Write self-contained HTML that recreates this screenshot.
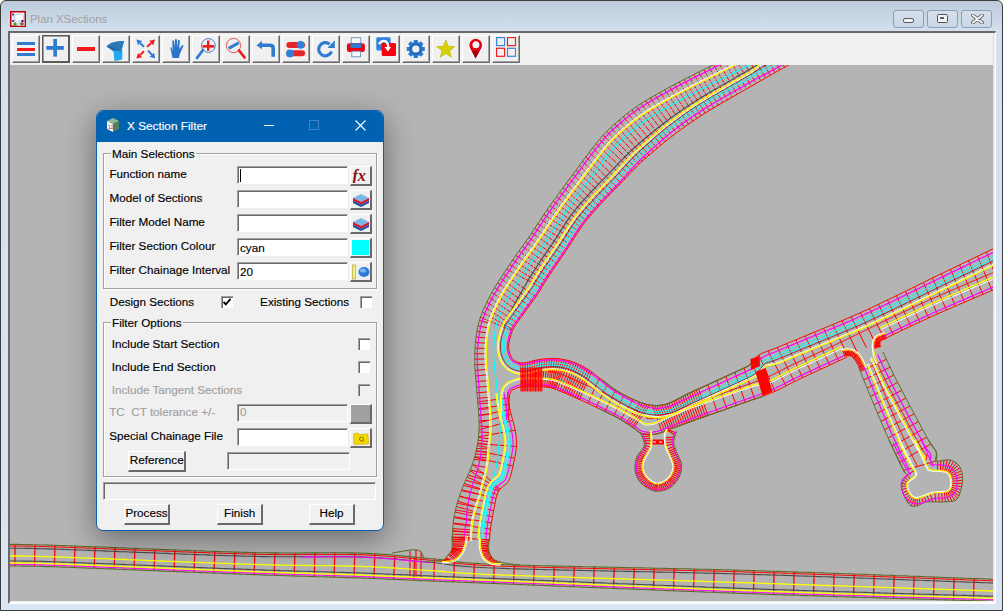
<!DOCTYPE html>
<html><head><meta charset="utf-8">
<style>
*{box-sizing:border-box;margin:0;padding:0}
html,body{width:1003px;height:611px;overflow:hidden;background:#fff;font-family:"Liberation Sans",sans-serif}
#win{position:absolute;left:0;top:0;width:1003px;height:611px;border:1px solid #3c3c3c;border-radius:6px 6px 0 0;
 background:linear-gradient(#bccbdb,#d3e0ee 30px,#d9e5f2);overflow:hidden}
#ttl{position:absolute;left:29px;top:12px;font-size:11.4px;color:#a09e9c}
.tb{position:absolute;top:9px;width:31px;height:17.5px;border:1px solid #8d9db3;border-radius:3px;background:linear-gradient(#d5e0ec,#c8d6e6)}
#tool{position:absolute;left:9px;top:32px;width:983px;height:32px;background:#f0f0f0}
.btn{position:absolute;top:2px;width:28px;height:28px;background:#f0f0f0;border-top:1px solid #fff;border-left:1px solid #fff;border-right:1px solid #696969;border-bottom:1px solid #696969;box-shadow:inset -1px -1px 0 #a0a0a0}
.btn svg{position:absolute;left:0;top:0}
#map{position:absolute;left:9px;top:64px;width:983px;height:536px;background:#b4b4b4;overflow:hidden}
#dlg{position:absolute;left:96px;top:110px;width:288px;height:421px;background:#f0f0f0;border:1px solid #0a5fb0;border-radius:7px;overflow:hidden;
 box-shadow:0 8px 30px rgba(0,0,0,0.42);font-size:11.7px;color:#000}
#dtitle{position:absolute;left:0;top:0;width:286px;height:31px;background:#0062b1;color:#fff}
.t{position:absolute;white-space:nowrap;line-height:14px;-webkit-text-stroke:0.15px currentColor}
.grp{position:absolute;border:1px solid #a0a0a0;box-shadow:inset 1px 1px 0 #fff, 1px 1px 0 #fff}
.inp{position:absolute;width:111px;height:18px;background:#fff;border-top:1px solid #a0a0a0;border-left:1px solid #a0a0a0;box-shadow:inset 1px 1px 0 #696969;border-right:1px solid #fff;border-bottom:1px solid #fff}
.ib{position:absolute;width:21px;height:19px;background:#f0f0f0;border-top:1px solid #fff;border-left:1px solid #fff;border-right:2px solid #696969;border-bottom:2px solid #696969}
.cb{position:absolute;width:12px;height:12px;background:#fff;border-top:1px solid #a0a0a0;border-left:1px solid #a0a0a0;box-shadow:inset 1px 1px 0 #696969}
.pb{position:absolute;-webkit-text-stroke:0.15px #000;height:20px;background:#f0f0f0;border-top:1px solid #fff;border-left:1px solid #fff;border-right:2px solid #696969;border-bottom:2px solid #696969;text-align:center;line-height:16px}
.dis{color:#a0a0a0}
</style></head><body>
<div id="win">
 <!-- title icon -->
 <svg style="position:absolute;left:9px;top:10px" width="16" height="16" viewBox="0 0 16 16">
  <rect x="0.75" y="0.75" width="14.5" height="14.5" fill="#f4f8f8" stroke="#c00000" stroke-width="1.5"/>
  <rect x="8" y="11" width="6.5" height="4" fill="#a8e0e0"/>
  <path d="M4 6 Q6 2.5 9 3.5 Q12 2 13.5 5.5 Q14 8 12 10 Q9 9 7 11 Q5 10 4 6Z" fill="#fff" stroke="#5090d0" stroke-width="0.8" stroke-dasharray="1 0.8"/>
  <rect x="2.2" y="2.5" width="2" height="2" fill="#7a1a8a"/><rect x="2.2" y="9" width="2" height="2" fill="#7a1a8a"/><rect x="11.5" y="9" width="2" height="2" fill="#10108a"/>
  <path d="M5 11v4M3 13h4" stroke="#108010" stroke-width="1"/><path d="M12 11v4M10 13h4" stroke="#f00000" stroke-width="1"/>
 </svg>
 <div id="ttl">Plan XSections</div>
 <div class="tb" style="left:892px"><div style="position:absolute;left:9px;top:7px;width:11px;height:5px;background:#f2f2f2;border:1px solid #5a5a5a;border-radius:2px"></div></div>
 <div class="tb" style="left:926px"><div style="position:absolute;left:9px;top:3px;width:11px;height:9px;background:#f2f2f2;border:1.5px solid #505050;border-radius:1.5px"><div style="position:absolute;left:2px;top:2px;width:4px;height:2px;border:1px solid #606060;background:#dde"></div></div></div>
 <div class="tb" style="left:960px"><svg style="position:absolute;left:9px;top:3px" width="13" height="10" viewBox="0 0 13 10"><path d="M1.8 1.3L11.2 8.7M11.2 1.3L1.8 8.7" stroke="#6a6a6a" stroke-width="3.6" stroke-linecap="round"/><path d="M1.8 1.3L11.2 8.7M11.2 1.3L1.8 8.7" stroke="#f4f4f4" stroke-width="1.8" stroke-linecap="round"/></svg></div>
 <div style="position:absolute;left:7px;top:30px;width:988px;height:573px;border-left:2px solid #696969;border-top:2px solid #696969;border-right:1px solid #fff;border-bottom:2px solid #fff;box-shadow:inset -1px -1px 0 #f0f0f0"></div>
 <div id="tool">
<div class="btn" style="left:2px"><svg width="26" height="26" viewBox="0 0 26 26"><g transform="translate(-1,-1)"><rect x="5" y="7" width="18" height="3" fill="#2f7bd0"/><rect x="5" y="13" width="18" height="3" fill="#f01c1c"/><rect x="5" y="18" width="18" height="3" fill="#2f7bd0"/></g></svg></div>
<div class="btn" style="left:32px;border:1px solid #5a5a5a;border-right:2px solid #5a5a5a;border-bottom:2px solid #5a5a5a;box-shadow:inset 1px 1px 0 #a0a0a0"><svg width="26" height="26" viewBox="0 0 26 26"><g transform="translate(-2,-2)"><rect x="12.3" y="5" width="3.7" height="17.6" fill="#2f7bd0"/><rect x="5.3" y="12" width="17.5" height="3.8" fill="#2f7bd0"/></g></svg></div>
<div class="btn" style="left:62px"><svg width="26" height="26" viewBox="0 0 26 26"><g transform="translate(-1,-1)"><rect x="5" y="12" width="18" height="4" fill="#f01c1c"/></g></svg></div>
<div class="btn" style="left:92px"><svg width="26" height="26" viewBox="0 0 26 26"><g transform="translate(-1,-1)"><path d="M4.7 11.5 C7 7.5 15 5.8 22.2 6 L19.5 16 L11.5 16.5 Z" fill="#2a78b8"/><path d="M11.5 16 L20.4 15.6 L20.2 24.5 Q16 26 12.3 25.5 Z" fill="#22a8f0"/><path d="M4.7 11.5 Q12 13.5 19.5 16" stroke="#1a5a90" stroke-width="0.8" fill="none"/></g></svg></div>
<div class="btn" style="left:122px"><svg width="26" height="26" viewBox="0 0 26 26"><g transform="translate(-1,-1)"><path d="M12.0 11.8L8.0 8.0" stroke="#2f7bd0" stroke-width="2"/><path d="M4.4 4.6L10.1 5.9L6.0 10.2Z" fill="#2f7bd0"/><path d="M15.1 11.8L19.3 8.0" stroke="#f01c1c" stroke-width="2"/><path d="M23.0 4.6L21.3 10.2L17.3 5.8Z" fill="#f01c1c"/><path d="M12.0 16.3L8.0 20.1" stroke="#f01c1c" stroke-width="2"/><path d="M4.4 23.5L6.0 17.9L10.1 22.2Z" fill="#f01c1c"/><path d="M16.0 15.4L19.9 19.8" stroke="#2f7bd0" stroke-width="2"/><path d="M23.2 23.5L17.6 21.8L22.1 17.8Z" fill="#2f7bd0"/></g></svg></div>
<div class="btn" style="left:152px"><svg width="26" height="26" viewBox="0 0 26 26"><g transform="translate(-1,-1)"><path d="M10.5 23 L8.6 14 Q8.2 12 9.3 12 L10.6 16 L10.3 6 Q11 4.6 12 6 L12.6 13 L13 4.5 Q14 3.3 14.9 4.6 L15 13 L16 5.2 Q17 4.3 17.8 5.6 L17.3 14 L20 10.3 Q21.5 9.6 21.4 11 L17.8 19 L17 23 Z" fill="#2a72cc"/></g></svg></div>
<div class="btn" style="left:182px"><svg width="26" height="26" viewBox="0 0 26 26"><g transform="translate(-1,-1)"><circle cx="16.4" cy="10.5" r="6.9" fill="none" stroke="#3a70c0" stroke-width="0.9"/><rect x="10.6" y="10" width="11.6" height="2.6" fill="#f01c1c"/><rect x="15" y="5.5" width="2.4" height="10.3" fill="#f01c1c"/><path d="M11 15 L5 23" stroke="#2f7bd0" stroke-width="2.8" stroke-linecap="round"/></g></svg></div>
<div class="btn" style="left:212px"><svg width="26" height="26" viewBox="0 0 26 26"><g transform="translate(-1,-1)"><circle cx="11.5" cy="10.5" r="7.1" fill="none" stroke="#e04040" stroke-width="0.9"/><path d="M6.8 13.4 L16.8 7.8" stroke="#2f7bd0" stroke-width="3"/><path d="M17 15.5 L22.6 22.5" stroke="#f01c1c" stroke-width="2.8" stroke-linecap="round"/></g></svg></div>
<div class="btn" style="left:242px"><svg width="26" height="26" viewBox="0 0 26 26"><g transform="translate(-1,-1)"><path d="M4.4 10.2 L10 6 L10 14.3 Z" fill="#2f7bd0"/><path d="M9.5 10.2 H18 Q21.2 10.2 21.2 13.5 V21.7" stroke="#2f7bd0" stroke-width="3.6" fill="none"/></g></svg></div>
<div class="btn" style="left:272px"><svg width="26" height="26" viewBox="0 0 26 26"><g transform="translate(-1,-1)"><rect x="4.3" y="7" width="18.8" height="6" rx="3" fill="#e8262a"/><circle cx="18.6" cy="9.8" r="3.9" fill="#2f80d8"/><rect x="4.3" y="15.2" width="18.8" height="6" rx="3" fill="#e8262a"/><circle cx="8" cy="18.4" r="3.9" fill="#2f80d8"/></g></svg></div>
<div class="btn" style="left:302px"><svg width="26" height="26" viewBox="0 0 26 26"><g transform="translate(-1,-1)"><path d="M17.6 9.2 A6.6 6.6 0 1 0 19.5 16.5" stroke="#2f7bd0" stroke-width="3.2" fill="none"/><path d="M22.8 5.3 L22.8 13 L15.5 13 Z" fill="#2f7bd0"/></g></svg></div>
<div class="btn" style="left:332px"><svg width="26" height="26" viewBox="0 0 26 26"><g transform="translate(-1,-1)"><rect x="9.2" y="2.8" width="9.6" height="6" fill="#fafafa" stroke="#6a90b8" stroke-width="0.9"/><rect x="4.9" y="8.3" width="18" height="8.6" rx="2.5" fill="#f20010"/><rect x="8.4" y="8.3" width="11" height="4.8" rx="1" fill="#2f7ad0"/><rect x="9.8" y="16.2" width="8.8" height="5.6" fill="#fafafa" stroke="#6a90b8" stroke-width="0.9"/></g></svg></div>
<div class="btn" style="left:362px"><svg width="26" height="26" viewBox="0 0 26 26"><g transform="translate(-1,-1)"><rect x="4.3" y="2.2" width="14.3" height="13.4" rx="1.5" fill="#2e80d8"/><rect x="9.7" y="8" width="14.3" height="13" rx="1.5" fill="#f40010"/><path d="M7 9 Q10 4.5 14 6.5 Q16.5 8.5 16 13" stroke="#fff" stroke-width="2.4" fill="none"/><path d="M12.5 12 L19 12 L16 16.5 Z" fill="#fff"/></g></svg></div>
<div class="btn" style="left:392px"><svg width="26" height="26" viewBox="0 0 26 26"><g transform="translate(-1,-1)"><polygon points="22.78,11.99 22.78,16.01 20.49,16.07 19.99,17.27 21.57,18.93 18.73,21.77 17.07,20.19 15.87,20.69 15.81,22.98 11.79,22.98 11.73,20.69 10.53,20.19 8.87,21.77 6.03,18.93 7.61,17.27 7.11,16.07 4.82,16.01 4.82,11.99 7.11,11.93 7.61,10.73 6.03,9.07 8.87,6.23 10.53,7.81 11.73,7.31 11.79,5.02 15.81,5.02 15.87,7.31 17.07,7.81 18.73,6.23 21.57,9.07 19.99,10.73 20.49,11.93" fill="#2878d0"/><circle cx="13.8" cy="14.0" r="3.6" fill="#f0f0f0"/><circle cx="13.8" cy="14.0" r="5" fill="none" stroke="#1a5aa8" stroke-width="1"/></g></svg></div>
<div class="btn" style="left:422px"><svg width="26" height="26" viewBox="0 0 26 26"><g transform="translate(-1,-1)"><polygon points="13.80,4.90 16.15,11.26 22.93,11.53 17.60,15.74 19.44,22.27 13.80,18.50 8.16,22.27 10.00,15.74 4.67,11.53 11.45,11.26" fill="#d8d000" stroke="#b8b000" stroke-width="0.6"/></g></svg></div>
<div class="btn" style="left:452px"><svg width="26" height="26" viewBox="0 0 26 26"><g transform="translate(-1,-1)"><path d="M13.6 23.5 L8.2 13.2 A6.3 6.3 0 1 1 19.2 13.2 Z" fill="#e00010"/><path d="M13.6 23.5 L10 16 L17.2 16 Z" fill="#a00008"/><circle cx="13.9" cy="9.7" r="3.5" fill="#f4f4f4"/></g></svg></div>
<div class="btn" style="left:482px"><svg width="26" height="26" viewBox="0 0 26 26"><g transform="translate(-1,-1)"><rect x="4.6" y="2.6" width="8" height="8" fill="none" stroke="#3a88d8" stroke-width="1.2"/><rect x="15.5" y="2.6" width="8" height="8" fill="none" stroke="#f02020" stroke-width="1.2"/><rect x="4.6" y="13.3" width="8" height="8" fill="none" stroke="#f02020" stroke-width="1.2"/><rect x="15.5" y="13.3" width="8" height="8" fill="none" stroke="#3a88d8" stroke-width="1.2"/></g></svg></div>
 </div>
 <div id="map">
<svg width="983" height="536" viewBox="10 65 983 536" style="position:absolute;left:0;top:0" fill="none" stroke-linecap="butt" stroke-linejoin="round"><path d="M767.5 37.2L784.6 67.2M762.6 39.7L779.8 69.9M757.7 42.2L775.0 72.6M752.8 44.7L770.3 75.3M747.9 47.2L765.5 78.0M743.0 49.7L760.8 80.8M738.1 52.1L756.0 83.5M733.2 54.6L751.2 86.2M728.3 57.1L746.5 88.9M723.4 59.6L741.8 91.6M718.5 62.1L737.0 94.3M713.6 64.6L732.3 97.1M708.7 67.0L727.5 99.8M703.7 69.5L722.8 102.5M698.8 72.0L718.2 105.2M693.9 74.4L713.7 107.8M689.0 76.9L709.4 110.5M684.1 79.4L705.2 113.0M679.2 82.0L701.1 115.7M674.4 84.5L696.9 118.4M669.5 87.1L692.8 121.2M664.7 89.8L688.5 124.2M659.9 92.5L684.4 127.0M655.1 95.2L680.3 130.0M650.3 97.9L676.2 133.0M645.6 100.7L672.4 135.8M641.0 103.7L668.7 138.8M636.4 106.7L665.0 141.7M631.9 109.9L661.1 144.9M627.6 113.3L657.1 148.2M623.3 116.7L653.0 151.7M619.0 120.2L649.1 155.1M614.9 123.8L645.3 158.4M610.8 127.5L642.1 161.3M606.8 131.3L639.0 164.3M603.1 135.3L635.7 167.5M599.5 139.5L632.3 171.0M596.0 143.7L629.0 174.6M592.6 148.1L625.0 178.8M589.2 152.4L621.0 183.0M585.9 156.8L616.9 187.2M582.6 161.2L613.1 191.1M579.3 165.6L609.4 194.8M576.0 170.0L606.0 198.5M572.8 174.5L602.4 202.2M569.5 178.9L599.0 205.9M566.2 183.3L595.6 209.6M563.0 187.7L592.4 213.3M559.7 192.2L589.2 216.9M556.5 196.6L586.2 220.6M553.3 201.1L583.6 224.0M550.1 205.6L581.2 227.3M547.0 210.1L578.7 231.0M543.8 214.6L576.1 235.1M540.8 219.2L573.2 239.6M537.7 223.8L570.1 244.6M534.7 228.3L566.9 249.4M531.7 232.9L563.5 254.5M528.6 237.5L560.2 259.3M525.5 242.0L557.1 263.8M522.3 246.5L554.0 268.3M519.1 251.0L551.2 272.5M515.9 255.4L548.4 276.7M512.7 260.0L545.7 280.9M509.6 264.5L543.2 285.0M506.5 269.1L541.6 287.7M503.5 273.7L535.8 296.8M500.5 278.3L532.5 301.4M497.6 282.9L529.2 305.9M494.7 287.6L526.0 310.3M492.0 292.4L522.9 314.7M489.3 297.2L519.9 318.9M486.8 302.1L517.0 323.0M484.5 307.1L514.6 326.6M482.3 312.1L512.9 329.5M480.4 317.3L512.3 330.7" stroke="#ff0000" stroke-width="1.00" stroke-dasharray="6 1.2"/><path d="M479.4 320.5L489.7 323.3M478.0 325.9L488.6 328.0M476.9 331.4L487.7 333.1M476.0 336.9L487.0 338.1M475.4 342.5L486.5 343.3M475.0 348.1L486.2 348.5M474.7 353.7L486.1 353.8M474.7 359.3L486.2 358.9M474.8 364.9L486.5 364.1M475.2 370.5L486.9 369.4M475.6 376.0L487.4 374.8M476.0 381.6L488.0 380.6M476.5 387.2L488.4 386.2M476.9 392.8L488.9 391.8M477.4 398.4L489.4 397.3M477.9 403.9L489.9 402.9M478.4 409.5L490.3 408.6M478.8 415.1L490.7 414.4M479.0 420.7L491.0 420.4M479.1 426.3L491.1 426.4M478.9 431.9L490.8 432.7M478.4 437.5L490.3 438.9M478.0 440.2L489.9 441.9M477.6 443.0L489.4 444.9M477.1 445.8L489.0 447.5M476.6 448.5L489.0 448.9M476.0 451.3L488.8 452.1M475.4 454.0L488.7 455.0M474.7 456.7L488.4 458.0M473.9 459.4L488.0 461.2M472.2 464.7L487.1 467.6M470.2 470.0L485.8 473.7M468.0 475.1L484.2 479.6M465.7 480.2L482.7 484.9M463.5 485.3L481.4 489.9M461.4 490.6L480.3 494.6M459.5 495.8L477.9 502.1M457.8 501.2L476.3 507.0M456.3 506.5L474.9 511.7M455.0 512.0L473.8 516.2M453.9 517.5L472.9 520.9M453.2 523.0L472.3 525.2M452.7 528.6L471.8 529.9M452.6 531.4L471.7 532.4M452.4 534.2L471.5 535.2M452.4 537.0L471.4 537.6M452.3 539.8L471.4 540.1" stroke="#ff0000" stroke-width="1.00"/><path d="M477.7 401.8L508.3 398.0M478.3 408.8L509.1 404.3M478.8 415.8L510.0 409.5M479.1 422.8L511.2 414.4M479.0 429.8L512.8 420.4M478.4 436.8L515.1 430.2M477.5 443.7L516.4 446.4M476.1 450.6L514.7 458.2M474.5 457.4L513.0 466.0M472.4 464.1L499.9 489.1M469.9 470.6L499.3 490.0M467.1 477.0L498.5 491.2M464.3 483.4L497.2 494.5M461.6 489.9L496.1 498.4M459.3 496.5L495.0 503.4M457.2 503.2L493.6 510.6M455.4 509.9L492.4 516.7M454.0 516.8L491.4 522.8M453.1 523.7L490.4 529.1M452.6 530.7L489.9 533.9M452.3 537.7L489.5 539.8" stroke="#ff0000" stroke-width="1.00"/><polyline points="770.0,36.0 768.9,36.5 767.7,37.2 766.3,37.9 764.8,38.6 763.4,39.4 761.8,40.1 760.2,40.9 758.5,41.8 756.8,42.7 755.0,43.6 753.1,44.5 751.2,45.5 749.2,46.5 747.2,47.5 745.2,48.6 743.1,49.6 741.0,50.7 739.0,51.7 736.9,52.8 734.8,53.8 732.7,54.9 730.7,55.9 728.7,56.9 726.8,57.9 724.8,58.9 722.9,59.8 721.0,60.8 719.1,61.7 717.3,62.7 715.4,63.6 713.5,64.6 711.5,65.6 709.6,66.6 707.6,67.6 705.6,68.6 703.6,69.5 701.7,70.5 699.8,71.5 697.9,72.4 696.1,73.3 694.3,74.2 692.6,75.1 690.9,75.9 689.2,76.8 687.5,77.6 685.9,78.5 684.2,79.4 682.5,80.3 680.7,81.2 679.0,82.1 677.3,83.0 675.5,83.9 673.8,84.8 672.0,85.8 670.3,86.7 668.6,87.7 666.8,88.6 665.1,89.6 663.4,90.5 661.6,91.5 659.9,92.5 658.1,93.5 656.4,94.5 654.6,95.5 652.8,96.5 651.0,97.5 649.3,98.5 647.5,99.6 645.7,100.7 643.9,101.8 642.2,102.9 640.4,104.0 638.7,105.1 637.0,106.3 635.3,107.5 633.6,108.7 631.9,109.9 630.2,111.2 628.6,112.5 627.0,113.7 625.4,115.0 623.8,116.3 622.2,117.6 620.6,118.9 619.1,120.2 617.6,121.4 616.1,122.7 614.7,124.0 613.2,125.2 611.8,126.5 610.4,127.8 609.0,129.2 607.6,130.5 606.3,131.9 604.9,133.4 603.5,134.8 602.2,136.3 600.9,137.8 599.6,139.3 598.3,140.9 597.1,142.4 595.8,143.9 594.6,145.5 593.4,147.0 592.1,148.6 590.9,150.2 589.7,151.9 588.4,153.5 587.1,155.2 585.8,156.9 584.5,158.6 583.2,160.4 581.9,162.1 580.6,163.9 579.3,165.6 578.0,167.4 576.8,169.1 575.5,170.8 574.2,172.5 573.0,174.2 571.7,175.9 570.5,177.6 569.2,179.3 568.0,181.0 566.7,182.6 565.5,184.3 564.3,186.0 563.0,187.7 561.8,189.4 560.6,191.0 559.4,192.7 558.2,194.4 557.0,196.0 555.8,197.6 554.6,199.3 553.5,200.9 552.3,202.5 551.1,204.1 550.0,205.8 548.8,207.4 547.7,209.0 546.5,210.7 545.3,212.4 544.1,214.2 542.9,216.0 541.7,217.8 540.5,219.6 539.3,221.4 538.1,223.2 536.9,225.0 535.7,226.8 534.6,228.5 533.4,230.3 532.3,232.0 531.2,233.7 530.1,235.3 529.0,237.0 527.9,238.6 526.7,240.2 525.6,241.8 524.5,243.3 523.4,244.9 522.3,246.5 521.2,248.0 520.0,249.6 518.9,251.2 517.8,252.7 516.6,254.3 515.5,256.0 514.4,257.6 513.2,259.2 512.1,260.9 510.9,262.5 509.8,264.2 508.6,266.0 507.5,267.7 506.3,269.4 505.1,271.2 503.9,273.0 502.8,274.8 501.6,276.6 500.4,278.4 499.3,280.2 498.1,282.0 497.0,283.9 495.9,285.7 494.8,287.5 493.7,289.3 492.6,291.2 491.6,293.1 490.6,294.9 489.6,296.8 488.6,298.7 487.6,300.6 486.7,302.4 485.8,304.3 484.9,306.2 484.0,308.0 483.2,309.9 482.5,311.8 481.7,313.6 481.0,315.5 480.3,317.5 479.7,319.4 479.1,321.4 478.6,323.4 478.1,325.5 477.6,327.6 477.2,329.6 476.8,331.7 476.5,333.7 476.2,335.8 475.9,337.8 475.7,339.8 475.5,341.8 475.3,343.8 475.1,345.7 475.0,347.7 474.9,349.6 474.8,351.6 474.7,353.6 474.7,355.5 474.7,357.5 474.7,359.4 474.7,361.4 474.8,363.3 474.8,365.2 475.0,367.2 475.1,369.1 475.2,371.1 475.3,373.0 475.5,375.0 475.7,377.1 475.8,379.1 476.0,381.2 476.2,383.3 476.3,385.3 476.5,387.4 476.7,389.5 476.8,391.5 477.0,393.6 477.2,395.6 477.4,397.7 477.5,399.7 477.7,401.7 477.9,403.8 478.1,405.9 478.2,407.9 478.4,410.0 478.6,412.1 478.7,414.1 478.8,416.2 478.9,418.3 479.0,420.3 479.1,422.3 479.1,424.4 479.1,426.4 479.0,428.5 479.0,430.6 478.8,432.7 478.6,434.8 478.4,436.9 478.2,439.1 477.9,441.2 477.5,443.3 477.2,445.3 476.8,447.4 476.4,449.4 476.0,451.3 475.5,453.3 475.1,455.2 474.6,457.1 474.1,458.9 473.5,460.8 472.9,462.7 472.3,464.5 471.6,466.4 470.9,468.2 470.2,470.1 469.4,471.9 468.6,473.8 467.7,475.7 466.8,477.6 466.0,479.6 465.1,481.5 464.2,483.5 463.4,485.5 462.6,487.5 461.8,489.6 461.0,491.6 460.3,493.6 459.6,495.6 458.9,497.6 458.3,499.6 457.7,501.6 457.1,503.6 456.5,505.7 456.0,507.7 455.5,509.7 455.0,511.7 454.6,513.7 454.2,515.8 453.9,517.9 453.5,520.0 453.3,522.1 453.1,524.2 452.9,526.3 452.7,528.5 452.6,530.6 452.5,532.8 452.4,534.9 452.4,537.0 452.3,539.2 452.3,541.0" stroke="#5b6b2a" stroke-width="1.00" /><polyline points="771.4,38.7 770.3,39.2 769.0,39.9 767.6,40.6 766.2,41.3 764.7,42.0 763.2,42.8 761.6,43.6 759.9,44.5 758.2,45.4 756.3,46.3 754.5,47.2 752.6,48.2 750.6,49.2 748.6,50.2 746.5,51.2 744.5,52.3 742.4,53.3 740.3,54.4 738.2,55.4 736.2,56.5 734.1,57.5 732.1,58.6 730.1,59.6 728.1,60.6 726.2,61.5 724.3,62.5 722.4,63.5 720.5,64.4 718.6,65.4 716.7,66.3 714.8,67.3 712.9,68.3 710.9,69.2 708.9,70.2 707.0,71.2 705.0,72.2 703.0,73.2 701.1,74.2 699.3,75.1 697.4,76.0 695.7,76.9 693.9,77.8 692.3,78.6 690.6,79.5 688.9,80.3 687.2,81.2 685.6,82.0 683.9,82.9 682.1,83.8 680.4,84.7 678.7,85.6 676.9,86.6 675.2,87.5 673.5,88.4 671.7,89.4 670.0,90.3 668.3,91.3 666.5,92.2 664.8,93.2 663.1,94.1 661.4,95.1 659.6,96.1 657.9,97.1 656.1,98.1 654.3,99.1 652.5,100.1 650.8,101.1 649.0,102.2 647.3,103.2 645.5,104.3 643.8,105.4 642.1,106.5 640.4,107.6 638.7,108.8 637.0,110.0 635.3,111.1 633.7,112.4 632.1,113.6 630.4,114.8 628.8,116.1 627.2,117.4 625.7,118.6 624.1,119.9 622.6,121.2 621.0,122.5 619.6,123.7 618.1,125.0 616.7,126.2 615.2,127.5 613.8,128.7 612.5,130.0 611.1,131.3 609.7,132.7 608.4,134.0 607.1,135.4 605.7,136.8 604.4,138.3 603.1,139.8 601.9,141.3 600.6,142.8 599.4,144.3 598.2,145.8 596.9,147.3 595.7,148.9 594.5,150.5 593.3,152.1 592.1,153.7 590.8,155.3 589.5,157.0 588.2,158.7 586.9,160.4 585.6,162.2 584.3,163.9 583.0,165.7 581.7,167.4 580.4,169.1 579.2,170.9 577.9,172.6 576.6,174.3 575.4,176.0 574.1,177.7 572.9,179.4 571.6,181.1 570.4,182.7 569.1,184.4 567.9,186.1 566.7,187.8 565.5,189.4 564.2,191.1 563.0,192.8 561.8,194.5 560.6,196.1 559.4,197.8 558.2,199.4 557.1,201.0 555.9,202.6 554.7,204.3 553.6,205.9 552.4,207.5 551.3,209.1 550.1,210.8 549.0,212.4 547.8,214.1 546.6,215.9 545.4,217.7 544.2,219.4 543.0,221.2 541.8,223.1 540.6,224.9 539.4,226.7 538.2,228.4 537.1,230.2 535.9,231.9 534.8,233.6 533.7,235.3 532.5,237.0 531.4,238.7 530.3,240.3 529.2,241.9 528.1,243.5 527.0,245.1 525.8,246.7 524.7,248.2 523.6,249.8 522.5,251.3 521.4,252.9 520.2,254.5 519.1,256.1 518.0,257.7 516.8,259.3 515.7,260.9 514.6,262.6 513.4,264.2 512.3,265.9 511.1,267.6 510.0,269.4 508.8,271.1 507.6,272.9 506.5,274.6 505.3,276.4 504.1,278.2 502.9,280.0 501.8,281.8 500.7,283.6 499.5,285.4 498.4,287.2 497.4,289.0 496.3,290.9 495.2,292.7 494.2,294.5 493.2,296.3 492.2,298.2 491.2,300.0 490.2,301.9 489.3,303.7 488.4,305.6 487.5,307.4 486.7,309.2 485.9,311.0 485.1,312.8 484.4,314.7 483.7,316.5 483.0,318.4 482.4,320.3 481.8,322.2 481.3,324.1 480.8,326.1 480.4,328.1 479.9,330.1 479.6,332.2 479.2,334.2 478.9,336.2 478.6,338.2 478.4,340.1 478.2,342.1 478.0,344.0 477.8,345.9 477.7,347.9 477.5,349.8 477.4,351.7 477.3,353.6 477.3,355.5 477.3,357.5 477.3,359.4 477.3,361.3 477.4,363.2 477.4,365.1 477.5,367.0 477.6,368.9 477.7,370.9 477.9,372.9 478.0,374.8 478.2,376.9 478.3,378.9 478.5,381.0 478.6,383.1 478.8,385.1 478.9,387.2 479.0,389.3 479.2,391.3 479.3,393.4 479.5,395.4 479.6,397.5 479.8,399.5 479.9,401.6 480.1,403.6 480.2,405.7 480.4,407.8 480.5,409.8 480.7,411.9 480.8,414.0 480.9,416.1 481.0,418.2 481.1,420.2 481.3,422.3 481.5,424.4 481.7,426.5 481.9,428.6 482.0,430.8 482.1,432.9 482.1,435.1 482.1,437.4 482.0,439.6 481.9,441.8 481.8,444.0 481.6,446.1 481.4,448.3 481.2,450.4 481.0,452.4 480.7,454.5 480.4,456.5 480.1,458.5 479.7,460.5 479.3,462.6 478.9,464.6 478.4,466.7 477.8,468.7 477.3,470.7 476.6,472.7 476.0,474.8 475.3,476.8 474.6,478.8 473.9,480.8 473.2,482.8 472.6,484.8 472.0,486.8 471.4,488.8 470.9,490.9 470.3,492.9 469.9,494.8 469.4,496.8 469.0,498.8 468.6,500.8 468.3,502.7 467.9,504.7 467.6,506.6 467.3,508.6 467.1,510.5 466.9,512.4 466.7,514.3 466.6,516.2 466.5,518.0 466.4,519.9 466.4,521.7 466.0,523.6 465.7,525.4 465.3,527.3 465.0,529.3 464.7,531.3 464.5,533.3 464.2,535.3 464.0,537.3 463.8,539.3 463.6,541.0" stroke="#ff00ff" stroke-width="1.20" /><polyline points="774.5,44.9 773.5,45.5 772.2,46.1 770.8,46.8 769.3,47.5 767.9,48.3 766.4,49.1 764.7,49.9 763.1,50.7 761.3,51.6 759.5,52.5 757.6,53.5 755.7,54.4 753.7,55.4 751.7,56.5 749.7,57.5 747.6,58.5 745.6,59.6 743.5,60.6 741.4,61.7 739.3,62.7 737.3,63.8 735.2,64.8 733.2,65.8 731.3,66.8 729.3,67.8 727.4,68.8 725.5,69.7 723.7,70.7 721.8,71.6 719.9,72.6 718.0,73.5 716.0,74.5 714.1,75.5 712.1,76.5 710.1,77.5 708.1,78.5 706.2,79.5 704.3,80.4 702.4,81.3 700.6,82.3 698.8,83.1 697.1,84.0 695.4,84.9 693.7,85.7 692.1,86.6 690.4,87.4 688.8,88.3 687.1,89.1 685.4,90.0 683.7,90.9 681.9,91.8 680.2,92.7 678.5,93.7 676.8,94.6 675.1,95.5 673.3,96.4 671.6,97.4 669.9,98.3 668.2,99.3 666.5,100.2 664.8,101.2 663.0,102.2 661.3,103.2 659.6,104.1 657.8,105.1 656.1,106.1 654.3,107.2 652.6,108.2 650.9,109.2 649.2,110.3 647.6,111.3 645.9,112.4 644.3,113.4 642.6,114.6 641.0,115.7 639.5,116.8 637.9,118.0 636.3,119.2 634.7,120.4 633.2,121.6 631.6,122.8 630.1,124.1 628.6,125.3 627.0,126.6 625.6,127.8 624.1,129.0 622.7,130.3 621.3,131.5 619.9,132.7 618.6,133.9 617.3,135.1 616.0,136.4 614.7,137.6 613.4,138.9 612.2,140.2 610.9,141.6 609.7,143.0 608.4,144.4 607.2,145.8 606.0,147.2 604.8,148.7 603.6,150.2 602.4,151.7 601.3,153.2 600.1,154.7 598.8,156.3 597.6,157.9 596.4,159.6 595.1,161.2 593.8,162.9 592.5,164.6 591.2,166.4 589.9,168.1 588.6,169.9 587.4,171.6 586.1,173.3 584.8,175.0 583.5,176.8 582.2,178.5 581.0,180.2 579.7,181.9 578.5,183.5 577.3,185.2 576.0,186.9 574.8,188.6 573.6,190.2 572.3,191.9 571.1,193.6 569.9,195.3 568.7,196.9 567.5,198.6 566.3,200.2 565.1,201.9 563.9,203.5 562.7,205.1 561.6,206.7 560.4,208.3 559.3,209.9 558.2,211.5 557.0,213.1 555.9,214.8 554.7,216.4 553.6,218.1 552.4,219.8 551.2,221.6 550.0,223.4 548.8,225.1 547.6,226.9 546.4,228.7 545.2,230.5 544.1,232.3 542.9,234.0 541.8,235.8 540.6,237.5 539.5,239.2 538.4,240.9 537.2,242.6 536.1,244.2 535.0,245.9 533.8,247.5 532.7,249.1 531.5,250.7 530.4,252.3 529.3,253.9 528.2,255.4 527.0,257.0 525.9,258.6 524.8,260.1 523.7,261.7 522.6,263.3 521.4,264.9 520.3,266.5 519.2,268.2 518.1,269.9 516.9,271.5 515.8,273.3 514.6,275.0 513.5,276.7 512.3,278.5 511.1,280.3 510.0,282.0 508.8,283.8 507.7,285.6 506.6,287.3 505.5,289.1 504.4,290.9 503.4,292.6 502.3,294.4 501.4,296.1 500.4,297.9 499.4,299.8 498.5,301.6 497.6,303.4 496.7,305.2 495.9,307.0 495.1,308.8 494.3,310.5 493.5,312.3 492.8,314.0 492.2,315.7 491.5,317.4 491.0,319.1 490.4,320.8 489.9,322.6 489.4,324.3 489.0,326.1 488.6,327.9 488.2,329.8 487.9,331.7 487.6,333.5 487.3,335.4 487.1,337.3 486.9,339.2 486.7,341.1 486.6,342.9 486.4,344.8 486.3,346.6 486.2,348.4 486.2,350.3 486.1,352.1 486.1,353.9 486.1,355.7 486.2,357.5 486.2,359.3 486.3,361.1 486.4,362.9 486.5,364.7 486.6,366.5 486.8,368.3 487.0,370.2 487.2,372.2 487.4,374.1 487.6,376.1 487.8,378.2 488.0,380.2 488.1,382.3 488.3,384.4 488.5,386.4 488.6,388.5 488.8,390.5 489.0,392.6 489.1,394.6 489.3,396.6 489.5,398.7 489.7,400.7 489.9,402.8 490.0,404.9 490.2,407.0 490.4,409.1 490.5,411.2 490.7,413.4 490.8,415.5 490.9,417.7 491.0,419.9 491.1,422.1 491.1,424.4 491.1,426.6 491.0,428.9 490.9,431.2 490.8,433.6 490.6,435.9 490.3,438.3 490.1,440.6 489.7,442.9 489.4,445.2 489.0,447.5 489.0,449.7 488.9,451.9 488.7,454.2 488.5,456.3 488.3,458.5 488.1,460.7 487.8,462.8 487.5,465.0 487.1,467.3 486.7,469.6 486.2,471.8 485.7,474.0 485.1,476.3 484.5,478.4 483.9,480.6 483.3,482.7 482.7,484.8 482.2,486.8 481.6,488.8 481.2,490.8 480.7,492.7 480.3,494.6 479.9,496.5 479.3,498.3 478.6,500.1 478.0,501.8 477.4,503.6 476.8,505.4 476.2,507.2 475.7,508.9 475.2,510.7 474.7,512.4 474.3,514.2 473.9,515.9 473.5,517.5 473.2,519.2 472.9,520.9 472.6,522.6 472.4,524.3 472.2,526.0 472.0,527.8 471.8,529.7 471.7,531.6 471.6,533.6 471.5,535.6 471.4,537.5 471.4,539.4 471.3,541.1" stroke="#ffff00" stroke-width="1.40" /><polyline points="774.0,43.9 772.9,44.4 771.6,45.0 770.3,45.7 768.8,46.5 767.4,47.2 765.8,48.0 764.2,48.8 762.5,49.6 760.8,50.5 759.0,51.4 757.1,52.4 755.2,53.4 753.2,54.4 751.2,55.4 749.2,56.4 747.1,57.5 745.0,58.5 742.9,59.6 740.8,60.6 738.8,61.7 736.7,62.7 734.7,63.7 732.7,64.8 730.7,65.7 728.8,66.7 726.9,67.7 725.0,68.6 723.1,69.6 721.2,70.5 719.3,71.5 717.4,72.5 715.5,73.4 713.5,74.4 711.5,75.4 709.6,76.4 707.6,77.4 705.6,78.4 703.7,79.3 701.9,80.3 700.0,81.2 698.3,82.1 696.6,82.9 694.9,83.8 693.2,84.6 691.5,85.5 689.9,86.3 688.2,87.2 686.5,88.1 684.8,89.0 683.1,89.9 681.4,90.8 679.7,91.7 677.9,92.6 676.2,93.5 674.5,94.5 672.8,95.4 671.1,96.3 669.4,97.3 667.6,98.2 665.9,99.2 664.2,100.1 662.5,101.1 660.7,102.1 659.0,103.1 657.2,104.1 655.5,105.1 653.7,106.1 652.0,107.2 650.3,108.2 648.6,109.2 646.9,110.3 645.2,111.4 643.6,112.5 642.0,113.6 640.4,114.7 638.7,115.8 637.1,117.0 635.6,118.2 634.0,119.4 632.4,120.6 630.9,121.9 629.3,123.1 627.8,124.4 626.3,125.6 624.8,126.9 623.3,128.1 621.9,129.4 620.5,130.6 619.1,131.8 617.8,133.0 616.4,134.3 615.1,135.5 613.8,136.8 612.6,138.1 611.3,139.4 610.0,140.8 608.8,142.2 607.5,143.6 606.3,145.0 605.1,146.5 603.9,147.9 602.7,149.4 601.5,150.9 600.3,152.5 599.1,154.0 597.9,155.6 596.7,157.2 595.4,158.8 594.2,160.5 592.9,162.2 591.6,163.9 590.3,165.7 589.0,167.4 587.7,169.1 586.4,170.9 585.1,172.6 583.8,174.3 582.5,176.0 581.3,177.8 580.0,179.5 578.8,181.1 577.5,182.8 576.3,184.5 575.1,186.2 573.8,187.9 572.6,189.5 571.4,191.2 570.1,192.9 568.9,194.5 567.7,196.2 566.5,197.9 565.3,199.5 564.1,201.2 562.9,202.8 561.8,204.4 560.6,206.0 559.5,207.6 558.3,209.2 557.2,210.8 556.0,212.5 554.9,214.1 553.7,215.7 552.6,217.4 551.4,219.2 550.2,220.9 549.0,222.7 547.8,224.5 546.6,226.3 545.4,228.1 544.2,229.9 543.1,231.6 541.9,233.4 540.8,235.1 539.6,236.8 538.5,238.5 537.4,240.2 536.2,241.9 535.1,243.6 534.0,245.2 532.8,246.8 531.7,248.4 530.6,250.0 529.4,251.6 528.3,253.2 527.2,254.7 526.1,256.3 524.9,257.9 523.8,259.4 522.7,261.0 521.6,262.6 520.5,264.2 519.3,265.9 518.2,267.5 517.1,269.2 515.9,270.9 514.8,272.6 513.6,274.3 512.5,276.1 511.3,277.8 510.1,279.6 509.0,281.4 507.8,283.2 506.7,284.9 505.6,286.7 504.5,288.5 503.4,290.2 502.3,292.0 501.3,293.8 500.3,295.6 499.3,297.4 498.4,299.2 497.5,301.0 496.6,302.8 495.7,304.6 494.8,306.5 494.0,308.2 493.2,310.0 492.5,311.8 491.7,313.5 491.1,315.2 490.4,317.0 489.8,318.7 489.3,320.4 488.8,322.2 488.3,324.0 487.8,325.8 487.4,327.7 487.0,329.5 486.7,331.4 486.4,333.3 486.2,335.2 485.9,337.1 485.7,339.0 485.5,340.9 485.4,342.8 485.2,344.7 485.1,346.5 485.0,348.4 485.0,350.2 484.9,352.0 484.9,353.8 484.9,355.6 485.0,357.5 485.0,359.3 485.1,361.1 485.2,362.9 485.3,364.7 485.4,366.6 485.6,368.4 485.8,370.3 486.0,372.2 486.2,374.2 486.4,376.2 486.6,378.2 486.8,380.3 486.9,382.4 487.1,384.5 487.3,386.5 487.4,388.6 487.6,390.6 487.8,392.7 487.9,394.7 488.1,396.7 488.3,398.8 488.5,400.8 488.7,402.9 488.8,405.0 489.0,407.1 489.2,409.2 489.3,411.3 489.5,413.4 489.6,415.6 489.7,417.7 489.8,419.9 489.9,422.1 489.9,424.4 489.9,426.6 489.8,428.9 489.7,431.2 489.6,433.5 489.4,435.8 489.1,438.2 488.9,440.5 488.5,442.8 488.2,445.0 487.9,447.2 487.8,449.5 487.7,451.7 487.5,453.9 487.4,456.1 487.2,458.2 486.9,460.4 486.7,462.5 486.4,464.7 486.0,466.9 485.6,469.2 485.1,471.4 484.6,473.6 484.0,475.8 483.4,478.0 482.8,480.1 482.2,482.2 481.6,484.3 481.1,486.4 480.6,488.3 480.1,490.3 479.6,492.3 479.2,494.2 478.8,496.1 478.2,497.9 477.5,499.7 476.9,501.5 476.2,503.3 475.7,505.0 475.1,506.8 474.6,508.6 474.1,510.4 473.6,512.1 473.1,513.9 472.7,515.6 472.3,517.3 472.0,519.0 471.7,520.7 471.4,522.4 471.2,524.1 471.0,525.9 470.8,527.7 470.6,529.6 470.5,531.5 470.4,533.5 470.3,535.6 470.2,537.5 470.2,539.4 470.1,541.1" stroke="#ffffff" stroke-width="1.00" /><polyline points="777.5,50.7 776.4,51.3 775.1,51.9 773.7,52.6 772.3,53.3 770.8,54.1 769.3,54.8 767.7,55.7 766.0,56.5 764.3,57.4 762.4,58.3 760.6,59.3 758.6,60.2 756.7,61.2 754.7,62.3 752.6,63.3 750.6,64.3 748.5,65.4 746.4,66.4 744.3,67.5 742.3,68.5 740.2,69.6 738.2,70.6 736.2,71.6 734.2,72.6 732.3,73.6 730.4,74.6 728.5,75.5 726.6,76.5 724.7,77.4 722.8,78.4 720.9,79.3 719.0,80.3 717.0,81.3 715.0,82.3 713.0,83.3 711.0,84.3 709.1,85.3 707.2,86.2 705.3,87.2 703.5,88.1 701.7,89.0 700.0,89.8 698.3,90.7 696.7,91.5 695.0,92.3 693.4,93.2 691.7,94.0 690.1,94.9 688.4,95.8 686.7,96.7 685.0,97.6 683.3,98.5 681.6,99.4 679.9,100.3 678.2,101.2 676.5,102.2 674.8,103.1 673.1,104.0 671.4,105.0 669.7,105.9 668.0,106.9 666.2,107.8 664.5,108.8 662.8,109.8 661.0,110.8 659.3,111.8 657.6,112.8 656.0,113.8 654.3,114.8 652.7,115.8 651.0,116.8 649.5,117.8 647.9,118.8 646.3,119.9 644.8,121.0 643.3,122.1 641.7,123.2 640.2,124.3 638.7,125.5 637.2,126.7 635.7,127.9 634.2,129.1 632.7,130.3 631.2,131.5 629.8,132.8 628.3,134.0 626.9,135.2 625.6,136.4 624.3,137.5 623.0,138.7 621.7,139.9 620.5,141.0 619.3,142.2 618.1,143.4 616.9,144.7 615.7,145.9 614.5,147.3 613.3,148.6 612.2,150.0 611.0,151.4 609.9,152.8 608.7,154.2 607.6,155.7 606.4,157.2 605.2,158.7 604.0,160.3 602.8,161.9 601.6,163.5 600.3,165.1 599.0,166.8 597.7,168.5 596.4,170.3 595.2,172.0 593.9,173.7 592.6,175.5 591.3,177.2 590.0,178.9 588.7,180.6 587.5,182.3 586.2,184.0 585.0,185.7 583.7,187.4 582.5,189.1 581.3,190.7 580.0,192.4 578.8,194.1 577.6,195.8 576.3,197.4 575.1,199.1 573.9,200.7 572.7,202.4 571.5,204.0 570.3,205.7 569.2,207.3 568.0,208.9 566.9,210.5 565.7,212.1 564.6,213.7 563.5,215.3 562.3,216.9 561.2,218.5 560.1,220.1 558.9,221.8 557.7,223.5 556.6,225.2 555.4,227.0 554.2,228.8 553.0,230.5 551.8,232.3 550.7,234.1 549.5,235.9 548.3,237.6 547.2,239.4 546.0,241.1 544.9,242.8 543.8,244.5 542.6,246.2 541.5,247.9 540.3,249.6 539.1,251.3 538.0,252.9 536.8,254.5 535.7,256.1 534.6,257.7 533.4,259.2 532.3,260.8 531.2,262.3 530.1,263.9 529.0,265.4 527.9,267.0 526.8,268.6 525.7,270.2 524.6,271.8 523.4,273.5 522.3,275.2 521.2,276.9 520.0,278.6 518.9,280.3 517.7,282.1 516.6,283.8 515.4,285.6 514.3,287.3 513.2,289.0 512.1,290.8 511.0,292.5 510.0,294.2 509.0,295.9 508.0,297.6 507.0,299.4 506.1,301.1 505.2,302.9 504.4,304.7 503.5,306.4 502.7,308.2 501.9,309.9 501.2,311.7 500.4,313.4 499.8,315.0 499.1,316.7 498.5,318.3 498.0,319.9 497.5,321.4 497.0,323.0 496.6,324.6 496.2,326.2 495.8,327.9 495.5,329.6 495.2,331.3 494.9,333.0 494.7,334.8 494.5,336.5 494.3,338.3 494.1,340.1 494.0,341.9 493.9,343.7 493.8,345.4 493.7,347.2 493.7,348.9 493.7,350.7 493.6,352.4 493.7,354.1 493.7,355.8 493.8,357.5 493.9,359.2 494.0,360.9 494.1,362.6 494.3,364.3 494.4,366.0 494.6,367.8 494.8,369.7 495.0,371.6 495.2,373.5 495.5,375.5 495.7,377.5 496.0,379.6 496.2,381.6 496.4,383.7 496.6,385.8 496.8,387.8 497.0,389.9 497.3,391.9 497.5,393.9 497.7,395.9 497.9,397.9 498.1,400.0 498.4,402.0 498.6,404.1 498.8,406.3 499.0,408.4 499.2,410.6 499.4,412.8 499.6,415.0 499.8,417.3 499.9,419.6 500.1,421.9 500.1,424.3 500.2,426.8 500.1,429.2 500.1,431.7 500.0,434.3 499.8,436.8 499.6,439.3 499.3,441.9 499.0,444.3 498.7,446.8 498.4,449.1 498.2,451.5 498.0,453.8 497.8,456.2 497.5,458.4 497.2,460.7 496.8,463.0 496.4,465.3 496.0,467.6 495.5,470.0 494.9,472.4 494.3,474.8 493.7,477.2 493.0,479.5 492.3,481.8 491.6,484.0 490.9,486.1 490.2,488.2 489.6,490.2 489.0,492.1 488.5,493.9 488.0,495.8 487.6,497.6 487.0,499.3 486.3,500.9 485.7,502.6 485.2,504.3 484.6,506.0 484.1,507.7 483.5,509.3 483.1,511.0 482.6,512.7 482.2,514.3 481.8,515.9 481.4,517.5 481.1,519.1 480.8,520.6 480.5,522.1 480.3,523.6 480.1,525.2 479.9,526.8 479.8,528.5 479.7,530.2 479.6,532.0 479.5,533.9 479.4,535.9 479.3,537.7 479.3,539.6 479.3,541.1" stroke="#00ffff" stroke-width="1.20" /><polyline points="812.0,34.0 811.0,34.6 809.7,35.3 808.4,36.1 806.9,36.9 805.4,37.8 803.9,38.6 802.3,39.5 800.7,40.4 799.0,41.4 797.3,42.4 795.5,43.4 793.6,44.4 791.8,45.5 789.8,46.6 787.9,47.7 785.9,48.8 783.9,50.0 781.9,51.1 779.9,52.2 777.9,53.4 775.9,54.5 774.0,55.6 772.0,56.7 770.1,57.8 768.2,58.9 766.3,60.0 764.4,61.1 762.5,62.2 760.6,63.2 758.7,64.3 756.8,65.4 754.9,66.5 753.0,67.6 751.1,68.6 749.2,69.7 747.3,70.8 745.5,71.9 743.6,72.9 741.7,74.0 739.9,75.1 738.1,76.1 736.3,77.1 734.6,78.1 732.9,79.1 731.2,80.1 729.5,81.1 727.8,82.0 726.1,83.0 724.4,84.0 722.7,84.9 721.0,85.9 719.3,86.9 717.6,87.9 715.8,88.9 714.1,89.9 712.4,90.9 710.6,91.9 708.9,92.9 707.2,93.9 705.5,94.9 703.8,96.0 702.1,97.0 700.4,98.0 698.7,99.1 697.0,100.2 695.2,101.3 693.5,102.4 691.8,103.5 690.0,104.6 688.3,105.8 686.5,107.0 684.8,108.2 683.0,109.4 681.3,110.6 679.6,111.8 677.8,113.0 676.1,114.2 674.4,115.4 672.7,116.6 671.0,117.8 669.3,119.1 667.7,120.3 666.0,121.5 664.3,122.8 662.7,124.0 661.1,125.3 659.5,126.5 657.8,127.8 656.2,129.1 654.7,130.4 653.1,131.7 651.5,133.0 649.9,134.3 648.3,135.6 646.8,137.0 645.2,138.3 643.6,139.6 642.1,141.0 640.5,142.3 638.9,143.6 637.4,145.0 635.9,146.3 634.3,147.7 632.8,149.1 631.3,150.5 629.8,151.9 628.3,153.3 626.8,154.8 625.3,156.3 623.8,157.8 622.4,159.3 620.9,160.8 619.5,162.3 618.0,163.9 616.6,165.4 615.2,166.9 613.8,168.4 612.3,169.9 610.9,171.4 609.5,172.9 608.1,174.4 606.6,175.8 605.2,177.3 603.8,178.8 602.3,180.2 600.9,181.7 599.5,183.1 598.0,184.6 596.6,186.1 595.1,187.6 593.7,189.1 592.3,190.7 590.8,192.2 589.4,193.7 588.0,195.3 586.6,196.8 585.2,198.4 583.8,199.9 582.4,201.4 581.1,203.0 579.7,204.5 578.4,206.1 577.1,207.6 575.8,209.2 574.5,210.7 573.3,212.3 572.1,213.9 570.9,215.5 569.7,217.1 568.6,218.7 567.4,220.4 566.3,222.0 565.2,223.7 564.1,225.4 563.0,227.1 561.9,228.9 560.8,230.6 559.7,232.4 558.6,234.1 557.5,235.9 556.3,237.7 555.2,239.4 554.0,241.2 552.9,242.9 551.7,244.7 550.5,246.4 549.3,248.1 548.1,249.9 546.9,251.6 545.7,253.4 544.5,255.1 543.3,256.9 542.1,258.6 540.9,260.4 539.7,262.2 538.5,264.0 537.3,265.8 536.1,267.6 534.9,269.4 533.8,271.2 532.6,273.0 531.5,274.9 530.3,276.7 529.2,278.5 528.1,280.4 527.0,282.3 525.9,284.1 524.8,286.0 523.7,287.8 522.7,289.6 521.6,291.5 520.6,293.4 519.5,295.2 518.5,297.1 517.4,299.0 516.4,300.8 515.4,302.7 514.4,304.6 513.3,306.6 512.3,308.5 511.3,310.4 510.3,312.4 509.3,314.3 508.4,316.3 507.4,318.3 506.5,320.2 505.6,322.2 504.6,324.2 503.8,326.3" stroke="#4a4a4a" stroke-width="1.10" /><polyline points="507.5,392.0 507.7,393.3 507.9,395.1 508.1,397.2 508.4,399.5 508.8,402.0 509.1,404.6 509.6,407.1 510.0,409.5 510.4,411.4 510.9,413.3 511.4,415.3 511.9,417.3 512.5,419.3 513.1,421.3 513.6,423.3 514.1,425.3 514.5,427.2 514.9,429.0 515.3,431.2 515.6,433.2 516.0,435.2 516.2,437.2 516.4,439.2 516.5,441.1 516.6,443.2 516.5,445.4 516.4,447.5 516.1,449.6 515.8,451.8 515.5,454.1 515.0,456.3 514.6,458.6 514.1,460.8 513.7,462.9 513.2,465.0 512.7,467.2 512.2,469.5 511.7,471.7 511.2,473.8 510.6,475.9 509.9,477.8 509.2,479.7 508.3,481.4 506.9,483.3 505.2,484.8 503.4,486.1 501.6,487.5 499.9,489.1 498.5,491.2 497.8,492.8 497.2,494.5 496.6,496.4 496.1,498.4 495.6,500.4 495.2,502.5 494.8,504.6 494.4,506.7 494.0,508.8 493.6,510.8 493.1,513.0 492.7,515.3 492.3,517.6 491.9,519.9 491.5,522.1 491.2,524.3 490.8,526.4 490.5,528.3 490.3,530.0 490.0,532.7 489.8,535.1 489.6,537.2 489.6,538.8 489.5,540.0" stroke="#ff0000" stroke-width="1.00" /><polyline points="504.0,392.5 504.2,393.8 504.4,395.5 504.7,397.6 505.0,400.0 505.3,402.5 505.7,405.1 506.1,407.7 506.6,410.2 507.0,412.2 507.5,414.2 508.0,416.2 508.6,418.2 509.1,420.3 509.7,422.2 510.2,424.2 510.7,426.1 511.1,427.9 511.5,429.7 511.8,431.8 512.2,433.8 512.5,435.7 512.7,437.6 512.9,439.4 513.0,441.3 513.1,443.2 513.0,445.2 512.9,447.1 512.7,449.2 512.4,451.3 512.0,453.5 511.6,455.7 511.2,457.9 510.7,460.1 510.2,462.2 509.8,464.2 509.3,466.5 508.8,468.7 508.3,470.9 507.8,472.9 507.2,474.8 506.6,476.6 506.0,478.2 505.3,479.5 504.3,480.9 503.0,482.1 501.3,483.3 499.3,484.8 497.2,486.9 495.5,489.5 494.6,491.5 493.9,493.4 493.2,495.4 492.7,497.5 492.2,499.7 491.8,501.8 491.4,504.0 491.0,506.1 490.6,508.1 490.2,510.1 489.7,512.3 489.3,514.6 488.8,517.0 488.4,519.3 488.1,521.5 487.7,523.7 487.4,525.8 487.1,527.8 486.8,529.5 486.5,532.4 486.3,534.9 486.1,537.0 486.1,538.6 486.0,539.8" stroke="#ff00ff" stroke-width="1.10" /><polyline points="500.1,393.0 500.2,394.3 500.4,396.0 500.7,398.1 501.0,400.5 501.3,403.1 501.7,405.7 502.2,408.4 502.6,411.0 503.1,413.1 503.6,415.2 504.2,417.2 504.7,419.3 505.3,421.3 505.8,423.3 506.3,425.2 506.8,427.0 507.2,428.8 507.5,430.4 507.9,432.5 508.2,434.5 508.5,436.3 508.8,438.0 508.9,439.7 509.0,441.4 509.1,443.2 509.0,445.0 508.9,446.8 508.7,448.7 508.4,450.7 508.1,452.8 507.7,454.9 507.3,457.1 506.8,459.2 506.3,461.3 505.9,463.4 505.4,465.6 504.9,467.8 504.4,469.9 503.9,471.9 503.4,473.7 502.9,475.2 502.3,476.6 501.9,477.4 501.3,478.3 500.5,478.9 499.0,480.1 496.7,481.7 494.1,484.3 492.0,487.5 490.8,490.0 490.1,492.2 489.4,494.4 488.8,496.6 488.3,498.8 487.9,501.0 487.4,503.2 487.0,505.3 486.6,507.4 486.3,509.3 485.8,511.5 485.3,513.9 484.9,516.2 484.5,518.6 484.1,520.9 483.7,523.1 483.4,525.2 483.1,527.2 482.9,529.0 482.5,532.0 482.3,534.6 482.2,536.8 482.1,538.4 482.0,539.6" stroke="#8cd8d8" stroke-width="2.20" /><polyline points="501.2,392.8 501.3,394.1 501.5,395.9 501.8,398.0 502.1,400.4 502.4,402.9 502.8,405.5 503.2,408.2 503.7,410.7 504.2,412.8 504.7,414.9 505.2,417.0 505.8,419.0 506.3,421.0 506.9,423.0 507.4,424.9 507.9,426.8 508.3,428.5 508.6,430.2 509.0,432.3 509.3,434.3 509.6,436.1 509.9,437.9 510.0,439.7 510.1,441.4 510.2,443.2 510.1,445.1 510.0,446.9 509.8,448.8 509.5,450.9 509.1,453.0 508.8,455.1 508.3,457.3 507.9,459.5 507.4,461.6 507.0,463.6 506.5,465.9 506.0,468.1 505.5,470.2 505.0,472.2 504.5,474.0 503.9,475.6 503.3,477.1 502.9,478.0 502.2,479.0 501.2,479.8 499.6,480.9 497.4,482.6 495.0,485.0 492.9,488.0 491.9,490.4 491.1,492.5 490.5,494.7 489.9,496.9 489.4,499.1 488.9,501.3 488.5,503.4 488.1,505.6 487.7,507.6 487.3,509.5 486.9,511.8 486.4,514.1 486.0,516.4 485.6,518.8 485.2,521.1 484.8,523.3 484.5,525.4 484.2,527.3 484.0,529.2 483.6,532.1 483.4,534.7 483.3,536.8 483.2,538.5 483.1,539.6" stroke="#00ffff" stroke-width="1.10" /><polyline points="499.0,393.1 499.1,394.4 499.4,396.1 499.6,398.3 499.9,400.6 500.3,403.2 500.6,405.9 501.1,408.6 501.6,411.2 502.0,413.3 502.5,415.4 503.1,417.5 503.7,419.6 504.2,421.6 504.8,423.6 505.3,425.5 505.7,427.3 506.1,429.0 506.4,430.6 506.8,432.7 507.2,434.6 507.4,436.5 507.7,438.2 507.8,439.8 507.9,441.5 508.0,443.2 507.9,445.0 507.8,446.7 507.6,448.6 507.3,450.5 507.0,452.6 506.6,454.7 506.2,456.9 505.7,459.0 505.3,461.1 504.8,463.1 504.3,465.4 503.8,467.6 503.3,469.7 502.9,471.6 502.4,473.3 501.8,474.9 501.3,476.2 501.0,476.8 500.5,477.5 499.8,478.1 498.3,479.2 496.0,480.9 493.3,483.6 491.0,486.9 489.8,489.6 489.0,491.8 488.3,494.1 487.8,496.3 487.2,498.6 486.8,500.8 486.4,503.0 486.0,505.1 485.6,507.1 485.2,509.1 484.7,511.3 484.3,513.7 483.8,516.1 483.4,518.4 483.0,520.7 482.7,522.9 482.3,525.1 482.0,527.0 481.8,528.9 481.4,531.9 481.2,534.5 481.1,536.7 481.0,538.4 480.9,539.5" stroke="#00ffff" stroke-width="1.10" /><polyline points="497.0,393.4 497.2,394.7 497.4,396.4 497.6,398.5 497.9,400.9 498.3,403.5 498.7,406.2 499.1,408.9 499.6,411.6 500.1,413.8 500.6,415.9 501.2,418.0 501.7,420.1 502.3,422.2 502.8,424.1 503.3,426.0 503.8,427.8 504.2,429.4 504.5,431.0 504.9,433.0 505.2,435.0 505.5,436.7 505.7,438.4 505.8,440.0 505.9,441.5 506.0,443.2 505.9,444.9 505.8,446.5 505.6,448.3 505.3,450.2 505.0,452.3 504.6,454.4 504.2,456.5 503.8,458.6 503.3,460.6 502.9,462.7 502.4,464.9 501.9,467.1 501.4,469.2 500.9,471.1 500.4,472.7 500.0,474.2 499.5,475.3 499.3,475.8 499.1,476.2 498.6,476.5 497.1,477.5 494.7,479.4 491.7,482.3 489.3,486.0 488.0,488.8 487.1,491.2 486.4,493.5 485.8,495.9 485.3,498.2 484.8,500.4 484.4,502.6 484.0,504.8 483.6,506.8 483.2,508.7 482.8,510.9 482.3,513.3 481.9,515.7 481.4,518.1 481.0,520.4 480.7,522.6 480.4,524.8 480.1,526.7 479.8,528.6 479.4,531.6 479.2,534.4 479.1,536.6 479.0,538.3 478.9,539.4" stroke="#ffffff" stroke-width="1.00" /><polyline points="496.0,393.5 496.2,394.8 496.4,396.5 496.6,398.6 496.9,401.0 497.3,403.6 497.7,406.3 498.1,409.1 498.6,411.8 499.1,414.0 499.6,416.2 500.2,418.3 500.8,420.4 501.3,422.4 501.9,424.4 502.4,426.3 502.8,428.0 503.2,429.6 503.5,431.2 503.9,433.2 504.2,435.1 504.5,436.9 504.7,438.5 504.8,440.1 504.9,441.6 505.0,443.2 504.9,444.9 504.8,446.4 504.6,448.2 504.4,450.1 504.0,452.1 503.6,454.2 503.2,456.3 502.8,458.4 502.3,460.4 501.9,462.5 501.4,464.7 500.9,466.9 500.4,469.0 500.0,470.8 499.5,472.4 499.0,473.8 498.6,474.9 498.5,475.2 498.3,475.5 498.0,475.7 496.5,476.7 494.1,478.6 491.0,481.7 488.4,485.5 487.0,488.5 486.2,490.9 485.4,493.3 484.8,495.6 484.3,498.0 483.8,500.2 483.4,502.5 483.0,504.6 482.6,506.6 482.2,508.5 481.8,510.7 481.3,513.1 480.9,515.5 480.5,517.9 480.1,520.2 479.7,522.5 479.4,524.6 479.1,526.6 478.8,528.5 478.4,531.5 478.2,534.3 478.1,536.5 478.0,538.2 477.9,539.3" stroke="#ffff00" stroke-width="1.30" /><path d="M520.0 362.8L522.1 386.8M522.5 363.0L524.6 386.5M525.0 362.8L525.9 386.5M527.5 362.3L527.9 386.4M529.9 361.7L529.9 386.4M532.3 361.0L532.0 386.4M534.7 360.4L534.1 386.5M537.2 359.9L536.2 386.5M539.6 359.5L538.3 386.6M542.1 359.2L540.4 386.7M544.6 358.9L542.5 386.8M547.1 358.7L544.6 387.0M549.6 358.5L546.6 387.2M552.1 358.5L548.4 387.4M554.6 358.5L549.5 387.6M557.1 358.6L551.1 387.9M559.6 358.8L551.9 388.1M562.0 359.2L553.3 388.5M564.5 359.6L554.4 388.8M566.9 360.2L555.3 389.1M569.3 360.8L557.1 389.9M571.7 361.6L559.8 391.0M574.1 362.4L562.5 392.1M576.4 363.3L564.3 392.8M578.7 364.3L566.2 393.6M581.0 365.4L568.2 394.5M583.2 366.6L570.4 395.5M585.3 367.8L572.6 396.4M587.5 369.1L575.0 397.5M589.6 370.4L577.2 398.5M591.6 371.9L579.4 399.4M599.5 378.0L587.9 403.2M607.4 384.1L596.3 407.2M615.5 390.0L605.1 411.5M624.2 395.1L613.7 415.7M633.1 399.5L620.9 419.6M640.1 402.3L626.3 423.1M642.4 403.2L628.2 424.4M644.8 403.9L630.1 425.7M647.2 404.5L632.3 427.1M649.7 405.0L633.6 428.0M652.2 405.3L662.1 432.3M654.6 405.5L664.7 431.3M657.1 405.5L667.1 430.3M659.6 405.3L669.3 429.4M662.1 405.0L671.3 428.6M664.6 404.5L673.2 427.9M667.0 403.9L675.3 427.1M669.3 403.1L677.7 426.3M671.6 402.1L680.1 425.4M673.9 401.0L682.5 424.6M676.1 399.9L684.8 423.7M678.3 398.7L687.1 422.9M680.5 397.5L689.4 422.1M682.7 396.3L691.7 421.2M684.9 395.2L694.0 420.4M687.2 394.0L696.3 419.6M689.5 393.0L698.6 418.8M691.7 391.9L700.9 418.0M694.0 390.9L703.2 417.2M696.3 389.9L705.5 416.3M698.6 388.9L707.9 415.5M707.7 384.7L717.4 412.2M716.8 380.6L726.9 408.8M725.9 376.4L736.3 405.4M734.9 372.2L745.2 402.3M744.0 368.0L754.6 399.1M752.0 362.3L764.4 395.6M758.9 355.1L775.0 391.3M768.0 351.0L786.0 385.9M777.3 347.4L794.3 381.6M786.6 343.6L802.6 377.7M795.8 339.8L811.5 373.5M805.1 336.0L820.5 369.3M814.3 332.1L829.6 365.1M823.5 328.3L838.7 360.9M832.8 324.6L848.0 356.5M842.0 320.7L857.2 352.1M851.2 316.8L866.4 347.6M860.4 312.7L875.3 343.2M869.4 308.5L884.2 338.9M878.5 304.3L893.2 334.6M887.5 300.0L902.0 330.3M896.5 295.7L910.8 326.1M905.5 291.3L919.8 321.9M914.5 286.9L928.6 317.9M923.5 282.5L937.4 313.9M932.5 278.1L946.4 310.0M941.4 273.7L955.4 306.1M950.4 269.3L964.5 302.2M959.5 265.0L973.7 298.2M968.5 260.6L982.9 294.3M977.5 256.3L992.0 290.4M986.5 252.0L1000.0 287.0M995.5 247.7L1000.0 287.0" stroke="#ff0000" stroke-width="1.00"/><polyline points="548.3,371.3 550.8,371.6 554.5,372.2 558.0,373.1 560.9,374.2 563.3,375.1 565.1,375.9 566.9,376.6 568.9,377.4 571.1,378.3 573.2,379.2 575.3,380.2 577.4,381.1 579.4,382.0 581.4,382.9 583.5,383.8 585.6,384.7 587.7,385.6 589.8,386.6 591.9,387.5 594.1,388.5 596.2,389.5 598.1,390.4 600.0,391.3 601.9,392.1 603.7,393.0 605.5,393.9 607.4,394.8 609.2,395.7 611.0,396.6 612.8,397.5 614.6,398.3 616.5,399.3 618.5,400.2 620.5,401.2 622.6,402.3 624.8,403.4 627.0,404.6 629.2,406.0 631.4,407.3 633.5,408.7 635.6,410.1 637.5,411.4 639.3,412.6 641.0,413.7 642.7,414.9 645.4,416.8 647.3,418.4 647.7,418.8 646.9,418.3 646.7,418.2 646.9,418.2 647.7,418.4 648.7,418.5 649.7,418.5 650.8,418.5 652.0,418.4 653.2,418.2 653.9,418.1 654.9,417.8 656.2,417.4 657.7,416.8 659.5,416.1 661.5,415.3 663.6,414.5 665.9,413.6 668.3,412.7 670.2,412.0 672.1,411.3 674.0,410.6 675.9,409.9 677.9,409.2 679.9,408.5 682.0,407.7 684.0,407.0 686.1,406.2 688.2,405.5 690.3,404.7 692.3,404.0 694.3,403.3 696.3,402.6 698.4,401.9 700.4,401.2 702.5,400.5 704.5,399.7 706.6,399.0 708.6,398.3 710.5,397.6 712.4,397.0 714.2,396.3 716.3,395.6 718.3,394.9 720.1,394.2 721.9,393.6 723.7,392.9 725.5,392.3 727.4,391.6 729.5,390.8 731.7,390.0 734.2,389.1 736.0,388.5 737.8,387.9 739.7,387.2 741.7,386.6 743.7,385.9 745.7,385.2 747.8,384.5 749.8,383.8 751.9,383.1 753.9,382.4 756.0,381.6 758.0,380.9 759.9,380.2 761.8,379.5 763.6,378.7 765.3,378.0 767.1,377.3 768.7,376.6 770.3,375.8 771.9,375.1 773.5,374.3 775.1,373.5 776.7,372.7 778.4,371.8 780.1,370.9 782.0,370.0 783.9,369.0 786.0,367.9 788.2,366.8 790.6,365.7 793.1,364.5 794.7,363.7 796.4,362.9 798.1,362.1 799.8,361.3 801.6,360.5 803.5,359.6 805.4,358.7 807.3,357.8 809.3,356.9 811.3,356.0 813.3,355.1 815.3,354.1 817.3,353.2 819.4,352.2 821.4,351.3 823.4,350.4 825.4,349.4 827.4,348.5 829.3,347.6 831.2,346.7 833.1,345.8 835.0,345.0 836.7,344.2 838.5,343.3 840.1,342.5 842.2,341.6 844.2,340.6 846.2,339.7 848.1,338.7 850.0,337.8 851.9,336.9 853.8,336.0 855.7,335.1 857.5,334.2 859.3,333.3 861.0,332.4 862.8,331.6 864.5,330.7 866.2,329.9 867.9,329.1 869.6,328.2 871.2,327.4 872.8,326.6 874.4,325.9 876.0,325.1 878.2,324.1 880.2,323.1 882.1,322.1 884.0,321.2 885.8,320.4 887.5,319.5 889.2,318.7 891.0,317.9 892.7,317.0 894.5,316.2 896.3,315.3 898.2,314.4 900.1,313.5 902.2,312.5 903.8,311.8 905.4,311.0 907.0,310.3 908.6,309.5 910.1,308.8 911.7,308.1 913.3,307.3 915.0,306.5 916.7,305.8 918.4,304.9 920.2,304.1 922.1,303.3 924.1,302.4 926.1,301.5 928.3,300.5 930.5,299.5 932.9,298.4 935.4,297.4 936.9,296.7 938.6,296.0 940.3,295.2 942.1,294.4 944.0,293.6 946.0,292.7 948.0,291.8 950.1,290.9 952.3,290.0 954.4,289.1 956.6,288.1 958.8,287.2 961.1,286.2 963.3,285.3 965.5,284.3 967.8,283.4 970.0,282.4 972.1,281.5 974.2,280.6 976.3,279.7 978.4,278.9 980.3,278.0 982.2,277.2 984.0,276.4 985.7,275.7 987.4,275.0 988.9,274.4 990.3,273.8 991.5,273.2 992.7,272.7 993.7,272.3" stroke="#ff0000" stroke-width="0.90" /><polyline points="819.6,47.3 817.4,48.5 814.5,50.2 812.5,51.3 810.4,52.5 808.3,53.7 806.6,54.7 804.8,55.7 803.0,56.7 801.2,57.7 799.3,58.8 797.4,59.9 795.4,61.0 793.5,62.1 791.5,63.3 789.5,64.4 787.5,65.5 785.5,66.7 783.5,67.8 781.6,68.9 779.6,70.0 777.7,71.1 775.7,72.2 773.8,73.3 771.9,74.4 770.0,75.5 768.2,76.5 766.3,77.6 764.4,78.7 762.5,79.8 760.6,80.8 758.7,81.9 756.8,83.0 754.9,84.1 753.1,85.2 751.2,86.2 749.3,87.3 747.5,88.3 745.7,89.4 744.0,90.4 742.2,91.4 740.5,92.4 738.2,93.7 736.0,95.0 733.7,96.3 731.5,97.6 729.2,98.9 726.9,100.2 724.6,101.5 722.3,102.8 720.1,104.1 717.8,105.5 715.5,106.8 713.3,108.1 711.1,109.4 708.9,110.7 706.8,112.1 704.6,113.5 702.4,114.9 700.1,116.3 698.5,117.4 696.8,118.5 695.1,119.7 693.4,120.8 691.7,122.0 690.0,123.1 688.3,124.3 686.6,125.5 684.9,126.7 683.3,127.9 681.6,129.0 680.0,130.2 677.8,131.8 675.7,133.4 673.6,135.0 671.5,136.6 669.4,138.2 667.4,139.8 665.3,141.4 663.3,143.1 661.3,144.8 659.7,146.1 658.2,147.4 656.6,148.7 655.1,150.0 653.5,151.3 652.0,152.6 650.5,153.9 648.9,155.2 647.0,156.9 645.0,158.7 643.1,160.4 641.2,162.1 639.4,163.9 637.5,165.7 635.7,167.5 633.9,169.4 632.0,171.3 630.6,172.8 629.2,174.3 627.8,175.9 626.3,177.4 624.9,178.9 623.4,180.5 621.9,182.0 620.5,183.5 619.0,185.0 617.6,186.5 616.1,188.0 614.7,189.5 613.3,190.9 611.8,192.4 610.4,193.8 609.0,195.3 607.6,196.7 606.2,198.2 604.8,199.7 603.4,201.1 602.0,202.6 600.6,204.1 599.3,205.6 597.9,207.1 596.1,209.1 594.3,211.1 592.6,213.1 590.9,215.0 589.2,216.9 587.6,218.9 586.1,220.8 584.6,222.7 583.2,224.6 581.8,226.5 580.4,228.5 579.0,230.5 577.7,232.6 576.3,234.8 574.8,237.0 573.7,238.8 572.6,240.5 571.5,242.3 570.4,244.1 569.2,245.9 568.0,247.8 566.8,249.6 565.6,251.4 564.4,253.2 563.2,255.0 562.0,256.8 560.7,258.6 559.5,260.3 558.3,262.1 557.1,263.8 555.9,265.5 554.7,267.3 553.5,269.0 552.4,270.7 551.2,272.5 550.1,274.2 548.9,275.9 547.8,277.7 546.7,279.4 545.6,281.2 544.4,282.9 543.4,284.7 542.3,286.5 541.6,287.7 541.2,288.6 540.3,290.2 538.0,293.6 537.2,294.8 536.3,296.1 535.2,297.7 534.0,299.3 532.7,301.1 531.3,303.0 529.9,304.9 528.5,306.9 527.0,308.9 525.6,310.9 524.1,312.9 522.7,314.9 521.3,316.8 520.1,318.6 518.9,320.3 517.8,321.8 516.8,323.2 516.0,324.4 513.9,327.6 512.9,329.5 512.3,330.7 512.0,331.8 511.5,333.4 510.8,335.5 510.1,337.7 509.5,339.9 509.1,342.1 508.8,344.2 508.7,346.6 508.8,348.9 509.1,351.1 509.7,353.2 510.5,355.2 511.4,357.2 512.7,359.0 514.2,360.4 516.0,361.5 518.0,362.4 520.3,362.9 523.2,363.0 524.9,362.8 526.7,362.5 528.7,362.0 530.7,361.5 532.9,360.9 535.1,360.3 537.2,359.9 539.4,359.5 541.3,359.3 543.3,359.0 545.3,358.8 547.4,358.7 549.4,358.5 551.5,358.5 553.5,358.4 555.5,358.5 557.4,358.6 559.5,358.8 561.6,359.1 563.7,359.5 565.7,359.9 567.7,360.4 569.7,360.9 571.7,361.5 573.6,362.2 575.5,362.9 577.4,363.7 579.2,364.6 581.1,365.5 582.9,366.4 584.6,367.4 586.3,368.4 588.0,369.4 589.8,370.5 591.4,371.7 592.9,372.8 594.4,374.1 596.1,375.4 597.9,376.8 600.0,378.4 601.4,379.4 602.8,380.5 604.3,381.7 605.9,382.9 607.5,384.2 609.1,385.4 610.8,386.7 612.6,388.0 614.4,389.3 616.2,390.5 618.1,391.7 620.0,392.8 621.7,393.7 623.4,394.7 625.3,395.6 627.1,396.6 629.1,397.6 631.0,398.5 633.0,399.4 634.9,400.3 636.9,401.1 638.8,401.9 640.6,402.6 642.5,403.2 644.2,403.7 645.9,404.2 648.4,404.8 650.7,405.2 652.9,405.4 655.0,405.6 657.1,405.5 659.2,405.4 661.4,405.1 663.5,404.7 665.8,404.2 667.5,403.7 669.3,403.1 671.1,402.3 672.9,401.5 674.7,400.6 676.5,399.7 678.3,398.7 680.2,397.7 682.0,396.7 683.9,395.7 685.8,394.7 687.7,393.8 689.5,393.0 691.2,392.2 692.9,391.4 694.7,390.6 696.4,389.8 698.2,389.0 700.0,388.2 701.8,387.4 703.7,386.6 705.6,385.7 707.6,384.8 709.6,383.9 711.7,382.9 713.4,382.1 715.2,381.3 717.2,380.4 719.2,379.5 721.3,378.5 723.4,377.5 725.5,376.6 727.7,375.6 729.8,374.6 731.9,373.7 733.9,372.7 735.8,371.8 737.7,371.0 739.4,370.2 741.0,369.4 742.4,368.8 743.6,368.2 747.5,366.4 748.6,365.8 750.0,364.5 751.3,363.2 752.5,361.7 753.9,359.9 755.3,358.2 757.0,356.5 759.0,355.0 760.7,354.0 762.5,353.1 764.5,352.3 766.6,351.5 768.7,350.7 771.0,349.9 773.2,349.1 775.5,348.2 777.4,347.4 779.3,346.6 781.4,345.8 783.4,344.9 785.5,344.1 787.6,343.2 789.6,342.4 791.6,341.6 793.6,340.8 795.4,340.0 797.4,339.2 799.0,338.5 800.4,337.9 801.8,337.3 803.4,336.7 805.3,335.9 807.8,334.8 811.0,333.5 812.4,332.9 813.8,332.3 815.4,331.7 817.1,331.0 818.8,330.3 820.6,329.5 822.5,328.8 824.4,328.0 826.4,327.2 828.4,326.3 830.5,325.5 832.6,324.6 834.7,323.8 836.8,322.9 838.9,322.0 841.0,321.1 843.1,320.3 845.1,319.4 847.2,318.5 849.2,317.7 851.1,316.8 853.0,316.0 854.9,315.1 856.8,314.3 858.7,313.5 860.6,312.6 862.4,311.8 864.2,310.9 866.1,310.1 867.9,309.3 869.7,308.4 871.5,307.6 873.3,306.7 875.1,305.9 877.0,305.0 878.9,304.1 880.7,303.2 882.6,302.3 884.6,301.4 886.6,300.4 888.6,299.5 890.6,298.5 892.7,297.5 894.4,296.7 896.0,295.9 897.7,295.1 899.4,294.3 901.1,293.4 902.8,292.6 904.5,291.8 906.3,290.9 908.0,290.1 909.8,289.2 911.6,288.3 913.4,287.4 915.2,286.5 917.0,285.6 918.8,284.7 920.7,283.8 922.5,282.9 924.4,282.0 926.3,281.1 928.2,280.1 930.1,279.2 932.0,278.3 933.9,277.3 935.9,276.4 937.9,275.4 939.8,274.5 941.8,273.5 943.5,272.7 945.3,271.8 947.1,270.9 949.0,270.0 951.0,269.1 953.0,268.1 955.0,267.1 957.1,266.1 959.2,265.1 961.3,264.1 963.4,263.1 965.5,262.1 967.6,261.0 969.8,260.0 971.9,259.0 974.0,258.0 976.0,257.0 978.1,256.0 980.1,255.1 982.0,254.1 983.9,253.2 985.8,252.3 987.6,251.5 989.3,250.6 991.0,249.8 992.6,249.1 994.0,248.4 995.4,247.7 996.7,247.1 997.9,246.5 999.0,246.0 1000.0,245.5" stroke="#ff0000" stroke-width="1.00" /><polyline points="601.4,379.4 602.8,380.5 604.3,381.7 605.9,382.9 607.5,384.2 609.1,385.4 610.8,386.7 612.6,388.0 614.4,389.3 616.2,390.5 618.1,391.7 620.0,392.8 621.7,393.7 623.4,394.7 625.3,395.6 627.1,396.6 629.1,397.6 631.0,398.5 633.0,399.4 634.9,400.3 636.9,401.1 638.8,401.9 640.6,402.6 642.5,403.2 644.2,403.7 645.9,404.2 648.4,404.8 650.7,405.2 652.9,405.4 655.0,405.6 657.1,405.5 659.2,405.4 661.4,405.1 663.5,404.7 665.8,404.2 667.5,403.7 669.3,403.1 671.1,402.3 672.9,401.5 674.7,400.6 676.5,399.7 678.3,398.7 680.2,397.7 682.0,396.7 683.9,395.7 685.8,394.7 687.7,393.8 689.5,393.0 691.2,392.2 692.9,391.4 694.7,390.6 696.4,389.8 698.2,389.0 700.0,388.2 701.8,387.4 703.7,386.6 705.6,385.7 707.6,384.8 709.6,383.9 711.7,382.9 713.4,382.1 715.2,381.3 717.2,380.4 719.2,379.5 721.3,378.5 723.4,377.5 725.5,376.6 727.7,375.6 729.8,374.6 731.9,373.7 733.9,372.7 735.8,371.8 737.7,371.0 739.4,370.2 741.0,369.4 742.4,368.8 743.6,368.2 747.5,366.4 748.6,365.8 750.0,364.5 751.3,363.2" stroke="#5b6b2a" stroke-width="1.10" /><polyline points="817.9,44.4 815.8,45.7 812.8,47.3 810.9,48.4 808.8,49.6 806.6,50.9 804.9,51.8 803.2,52.8 801.4,53.8 799.6,54.9 797.7,55.9 795.8,57.0 793.8,58.1 791.8,59.3 789.9,60.4 787.9,61.5 785.9,62.7 783.9,63.8 781.9,64.9 779.9,66.0 778.0,67.2 776.0,68.3 774.1,69.4 772.2,70.4 770.3,71.5 768.4,72.6 766.5,73.6 764.5,74.6 762.6,75.5 760.7,76.5 758.7,77.5 756.8,78.5 754.8,79.5 752.9,80.6 751.1,81.7 749.2,82.8 747.4,83.8 745.5,84.9 743.7,85.9 742.0,86.9 740.2,87.9 738.5,88.9 736.2,90.2 734.0,91.5 731.7,92.8 729.5,94.1 727.2,95.4 724.9,96.7 722.6,98.0 720.3,99.3 718.0,100.7 715.8,102.0 713.5,103.3 711.3,104.7 709.1,106.0 706.8,107.3 704.6,108.7 702.4,110.1 700.2,111.5 698.0,113.0 696.3,114.1 694.6,115.2 692.9,116.4 691.1,117.5 689.4,118.7 687.7,119.9 686.0,121.1 684.4,122.3 682.7,123.6 681.1,124.8 679.5,126.0 677.9,127.3 675.7,128.9 673.6,130.6 671.5,132.3 669.5,133.9 667.4,135.6 665.4,137.3 663.4,139.0 661.4,140.8 659.4,142.5 657.9,143.9 656.4,145.2 654.8,146.6 653.3,147.9 651.8,149.3 650.3,150.6 648.8,152.0 647.3,153.3 645.4,155.1 643.5,156.9 641.6,158.7 639.7,160.5 637.9,162.3 636.1,164.2 634.3,166.1 632.5,168.1 630.7,170.1 629.3,171.6 627.9,173.1 626.5,174.7 625.1,176.3 623.7,177.8 622.3,179.4 620.9,181.0 619.5,182.5 618.0,184.1 616.6,185.5 615.1,187.0 613.7,188.5 612.3,189.9 610.8,191.4 609.4,192.8 608.0,194.3 606.6,195.8 605.2,197.2 603.8,198.7 602.4,200.2 601.0,201.7 599.6,203.2 598.2,204.7 596.9,206.2 595.1,208.2 593.3,210.2 591.5,212.1 589.8,214.1 588.2,216.0 586.6,218.0 585.0,219.9 583.5,221.8 582.1,223.7 580.6,225.7 579.3,227.7 577.9,229.7 576.5,231.8 575.1,234.0 573.7,236.3 572.6,238.0 571.4,239.8 570.3,241.6 569.2,243.4 568.0,245.2 566.8,247.0 565.6,248.8 564.4,250.6 563.2,252.4 562.0,254.2 560.8,256.0 559.6,257.8 558.4,259.5 557.2,261.3 556.0,263.0 554.8,264.8 553.6,266.5 552.4,268.2 551.2,270.0 550.0,271.7 548.9,273.4 547.7,275.2 546.6,276.9 545.5,278.7 544.4,280.4 543.3,282.2 542.2,284.0 541.1,285.8 540.4,287.1 540.0,287.9 539.1,289.4 536.9,292.9 536.1,294.0 535.1,295.3 534.0,296.8 532.8,298.5 531.6,300.3 530.2,302.1 528.8,304.1 527.4,306.1 525.9,308.1 524.4,310.1 523.0,312.1 521.6,314.1 520.2,316.0 518.9,317.8 517.7,319.5 516.6,321.0 515.7,322.4 514.8,323.6 512.8,326.8 511.6,328.8 511.0,330.2 510.7,331.4 510.2,333.0 509.5,335.0 508.8,337.3 508.2,339.6 507.7,341.9 507.4,344.1 507.3,346.6 507.4,349.1 507.8,351.4 508.4,353.6 509.2,355.8 510.2,357.9 511.6,359.9 513.3,361.5 515.3,362.8 517.6,363.7 520.2,364.3 523.2,364.4 525.1,364.2 527.0,363.9 529.0,363.4 531.1,362.8 533.2,362.2 535.4,361.7 537.5,361.2 539.6,360.9 541.5,360.7 543.5,360.4 545.5,360.2 547.5,360.1 549.5,359.9 551.5,359.9 553.5,359.8 555.4,359.9 557.3,360.0 559.4,360.2 561.4,360.5 563.4,360.8 565.4,361.3 567.4,361.7 569.3,362.3 571.2,362.9 573.1,363.5 575.0,364.2 576.8,365.0 578.6,365.8 580.4,366.7 582.2,367.6 583.9,368.6 585.6,369.6 587.3,370.6 589.0,371.7 590.5,372.8 592.0,374.0 593.5,375.2 595.2,376.5 597.0,377.9 599.2,379.5 600.5,380.5 601.9,381.6 603.4,382.8 605.0,384.0 606.6,385.3 608.3,386.6 610.0,387.9 611.8,389.2 613.6,390.4 615.5,391.7 617.4,392.9 619.3,394.0 621.0,395.0 622.7,396.0 624.5,397.1 626.4,398.1 628.3,399.1 630.2,400.1 632.2,401.1 634.1,402.1 636.1,403.0 638.0,403.8 639.9,404.6 641.8,405.3 643.6,406.0 645.3,406.5 647.9,407.2 650.3,407.7 652.7,408.0 655.0,408.3 657.3,408.3 659.5,408.2 661.8,408.0 664.1,407.7 666.6,407.2 668.5,406.7 670.5,406.1 672.4,405.4 674.3,404.6 676.2,403.7 678.1,402.8 680.0,401.8 681.9,400.9 683.8,399.9 685.6,399.0 687.5,398.2 689.4,397.3 691.1,396.6 692.9,395.8 694.6,395.0 696.3,394.3 698.1,393.5 699.8,392.7 701.6,391.9 703.4,391.0 705.3,390.2 707.2,389.3 709.2,388.4 711.2,387.5 713.4,386.5 715.1,385.8 716.9,384.9 718.8,384.0 720.9,383.1 722.9,382.2 725.1,381.2 727.2,380.2 729.4,379.2 731.5,378.3 733.6,377.3 735.6,376.4 737.5,375.5 739.4,374.6 741.1,373.8 742.7,373.1 744.1,372.4 745.3,371.8 749.3,370.0 751.0,368.9 752.8,367.4 754.2,365.9 755.7,364.2 757.0,362.5 758.3,360.9 759.7,359.5 761.2,358.3 762.5,357.4 764.1,356.5 765.8,355.7 767.8,354.8 769.9,353.9 772.1,353.0 774.4,352.2 776.7,351.3 778.6,350.5 780.6,349.7 782.6,348.8 784.7,348.0 786.8,347.1 788.8,346.3 790.9,345.4 792.9,344.6 794.8,343.8 796.7,343.0 798.6,342.2 800.3,341.6 801.7,341.0 803.1,340.4 804.7,339.7 806.6,338.9 809.1,337.9 812.3,336.5 813.6,336.0 815.1,335.4 816.7,334.7 818.3,334.1 820.0,333.3 821.9,332.6 823.7,331.8 825.7,331.0 827.7,330.2 829.7,329.4 831.7,328.6 833.8,327.7 835.9,326.8 838.1,325.9 840.2,325.1 842.3,324.2 844.4,323.3 846.4,322.4 848.5,321.6 850.5,320.7 852.4,319.9 854.3,319.0 856.3,318.2 858.2,317.3 860.1,316.5 861.9,315.6 863.8,314.8 865.6,313.9 867.4,313.1 869.3,312.3 871.1,311.4 872.9,310.6 874.7,309.7 876.6,308.9 878.4,308.0 880.3,307.1 882.2,306.2 884.1,305.3 886.0,304.4 888.0,303.4 890.0,302.5 892.0,301.5 894.1,300.5 895.8,299.7 897.4,298.9 899.1,298.1 900.8,297.2 902.5,296.4 904.3,295.6 906.0,294.7 907.7,293.9 909.5,293.0 911.3,292.1 913.0,291.3 914.8,290.4 916.6,289.5 918.5,288.6 920.3,287.7 922.1,286.8 924.0,285.9 925.9,285.0 927.7,284.0 929.6,283.1 931.5,282.2 933.5,281.2 935.4,280.3 937.3,279.3 939.3,278.4 941.3,277.4 943.2,276.5 945.0,275.6 946.7,274.8 948.6,273.9 950.5,273.0 952.4,272.0 954.4,271.1 956.4,270.1 958.5,269.1 960.6,268.1 962.7,267.1 964.8,266.1 966.9,265.0 969.1,264.0 971.2,263.0 973.3,262.0 975.4,261.0 977.5,260.0 979.5,259.0 981.5,258.0 983.5,257.1 985.4,256.2 987.2,255.3 989.0,254.4 990.8,253.6 992.4,252.8 994.0,252.0 995.5,251.3 996.9,250.7 998.2,250.0 999.4,249.5 1000.5,248.9 1001.4,248.5" stroke="#ff00ff" stroke-width="1.20" /><polyline points="816.4,41.6 814.2,42.9 811.3,44.5 809.3,45.7 807.2,46.8 805.0,48.1 803.4,49.0 801.6,50.0 799.8,51.0 798.0,52.1 796.1,53.2 794.2,54.3 792.2,55.4 790.3,56.5 788.3,57.6 786.3,58.7 784.3,59.9 782.3,61.0 780.3,62.1 778.3,63.3 776.4,64.4 774.4,65.5 772.5,66.6 770.6,67.7 768.7,68.7 766.8,69.8 764.9,70.8 762.9,71.7 761.0,72.7 759.0,73.6 757.0,74.6 755.1,75.5 753.1,76.6 751.3,77.7 749.4,78.7 747.5,79.8 745.7,80.9 743.8,81.9 742.0,82.9 740.3,83.9 738.5,84.9 736.8,85.9 734.5,87.3 732.3,88.5 730.0,89.8 727.8,91.1 725.5,92.4 723.2,93.7 720.9,95.1 718.6,96.4 716.3,97.7 714.1,99.1 711.8,100.4 709.5,101.7 707.3,103.1 705.1,104.4 702.8,105.8 700.6,107.2 698.4,108.6 696.1,110.1 694.4,111.2 692.7,112.4 691.0,113.5 689.2,114.7 687.5,115.9 685.8,117.1 684.1,118.3 682.5,119.6 680.8,120.8 679.2,122.1 677.5,123.3 675.9,124.6 673.8,126.3 671.6,128.0 669.5,129.7 667.5,131.4 665.4,133.0 663.4,134.8 661.4,136.5 659.4,138.3 657.3,140.1 655.8,141.4 654.3,142.8 652.8,144.1 651.3,145.5 649.8,146.9 648.3,148.2 646.8,149.6 645.3,151.0 643.3,152.8 641.4,154.6 639.5,156.4 637.6,158.3 635.8,160.1 634.0,162.0 632.1,164.0 630.3,166.0 628.5,168.0 627.1,169.5 625.8,171.1 624.4,172.7 623.0,174.2 621.6,175.8 620.2,177.4 618.8,179.0 617.4,180.5 615.9,182.0 614.5,183.5 613.1,185.0 611.6,186.5 610.2,187.9 608.8,189.4 607.3,190.8 605.9,192.3 604.5,193.7 603.1,195.2 601.7,196.7 600.3,198.2 598.9,199.7 597.5,201.2 596.1,202.7 594.7,204.2 592.9,206.2 591.1,208.2 589.3,210.2 587.6,212.2 585.9,214.2 584.3,216.1 582.7,218.1 581.2,220.0 579.7,222.0 578.3,224.0 576.9,226.0 575.5,228.1 574.0,230.3 572.6,232.5 571.2,234.7 570.1,236.5 569.0,238.2 567.9,240.0 566.7,241.8 565.6,243.6 564.4,245.4 563.2,247.2 562.0,249.0 560.8,250.8 559.6,252.6 558.4,254.4 557.2,256.1 556.0,257.9 554.8,259.6 553.6,261.4 552.4,263.1 551.2,264.8 550.0,266.6 548.8,268.3 547.6,270.1 546.5,271.8 545.3,273.6 544.2,275.3 543.0,277.1 541.9,278.9 540.8,280.7 539.7,282.5 538.5,284.3 537.7,285.8 537.4,286.6 536.7,287.9 534.5,291.2 533.7,292.3 532.8,293.7 531.7,295.1 530.5,296.8 529.2,298.6 527.9,300.4 526.5,302.4 525.0,304.4 523.5,306.4 522.1,308.4 520.6,310.4 519.2,312.4 517.8,314.3 516.6,316.1 515.3,317.8 514.2,319.3 513.3,320.8 512.4,322.0 510.3,325.3 509.0,327.5 508.3,329.3 507.9,330.6 507.4,332.0 506.7,334.2 506.0,336.5 505.3,338.9 504.8,341.4 504.5,343.8 504.4,346.6 504.5,349.4 504.9,352.0 505.6,354.5 506.5,357.0 507.7,359.4 509.4,361.8 511.6,363.8 514.0,365.3 516.7,366.5 519.8,367.2 523.2,367.3 525.5,367.1 527.6,366.7 529.7,366.2 531.9,365.6 534.0,365.0 536.0,364.5 538.1,364.1 540.0,363.8 541.8,363.5 543.8,363.3 545.7,363.1 547.7,363.0 549.6,362.8 551.6,362.8 553.5,362.7 555.3,362.8 557.1,362.9 559.0,363.1 561.0,363.3 562.9,363.7 564.8,364.1 566.6,364.5 568.5,365.1 570.3,365.6 572.2,366.2 573.9,366.9 575.7,367.6 577.4,368.4 579.1,369.3 580.8,370.2 582.5,371.1 584.1,372.1 585.7,373.0 587.4,374.1 588.8,375.1 590.2,376.2 591.7,377.4 593.4,378.8 595.3,380.2 597.4,381.8 598.8,382.8 600.2,383.9 601.6,385.1 603.2,386.3 604.8,387.6 606.5,388.9 608.3,390.2 610.1,391.5 612.0,392.8 613.9,394.1 615.9,395.4 617.9,396.5 619.6,397.6 621.3,398.6 623.2,399.7 625.1,400.7 627.0,401.8 629.0,402.8 630.9,403.8 632.9,404.8 634.9,405.8 636.9,406.6 638.9,407.5 640.8,408.2 642.7,408.9 644.6,409.5 647.3,410.2 649.9,410.8 652.4,411.2 654.9,411.4 657.4,411.5 659.8,411.4 662.3,411.2 664.8,410.8 667.4,410.3 669.5,409.8 671.6,409.1 673.7,408.4 675.7,407.5 677.7,406.6 679.7,405.7 681.6,404.7 683.5,403.8 685.4,402.9 687.2,402.0 689.0,401.2 690.8,400.4 692.5,399.7 694.3,398.9 696.0,398.1 697.7,397.3 699.5,396.6 701.2,395.8 703.0,395.0 704.8,394.1 706.7,393.3 708.6,392.4 710.6,391.5 712.7,390.6 714.8,389.6 716.5,388.8 718.3,388.0 720.3,387.1 722.3,386.2 724.4,385.2 726.5,384.3 728.6,383.3 730.8,382.3 732.9,381.3 735.0,380.4 737.0,379.4 739.0,378.5 740.8,377.7 742.5,376.9 744.1,376.1 745.5,375.5 746.7,374.9 750.8,373.0 753.1,371.7 755.1,369.8 756.8,368.1 758.3,366.3 759.6,364.6 760.8,363.2 761.9,362.1 763.1,361.1 764.0,360.4 765.4,359.6 767.1,358.7 768.9,357.9 771.0,356.9 773.2,356.0 775.5,355.2 777.9,354.2 779.8,353.4 781.8,352.6 783.8,351.8 785.9,351.0 788.0,350.1 790.1,349.2 792.1,348.4 794.1,347.6 796.1,346.8 797.9,346.0 799.9,345.2 801.5,344.5 802.9,343.9 804.3,343.3 805.9,342.7 807.8,341.9 810.3,340.8 813.5,339.5 814.9,338.9 816.3,338.3 817.9,337.7 819.5,337.0 821.3,336.3 823.1,335.6 825.0,334.8 826.9,334.0 828.9,333.2 830.9,332.4 833.0,331.5 835.1,330.7 837.2,329.8 839.3,328.9 841.4,328.0 843.5,327.1 845.6,326.3 847.7,325.4 849.7,324.5 851.7,323.6 853.7,322.8 855.6,321.9 857.6,321.1 859.5,320.2 861.4,319.4 863.2,318.5 865.1,317.7 866.9,316.9 868.8,316.0 870.6,315.2 872.4,314.3 874.3,313.5 876.1,312.6 877.9,311.7 879.8,310.9 881.6,310.0 883.5,309.1 885.4,308.2 887.4,307.2 889.4,306.3 891.4,305.3 893.4,304.4 895.5,303.4 897.2,302.6 898.8,301.8 900.5,300.9 902.2,300.1 903.9,299.3 905.7,298.5 907.4,297.6 909.1,296.8 910.9,295.9 912.7,295.0 914.5,294.1 916.2,293.3 918.1,292.4 919.9,291.5 921.7,290.6 923.6,289.7 925.4,288.8 927.3,287.8 929.2,286.9 931.1,286.0 933.0,285.0 934.9,284.1 936.8,283.2 938.7,282.2 940.7,281.3 942.7,280.3 944.6,279.3 946.3,278.5 948.1,277.7 950.0,276.8 951.9,275.9 953.8,274.9 955.8,274.0 957.8,273.0 959.9,272.0 962.0,271.0 964.1,270.0 966.2,268.9 968.3,267.9 970.5,266.9 972.6,265.9 974.7,264.9 976.8,263.9 978.9,262.9 980.9,261.9 982.9,260.9 984.9,260.0 986.8,259.1 988.6,258.2 990.4,257.3 992.1,256.5 993.8,255.7 995.4,254.9 996.9,254.2 998.3,253.5 999.6,252.9 1000.8,252.3 1001.8,251.8 1002.8,251.4" stroke="#00ffff" stroke-width="1.00" /><polyline points="815.0,39.3 812.9,40.5 809.9,42.2 808.0,43.3 805.9,44.5 803.7,45.7 802.0,46.7 800.3,47.7 798.5,48.7 796.7,49.7 794.8,50.8 792.8,51.9 790.9,53.0 788.9,54.1 786.9,55.3 784.9,56.4 782.9,57.5 780.9,58.7 779.0,59.8 777.0,60.9 775.0,62.0 773.1,63.1 771.2,64.2 769.3,65.3 767.4,66.4 765.5,67.5 763.6,68.5 761.7,69.5 759.7,70.5 757.8,71.6 755.9,72.6 754.0,73.6 752.1,74.7 750.2,75.8 748.3,76.8 746.4,77.9 744.6,79.0 742.7,80.0 741.0,81.0 739.2,82.0 737.4,83.0 735.7,84.0 733.4,85.3 731.2,86.6 728.9,87.9 726.7,89.2 724.4,90.5 722.1,91.8 719.8,93.2 717.5,94.5 715.2,95.8 712.9,97.2 710.7,98.5 708.4,99.8 706.2,101.2 703.9,102.5 701.7,103.9 699.4,105.4 697.2,106.8 694.9,108.3 693.2,109.4 691.5,110.5 689.7,111.7 688.0,112.9 686.3,114.1 684.5,115.2 682.9,116.5 681.2,117.8 679.5,119.0 677.9,120.3 676.2,121.5 674.6,122.8 672.4,124.5 670.3,126.2 668.2,127.9 666.1,129.6 664.0,131.3 662.0,133.0 659.9,134.8 657.9,136.5 655.9,138.3 654.4,139.7 652.8,141.0 651.3,142.4 649.8,143.7 648.3,145.1 646.8,146.5 645.3,147.9 643.8,149.2 641.8,151.1 639.9,152.9 637.9,154.7 636.0,156.6 634.2,158.5 632.3,160.4 630.5,162.4 628.6,164.3 626.8,166.4 625.4,167.9 624.0,169.5 622.6,171.1 621.3,172.6 619.9,174.2 618.5,175.8 617.0,177.3 615.6,178.9 614.2,180.4 612.8,181.8 611.3,183.3 609.9,184.8 608.5,186.2 607.1,187.7 605.6,189.1 604.2,190.6 602.8,192.1 601.4,193.6 600.0,195.1 598.5,196.5 597.1,198.1 595.7,199.6 594.3,201.1 592.9,202.6 591.1,204.6 589.3,206.6 587.5,208.7 585.8,210.6 584.1,212.6 582.5,214.6 580.9,216.6 579.3,218.6 577.8,220.6 576.3,222.6 574.9,224.7 573.5,226.8 572.0,229.0 570.6,231.2 569.2,233.4 568.1,235.2 567.0,237.0 565.8,238.7 564.7,240.5 563.6,242.3 562.4,244.1 561.2,245.9 560.0,247.7 558.8,249.5 557.6,251.2 556.4,253.0 555.2,254.8 554.0,256.5 552.8,258.2 551.6,260.0 550.4,261.7 549.2,263.5 548.0,265.2 546.8,267.0 545.6,268.7 544.5,270.5 543.3,272.3 542.2,274.0 541.0,275.8 539.9,277.6 538.8,279.4 537.6,281.2 536.5,283.1 535.6,284.8 535.3,285.5 534.7,286.6 532.5,289.9 531.7,290.9 530.8,292.3 529.7,293.7 528.6,295.4 527.3,297.2 525.9,299.0 524.5,301.0 523.1,303.0 521.6,305.0 520.1,307.0 518.7,309.0 517.3,311.0 515.9,312.9 514.6,314.7 513.4,316.4 512.3,318.0 511.3,319.4 510.4,320.7 508.3,324.0 506.9,326.4 506.0,328.4 505.6,329.9 505.1,331.3 504.4,333.4 503.7,335.9 503.0,338.4 502.5,341.0 502.1,343.6 502.0,346.6 502.1,349.6 502.6,352.5 503.3,355.3 504.3,357.9 505.7,360.6 507.6,363.3 510.1,365.7 512.9,367.5 516.0,368.8 519.5,369.5 523.3,369.7 525.8,369.5 528.1,369.0 530.3,368.5 532.5,367.9 534.6,367.4 536.6,366.9 538.5,366.4 540.4,366.1 542.1,365.9 544.0,365.7 545.9,365.5 547.9,365.4 549.8,365.2 551.6,365.2 553.5,365.1 555.2,365.2 556.9,365.3 558.7,365.5 560.6,365.7 562.4,366.0 564.2,366.4 566.0,366.9 567.8,367.4 569.6,367.9 571.3,368.5 573.0,369.1 574.7,369.8 576.3,370.6 578.0,371.4 579.7,372.3 581.3,373.2 582.9,374.2 584.4,375.1 586.0,376.1 587.4,377.1 588.8,378.1 590.2,379.3 591.9,380.6 593.8,382.1 596.0,383.8 597.3,384.8 598.7,385.8 600.2,387.0 601.7,388.2 603.4,389.5 605.1,390.8 606.9,392.1 608.7,393.5 610.6,394.8 612.6,396.1 614.6,397.4 616.7,398.6 618.4,399.7 620.2,400.7 622.1,401.8 624.0,402.9 626.0,403.9 627.9,405.0 630.0,406.0 632.0,407.0 634.0,407.9 636.1,408.8 638.1,409.7 640.1,410.4 642.1,411.1 644.1,411.8 646.8,412.5 649.5,413.1 652.2,413.5 654.8,413.7 657.5,413.8 660.1,413.7 662.7,413.4 665.3,413.0 667.9,412.5 670.2,412.0 672.4,411.2 674.6,410.4 676.7,409.5 678.7,408.6 680.7,407.7 682.7,406.7 684.6,405.8 686.4,404.8 688.2,404.0 690.0,403.2 691.8,402.4 693.5,401.7 695.2,400.9 696.9,400.1 698.6,399.4 700.4,398.6 702.1,397.8 703.9,397.0 705.7,396.1 707.6,395.3 709.5,394.4 711.5,393.5 713.6,392.6 715.7,391.6 717.4,390.8 719.2,390.0 721.2,389.1 723.2,388.2 725.3,387.2 727.4,386.3 729.5,385.3 731.7,384.3 733.8,383.3 735.9,382.4 737.9,381.4 739.9,380.5 741.7,379.7 743.5,378.9 745.0,378.1 746.5,377.5 747.7,376.9 751.7,375.0 754.4,373.4 756.6,371.4 758.4,369.6 760.0,367.6 761.3,366.0 762.4,364.7 763.3,363.7 764.4,362.9 765.1,362.4 766.4,361.8 768.0,361.0 769.8,360.2 771.9,359.4 774.1,358.6 776.5,357.7 778.9,356.7 780.9,355.9 782.8,355.1 784.9,354.3 786.9,353.4 789.0,352.6 791.1,351.7 793.1,350.9 795.2,350.1 797.1,349.3 798.9,348.5 800.9,347.7 802.5,347.0 803.9,346.4 805.4,345.8 807.0,345.2 808.9,344.3 811.4,343.3 814.5,342.0 815.9,341.4 817.3,340.8 818.9,340.2 820.5,339.5 822.3,338.8 824.1,338.1 826.0,337.3 827.9,336.5 829.9,335.7 831.9,334.9 834.0,334.0 836.1,333.1 838.2,332.3 840.3,331.4 842.4,330.5 844.6,329.6 846.7,328.7 848.7,327.9 850.8,327.0 852.8,326.1 854.8,325.3 856.7,324.4 858.7,323.6 860.6,322.7 862.5,321.8 864.4,321.0 866.2,320.2 868.1,319.3 869.9,318.5 871.7,317.6 873.6,316.8 875.4,315.9 877.2,315.1 879.1,314.2 880.9,313.3 882.8,312.4 884.7,311.5 886.6,310.6 888.5,309.7 890.5,308.7 892.5,307.8 894.6,306.8 896.7,305.8 898.3,305.0 900.0,304.2 901.7,303.4 903.4,302.6 905.1,301.7 906.8,300.9 908.6,300.0 910.3,299.2 912.1,298.3 913.9,297.4 915.6,296.6 917.4,295.7 919.2,294.8 921.1,293.9 922.9,293.0 924.7,292.1 926.6,291.2 928.5,290.3 930.4,289.3 932.2,288.4 934.1,287.5 936.1,286.5 938.0,285.6 939.9,284.6 941.9,283.7 943.8,282.7 945.8,281.8 947.5,281.0 949.3,280.1 951.1,279.2 953.0,278.3 955.0,277.3 957.0,276.4 959.0,275.4 961.1,274.4 963.2,273.4 965.3,272.4 967.4,271.4 969.5,270.4 971.6,269.3 973.8,268.3 975.9,267.3 978.0,266.3 980.0,265.3 982.1,264.3 984.1,263.4 986.0,262.4 987.9,261.5 989.8,260.6 991.6,259.7 993.3,258.9 995.0,258.1 996.5,257.4 998.0,256.7 999.4,256.0 1000.7,255.4 1001.9,254.8 1003.0,254.3 1004.0,253.8" stroke="#00ffff" stroke-width="1.00" /><polyline points="814.1,37.7 812.0,39.0 809.0,40.6 807.1,41.7 805.0,42.9 802.8,44.2 801.1,45.1 799.4,46.1 797.6,47.1 795.8,48.2 793.9,49.2 792.0,50.3 790.0,51.5 788.0,52.6 786.1,53.7 784.1,54.8 782.0,56.0 780.1,57.1 778.1,58.2 776.1,59.4 774.2,60.5 772.2,61.6 770.3,62.7 768.4,63.7 766.5,64.8 764.6,65.9 762.7,67.0 760.9,68.2 759.0,69.3 757.2,70.4 755.3,71.6 753.4,72.7 751.6,73.8 749.7,74.9 747.8,76.0 745.9,77.0 744.1,78.1 742.3,79.1 740.5,80.2 738.7,81.2 736.9,82.2 735.2,83.2 732.9,84.5 730.7,85.8 728.4,87.1 726.2,88.4 723.9,89.7 721.6,91.0 719.3,92.3 717.0,93.6 714.7,95.0 712.4,96.3 710.2,97.6 707.9,99.0 705.6,100.3 703.4,101.7 701.1,103.1 698.9,104.5 696.6,106.0 694.4,107.4 692.6,108.6 690.9,109.7 689.2,110.9 687.4,112.0 685.7,113.2 684.0,114.4 682.3,115.7 680.6,116.9 678.9,118.2 677.3,119.4 675.6,120.7 674.0,121.9 671.8,123.6 669.6,125.3 667.5,127.0 665.4,128.6 663.3,130.3 661.2,132.1 659.2,133.8 657.1,135.6 655.1,137.3 653.6,138.7 652.0,140.0 650.5,141.4 649.0,142.8 647.5,144.1 645.9,145.5 644.4,146.8 642.9,148.2 640.9,150.0 638.9,151.8 637.0,153.7 635.1,155.6 633.2,157.4 631.3,159.3 629.4,161.3 627.6,163.3 625.7,165.3 624.3,166.9 622.9,168.5 621.5,170.0 620.1,171.6 618.7,173.1 617.3,174.7 615.9,176.2 614.5,177.8 613.1,179.2 611.6,180.7 610.2,182.2 608.8,183.7 607.3,185.1 605.9,186.6 604.5,188.0 603.1,189.5 601.6,191.0 600.2,192.5 598.8,194.0 597.4,195.5 596.0,197.0 594.6,198.5 593.1,200.0 591.8,201.5 589.9,203.6 588.1,205.6 586.3,207.6 584.6,209.6 582.9,211.6 581.2,213.6 579.6,215.6 578.0,217.6 576.5,219.6 575.0,221.7 573.6,223.8 572.1,225.9 570.7,228.1 569.3,230.3 567.8,232.6 566.7,234.3 565.6,236.1 564.5,237.9 563.4,239.6 562.2,241.4 561.0,243.2 559.9,245.0 558.7,246.8 557.5,248.6 556.3,250.3 555.1,252.1 553.9,253.9 552.7,255.6 551.5,257.3 550.3,259.1 549.1,260.8 547.9,262.6 546.7,264.3 545.5,266.1 544.3,267.9 543.1,269.6 542.0,271.4 540.8,273.2 539.7,275.0 538.5,276.8 537.4,278.6 536.3,280.4 535.1,282.3 534.2,284.1 533.9,284.8 533.3,285.7 531.1,289.0 530.4,290.0 529.5,291.3 528.4,292.8 527.3,294.5 526.0,296.2 524.6,298.1 523.2,300.0 521.8,302.0 520.3,304.0 518.8,306.1 517.4,308.1 516.0,310.0 514.6,311.9 513.3,313.8 512.1,315.5 511.0,317.1 510.0,318.5 509.1,319.8 506.9,323.2 505.5,325.7 504.5,327.9 504.1,329.4 503.6,330.8 502.9,332.9 502.1,335.4 501.5,338.0 500.9,340.7 500.5,343.5 500.4,346.6 500.5,349.8 501.0,352.8 501.8,355.8 502.9,358.6 504.3,361.4 506.4,364.4 509.1,367.0 512.1,368.9 515.5,370.3 519.3,371.1 523.3,371.3 526.1,371.1 528.4,370.6 530.7,370.1 532.9,369.5 535.0,368.9 537.0,368.4 538.8,368.0 540.6,367.7 542.3,367.5 544.2,367.3 546.1,367.1 548.0,367.0 549.8,366.8 551.7,366.8 553.4,366.7 555.1,366.8 556.7,366.9 558.5,367.1 560.3,367.3 562.1,367.6 563.9,368.0 565.6,368.4 567.4,368.9 569.1,369.4 570.8,370.0 572.4,370.6 574.0,371.3 575.7,372.0 577.3,372.9 578.9,373.7 580.5,374.6 582.1,375.5 583.6,376.4 585.1,377.4 586.4,378.4 587.8,379.4 589.2,380.6 590.9,381.9 592.8,383.4 595.0,385.0 596.4,386.0 597.7,387.1 599.2,388.2 600.7,389.4 602.4,390.7 604.1,392.1 605.9,393.4 607.8,394.8 609.7,396.1 611.7,397.5 613.8,398.8 615.9,400.0 617.7,401.1 619.5,402.1 621.4,403.2 623.3,404.2 625.3,405.3 627.3,406.3 629.3,407.3 631.4,408.3 633.5,409.3 635.5,410.2 637.6,411.0 639.6,411.8 641.7,412.5 643.7,413.1 646.5,413.8 649.3,414.4 652.1,414.8 654.8,415.0 657.5,415.1 660.2,414.9 662.9,414.7 665.5,414.2 668.2,413.7 670.6,413.1 672.9,412.3 675.1,411.5 677.2,410.6 679.3,409.6 681.3,408.7 683.2,407.7 685.1,406.7 686.9,405.8 688.7,404.9 690.4,404.1 692.2,403.3 693.9,402.6 695.6,401.8 697.3,401.0 699.0,400.3 700.8,399.5 702.5,398.7 704.3,397.9 706.2,397.1 708.0,396.2 709.9,395.3 711.9,394.4 714.0,393.5 716.1,392.5 717.8,391.8 719.7,390.9 721.6,390.0 723.6,389.1 725.7,388.2 727.8,387.2 730.0,386.2 732.1,385.2 734.2,384.2 736.3,383.3 738.3,382.4 740.3,381.5 742.1,380.6 743.9,379.8 745.5,379.0 746.9,378.4 748.1,377.8 752.2,375.9 755.0,374.2 757.3,372.2 759.2,370.3 760.8,368.3 762.1,366.6 763.2,365.4 764.0,364.5 765.0,363.8 765.7,363.5 766.9,362.9 768.5,362.4 770.4,361.7 772.5,361.0 774.7,360.3 777.2,359.4 779.6,358.4 781.6,357.6 783.5,356.8 785.5,356.0 787.6,355.1 789.7,354.3 791.8,353.4 793.8,352.5 795.8,351.7 797.8,350.9 799.6,350.2 801.6,349.3 803.2,348.7 804.6,348.1 806.1,347.5 807.6,346.8 809.6,346.0 812.1,345.0 815.2,343.7 816.6,343.1 818.0,342.5 819.6,341.9 821.2,341.2 823.0,340.5 824.8,339.7 826.7,339.0 828.6,338.2 830.6,337.4 832.6,336.5 834.7,335.7 836.8,334.8 838.9,333.9 841.0,333.1 843.1,332.2 845.3,331.3 847.4,330.4 849.4,329.5 851.5,328.6 853.5,327.8 855.5,326.9 857.4,326.1 859.4,325.2 861.3,324.3 863.2,323.5 865.1,322.6 867.0,321.8 868.8,320.9 870.7,320.1 872.5,319.3 874.3,318.4 876.2,317.5 878.0,316.7 879.8,315.8 881.7,314.9 883.6,314.0 885.5,313.1 887.4,312.2 889.3,311.3 891.3,310.4 893.3,309.4 895.4,308.4 897.5,307.4 899.1,306.6 900.8,305.8 902.5,305.0 904.2,304.2 905.9,303.3 907.6,302.5 909.4,301.7 911.1,300.8 912.9,299.9 914.7,299.1 916.4,298.2 918.2,297.3 920.0,296.4 921.9,295.5 923.7,294.6 925.5,293.7 927.4,292.8 929.3,291.9 931.1,290.9 933.0,290.0 934.9,289.1 936.9,288.1 938.8,287.2 940.7,286.3 942.7,285.3 944.6,284.4 946.6,283.4 948.3,282.6 950.1,281.7 951.9,280.8 953.8,279.9 955.8,279.0 957.8,278.0 959.8,277.0 961.8,276.0 963.9,275.0 966.0,274.0 968.2,273.0 970.3,272.0 972.4,271.0 974.5,269.9 976.6,268.9 978.7,267.9 980.8,266.9 982.8,265.9 984.8,265.0 986.8,264.0 988.7,263.1 990.6,262.2 992.4,261.4 994.1,260.5 995.7,259.7 997.3,259.0 998.8,258.3 1000.2,257.6 1001.5,257.0 1002.7,256.4 1003.8,255.9 1004.8,255.4" stroke="#8a1010" stroke-width="0.80" /><polyline points="812.6,35.1 810.5,36.4 807.5,38.0 805.6,39.1 803.5,40.3 801.3,41.6 799.7,42.5 797.9,43.5 796.1,44.5 794.3,45.6 792.4,46.6 790.5,47.7 788.5,48.8 786.6,50.0 784.6,51.1 782.6,52.2 780.6,53.4 778.6,54.5 776.6,55.6 774.6,56.7 772.7,57.9 770.7,59.0 768.8,60.1 766.9,61.1 765.0,62.2 763.1,63.3 761.4,64.7 759.7,66.1 758.0,67.5 756.3,68.9 754.6,70.3 752.9,71.7 751.1,72.9 749.2,74.0 747.3,75.1 745.4,76.2 743.6,77.2 741.8,78.3 740.0,79.3 738.2,80.3 736.4,81.3 734.7,82.3 732.4,83.6 730.2,84.9 727.9,86.2 725.7,87.5 723.4,88.8 721.1,90.1 718.8,91.4 716.5,92.8 714.2,94.1 711.9,95.4 709.7,96.8 707.4,98.1 705.1,99.5 702.9,100.8 700.6,102.2 698.3,103.7 696.1,105.1 693.8,106.6 692.1,107.7 690.3,108.9 688.6,110.0 686.9,111.2 685.1,112.4 683.4,113.6 681.7,114.8 680.0,116.1 678.3,117.3 676.6,118.5 675.0,119.8 673.3,121.0 671.1,122.6 668.9,124.3 666.8,126.0 664.6,127.7 662.5,129.4 660.4,131.1 658.3,132.8 656.3,134.5 654.2,136.3 652.7,137.6 651.1,139.0 649.6,140.3 648.0,141.6 646.5,143.0 645.0,144.3 643.4,145.7 641.9,147.1 639.9,148.9 637.9,150.7 635.9,152.5 634.0,154.4 632.0,156.2 630.1,158.2 628.2,160.1 626.3,162.1 624.5,164.1 623.0,165.7 621.6,167.2 620.2,168.8 618.8,170.3 617.4,171.8 616.0,173.4 614.5,174.9 613.1,176.4 611.7,177.9 610.3,179.4 608.8,180.9 607.4,182.3 606.0,183.8 604.6,185.2 603.1,186.7 601.7,188.2 600.3,189.7 598.8,191.2 597.4,192.6 596.0,194.2 594.6,195.7 593.2,197.2 591.7,198.7 590.4,200.3 588.5,202.3 586.7,204.3 584.9,206.4 583.2,208.4 581.4,210.4 579.7,212.4 578.1,214.4 576.5,216.4 575.0,218.5 573.5,220.6 572.0,222.7 570.6,224.8 569.1,227.1 567.7,229.3 566.2,231.6 565.1,233.3 564.0,235.1 562.9,236.9 561.8,238.6 560.6,240.4 559.5,242.2 558.3,244.0 557.1,245.8 555.9,247.5 554.7,249.3 553.5,251.0 552.3,252.8 551.1,254.5 549.9,256.3 548.7,258.0 547.5,259.8 546.3,261.5 545.1,263.3 543.9,265.0 542.7,266.8 541.5,268.6 540.4,270.3 539.2,272.1 538.1,273.9 536.9,275.7 535.8,277.6 534.7,279.4 533.4,281.4 532.4,283.2 532.2,283.9 531.7,284.7 529.6,287.9 528.9,288.9 528.0,290.2 526.9,291.7 525.7,293.3 524.4,295.1 523.1,297.0 521.7,298.9 520.2,300.9 518.8,302.9 517.3,304.9 515.8,307.0 514.4,308.9 513.1,310.8 511.7,312.7 510.5,314.4 509.4,316.0 508.4,317.4 507.5,318.8 505.3,322.2 503.8,324.8 502.7,327.3 502.3,328.8 501.8,330.2 501.1,332.3 500.3,334.9 499.6,337.6 499.0,340.4 498.6,343.3 498.5,346.6 498.7,349.9 499.2,353.2 500.0,356.3 501.1,359.3 502.7,362.4 504.9,365.6 508.0,368.5 511.2,370.6 514.9,372.1 519.1,373.0 523.3,373.2 526.3,372.9 528.8,372.5 531.2,371.9 533.4,371.3 535.5,370.8 537.4,370.3 539.2,369.9 540.9,369.6 542.5,369.4 544.4,369.2 546.2,369.0 548.1,368.8 549.9,368.7 551.7,368.7 553.4,368.6 555.1,368.7 556.6,368.8 558.3,368.9 560.0,369.2 561.7,369.5 563.5,369.8 565.1,370.3 566.8,370.7 568.5,371.2 570.2,371.8 571.7,372.4 573.3,373.0 574.8,373.8 576.4,374.5 578.0,375.4 579.6,376.3 581.1,377.2 582.6,378.0 584.1,379.0 585.3,379.9 586.6,380.9 588.1,382.0 589.7,383.4 591.7,384.9 593.9,386.6 595.2,387.6 596.6,388.6 598.0,389.7 599.6,390.9 601.2,392.2 603.0,393.6 604.8,394.9 606.7,396.3 608.6,397.7 610.7,399.1 612.8,400.4 614.9,401.7 616.8,402.7 618.6,403.7 620.5,404.8 622.5,405.8 624.5,406.9 626.6,407.9 628.6,408.9 630.7,409.9 632.8,410.8 634.9,411.7 637.0,412.5 639.1,413.3 641.2,414.0 643.4,414.6 646.2,415.3 649.1,415.9 651.9,416.2 654.8,416.4 657.6,416.5 660.3,416.3 663.1,416.0 665.8,415.6 668.5,415.0 671.0,414.3 673.3,413.5 675.6,412.6 677.7,411.7 679.8,410.7 681.8,409.7 683.7,408.7 685.6,407.7 687.4,406.8 689.2,405.9 690.9,405.0 692.6,404.2 694.3,403.5 696.0,402.7 697.7,402.0 699.5,401.2 701.2,400.4 703.0,399.6 704.7,398.8 706.6,398.0 708.4,397.1 710.4,396.3 712.3,395.4 714.4,394.4 716.5,393.4 718.2,392.7 720.1,391.8 722.0,390.9 724.0,390.0 726.1,389.1 728.2,388.1 730.4,387.1 732.5,386.1 734.6,385.2 736.7,384.2 738.8,383.3 740.7,382.4 742.6,381.5 744.3,380.7 745.9,379.9 747.3,379.3 748.5,378.7 752.6,376.8 755.6,375.0 758.0,372.9 759.9,370.9 761.6,368.9 762.9,367.2 763.9,366.0 764.7,365.2 765.6,364.8 766.3,364.8 767.7,364.5 769.3,364.3 771.2,364.0 773.4,363.7 775.8,363.1 778.2,362.2 780.7,361.2 782.7,360.4 784.7,359.6 786.7,358.7 788.7,357.9 790.8,357.0 792.9,356.2 795.0,355.3 797.0,354.5 798.9,353.7 800.8,352.9 802.7,352.1 804.4,351.4 805.8,350.8 807.2,350.3 808.8,349.6 810.7,348.8 813.2,347.7 816.4,346.4 817.7,345.9 819.2,345.3 820.7,344.6 822.4,344.0 824.1,343.2 825.9,342.5 827.8,341.7 829.7,340.9 831.7,340.1 833.8,339.3 835.8,338.4 837.9,337.6 840.0,336.7 842.2,335.8 844.3,334.9 846.4,334.1 848.5,333.2 850.6,332.3 852.7,331.4 854.7,330.5 856.7,329.7 858.6,328.8 860.6,327.9 862.5,327.1 864.5,326.2 866.3,325.4 868.2,324.5 870.1,323.7 871.9,322.8 873.8,322.0 875.6,321.1 877.4,320.3 879.3,319.4 881.1,318.5 883.0,317.6 884.9,316.8 886.8,315.9 888.7,314.9 890.6,314.0 892.6,313.1 894.6,312.1 896.7,311.1 898.7,310.1 900.4,309.3 902.1,308.5 903.8,307.7 905.5,306.9 907.2,306.0 908.9,305.2 910.7,304.3 912.4,303.5 914.2,302.6 916.0,301.8 917.8,300.9 919.6,300.0 921.4,299.1 923.2,298.2 925.0,297.3 926.9,296.4 928.7,295.5 930.6,294.6 932.5,293.6 934.4,292.7 936.3,291.8 938.2,290.8 940.1,289.9 942.0,289.0 944.0,288.0 945.9,287.1 947.9,286.1 949.6,285.3 951.4,284.4 953.2,283.5 955.1,282.6 957.1,281.7 959.1,280.7 961.1,279.7 963.1,278.7 965.2,277.7 967.3,276.7 969.5,275.7 971.6,274.7 973.7,273.7 975.8,272.6 977.9,271.6 980.0,270.6 982.1,269.6 984.1,268.6 986.1,267.7 988.1,266.7 990.0,265.8 991.9,264.9 993.7,264.1 995.4,263.2 997.0,262.5 998.6,261.7 1000.1,261.0 1001.5,260.3 1002.8,259.7 1004.0,259.1 1005.1,258.6 1006.1,258.1" stroke="#ffffff" stroke-width="1.00" /><polyline points="812.1,34.3 810.0,35.5 807.1,37.2 805.1,38.3 803.0,39.5 800.8,40.7 799.2,41.6 797.4,42.6 795.6,43.7 793.8,44.7 791.9,45.8 790.0,46.9 788.0,48.0 786.1,49.1 784.1,50.2 782.1,51.4 780.1,52.5 778.1,53.6 776.1,54.8 774.1,55.9 772.2,57.0 770.2,58.1 768.3,59.2 766.4,60.3 764.5,61.4 762.6,62.4 760.9,63.8 759.2,65.1 757.4,66.5 755.7,67.8 754.0,69.2 752.2,70.5 750.4,71.7 748.5,72.8 746.6,73.9 744.7,74.9 742.9,76.0 741.1,77.0 739.3,78.1 737.5,79.1 735.7,80.1 734.0,81.1 731.7,82.4 729.5,83.7 727.2,85.0 725.0,86.3 722.7,87.6 720.4,88.9 718.1,90.2 715.8,91.6 713.5,92.9 711.2,94.2 708.9,95.6 706.7,96.9 704.4,98.3 702.1,99.6 699.9,101.1 697.6,102.5 695.3,103.9 693.0,105.4 691.3,106.6 689.6,107.7 687.8,108.9 686.1,110.1 684.3,111.2 682.6,112.4 680.9,113.7 679.2,114.9 677.5,116.2 675.8,117.4 674.2,118.7 672.5,119.9 670.3,121.6 668.1,123.3 666.0,124.9 663.8,126.6 661.7,128.3 659.6,130.1 657.6,131.8 655.5,133.6 653.4,135.3 651.9,136.7 650.3,138.0 648.8,139.4 647.3,140.7 645.7,142.1 644.2,143.4 642.7,144.8 641.1,146.2 639.1,148.0 637.1,149.8 635.1,151.7 633.2,153.5 631.3,155.4 629.3,157.4 627.4,159.4 625.6,161.4 623.7,163.4 622.3,164.9 620.8,166.5 619.4,168.1 618.1,169.6 616.7,171.1 615.2,172.7 613.8,174.2 612.4,175.7 611.0,177.2 609.6,178.7 608.1,180.2 606.7,181.6 605.3,183.1 603.8,184.5 602.4,186.0 601.0,187.5 599.5,189.0 598.1,190.5 596.7,192.0 595.3,193.5 593.8,195.0 592.4,196.5 591.0,198.1 589.6,199.6 587.8,201.6 585.9,203.7 584.1,205.7 582.4,207.7 580.7,209.7 579.0,211.8 577.3,213.8 575.7,215.8 574.2,217.9 572.7,220.0 571.2,222.1 569.7,224.3 568.3,226.5 566.8,228.8 565.4,231.0 564.3,232.8 563.1,234.6 562.0,236.3 560.9,238.1 559.8,239.9 558.6,241.6 557.4,243.4 556.3,245.2 555.1,247.0 553.9,248.7 552.7,250.5 551.5,252.2 550.3,254.0 549.1,255.7 547.9,257.4 546.7,259.2 545.5,260.9 544.3,262.7 543.1,264.5 541.9,266.2 540.7,268.0 539.5,269.8 538.4,271.6 537.2,273.4 536.1,275.2 534.9,277.0 533.8,278.8 532.6,280.9 531.5,282.8 531.3,283.4 530.9,284.2 528.7,287.4 528.1,288.3 527.1,289.6 526.1,291.1 524.9,292.8 523.6,294.5 522.3,296.4 520.9,298.3 519.4,300.3 518.0,302.3 516.5,304.4 515.0,306.4 513.6,308.3 512.2,310.3 510.9,312.1 509.7,313.8 508.6,315.4 507.6,316.9 506.6,318.3 504.4,321.7 502.9,324.4 501.8,326.9 501.3,328.5 500.9,329.8 500.1,332.0 499.3,334.6 498.6,337.4 498.0,340.2 497.6,343.2 497.5,346.6 497.7,350.0 498.2,353.4 499.0,356.6 500.2,359.7 501.8,362.9 504.2,366.3 507.3,369.3 510.8,371.4 514.6,373.1 519.0,374.0 523.3,374.2 526.5,373.9 529.1,373.4 531.4,372.9 533.6,372.3 535.7,371.7 537.6,371.2 539.4,370.9 541.0,370.6 542.6,370.4 544.5,370.2 546.3,370.0 548.2,369.8 550.0,369.7 551.7,369.7 553.4,369.6 555.0,369.7 556.5,369.8 558.2,369.9 559.9,370.2 561.6,370.5 563.2,370.8 564.9,371.2 566.6,371.7 568.2,372.2 569.8,372.7 571.4,373.3 572.9,374.0 574.4,374.7 576.0,375.4 577.5,376.3 579.1,377.1 580.6,378.0 582.1,378.9 583.5,379.8 584.7,380.7 586.0,381.7 587.4,382.8 589.1,384.2 591.1,385.7 593.3,387.4 594.6,388.3 595.9,389.4 597.4,390.5 599.0,391.7 600.6,393.0 602.3,394.4 604.2,395.7 606.1,397.1 608.1,398.5 610.1,399.9 612.3,401.3 614.4,402.5 616.3,403.6 618.1,404.6 620.0,405.7 622.0,406.8 624.0,407.8 626.1,408.9 628.2,409.9 630.3,410.9 632.4,411.8 634.5,412.8 636.7,413.6 638.8,414.4 640.9,415.1 643.1,415.7 646.0,416.5 648.9,417.0 651.8,417.4 654.7,417.6 657.6,417.7 660.5,417.5 663.3,417.2 666.0,416.8 668.8,416.2 671.3,415.5 673.8,414.7 676.1,413.8 678.3,412.9 680.4,411.9 682.4,410.9 684.4,409.9 686.3,408.9 688.1,408.0 689.8,407.1 691.5,406.3 693.2,405.5 694.9,404.8 696.6,404.0 698.3,403.2 700.0,402.4 701.8,401.7 703.5,400.9 705.3,400.1 707.1,399.2 709.0,398.4 710.9,397.5 712.9,396.6 715.0,395.7 717.1,394.7 718.8,393.9 720.7,393.1 722.6,392.2 724.6,391.3 726.7,390.3 728.8,389.4 731.0,388.4 733.1,387.4 735.2,386.4 737.3,385.5 739.4,384.5 741.3,383.6 743.2,382.8 744.9,382.0 746.5,381.2 747.9,380.5 749.1,380.0 753.2,378.1 756.4,376.1 759.0,373.9 761.0,371.9 762.7,369.8 764.0,368.1 764.9,367.0 765.6,366.3 766.4,365.9 767.0,365.9 768.2,365.7 769.7,365.4 771.6,365.0 773.8,364.6 776.1,364.0 778.6,363.1 781.1,362.1 783.1,361.3 785.0,360.5 787.1,359.7 789.1,358.8 791.2,358.0 793.3,357.1 795.4,356.2 797.4,355.4 799.3,354.6 801.1,353.9 803.1,353.0 804.7,352.4 806.2,351.8 807.6,351.2 809.2,350.5 811.1,349.7 813.6,348.7 816.8,347.3 818.1,346.8 819.6,346.2 821.1,345.6 822.7,344.9 824.5,344.2 826.3,343.4 828.2,342.7 830.1,341.9 832.1,341.1 834.1,340.2 836.2,339.4 838.3,338.5 840.4,337.6 842.5,336.8 844.7,335.9 846.8,335.0 848.9,334.1 851.0,333.2 853.1,332.3 855.1,331.4 857.1,330.6 859.0,329.7 861.0,328.9 863.0,328.0 864.9,327.1 866.8,326.3 868.6,325.4 870.5,324.6 872.3,323.7 874.2,322.9 876.0,322.0 877.9,321.2 879.7,320.3 881.5,319.4 883.4,318.6 885.3,317.7 887.2,316.8 889.1,315.8 891.0,314.9 893.0,314.0 895.0,313.0 897.1,312.0 899.2,311.0 900.8,310.2 902.5,309.4 904.2,308.6 905.9,307.8 907.7,306.9 909.4,306.1 911.1,305.2 912.9,304.4 914.6,303.5 916.4,302.7 918.2,301.8 920.0,300.9 921.8,300.0 923.6,299.1 925.5,298.2 927.3,297.3 929.2,296.4 931.0,295.5 932.9,294.5 934.8,293.6 936.7,292.7 938.6,291.7 940.5,290.8 942.5,289.9 944.4,288.9 946.4,288.0 948.3,287.0 950.0,286.2 951.8,285.3 953.7,284.4 955.6,283.5 957.5,282.6 959.5,281.6 961.5,280.6 963.6,279.6 965.7,278.6 967.8,277.6 969.9,276.6 972.0,275.6 974.1,274.6 976.3,273.5 978.4,272.5 980.5,271.5 982.5,270.5 984.6,269.5 986.6,268.6 988.5,267.6 990.4,266.7 992.3,265.8 994.1,265.0 995.8,264.1 997.5,263.4 999.1,262.6 1000.5,261.9 1001.9,261.2 1003.2,260.6 1004.4,260.0 1005.5,259.5 1006.5,259.0" stroke="#ffff00" stroke-width="1.30" /><polyline points="508.5,420.0 508.5,418.7 508.6,417.0 508.6,415.0 508.7,412.7 508.7,410.2 508.8,407.6 508.9,405.1 509.0,402.5 509.1,400.1 509.3,398.0 509.5,396.1 509.7,394.6 510.7,391.2 512.1,390.1 514.2,389.2 515.8,388.4 517.5,387.8 519.5,387.2 521.9,386.8 525.0,386.5 526.7,386.4 528.6,386.4 530.8,386.4 533.0,386.4 535.4,386.5 537.8,386.6 540.2,386.7 542.5,386.8 544.6,387.0 546.6,387.2 548.4,387.4 551.1,387.9 553.3,388.5 555.3,389.1 557.1,389.9 558.9,390.7 561.0,391.5 562.9,392.3 564.9,393.1 566.9,393.9 568.9,394.8 570.9,395.7 573.0,396.6 575.0,397.5 577.0,398.4 579.1,399.3 581.2,400.2 583.3,401.2 585.3,402.1 587.4,403.0 589.5,404.0 591.3,404.8 593.1,405.7 594.9,406.6 596.7,407.4 598.5,408.3 600.3,409.2 602.2,410.1 604.0,411.0 605.9,411.9 607.7,412.8 609.6,413.7 611.5,414.6 613.4,415.5 615.3,416.5 617.1,417.5 619.0,418.5 620.9,419.6 622.8,420.8 624.8,422.1 626.7,423.4 628.6,424.6 630.4,425.9 632.1,427.0 633.6,428.0 635.6,429.4 637.1,430.7 638.5,431.9 640.1,432.8 642.0,433.5 643.7,433.9 645.5,434.2 647.4,434.4 649.4,434.5 651.6,434.5 653.8,434.3 656.0,434.0 657.8,433.6 659.6,433.1 661.5,432.5 663.4,431.8 665.4,431.0 667.4,430.2 669.5,429.3 671.6,428.5 673.8,427.7 675.6,427.0 677.5,426.4 679.4,425.7 681.4,425.0 683.4,424.2 685.4,423.5 687.4,422.8 689.5,422.0 691.5,421.3 693.6,420.5 695.7,419.8 697.6,419.1 699.6,418.4 701.6,417.7 703.7,417.0 705.7,416.3 707.8,415.6 709.8,414.8 711.8,414.1 713.9,413.4 715.8,412.7 717.7,412.1 719.6,411.4 721.7,410.7 723.7,410.0 725.5,409.3 727.3,408.6 729.1,408.0 730.9,407.3 732.8,406.6 734.9,405.9 737.1,405.1 739.6,404.2 741.3,403.6 743.0,403.0 744.9,402.4 746.8,401.7 748.8,401.0 750.8,400.3 752.9,399.6 755.0,398.9 757.1,398.2 759.3,397.4 761.4,396.7 763.5,395.9 765.6,395.2 767.6,394.4 769.6,393.6 771.5,392.8 773.5,392.0 775.3,391.1 777.1,390.3 778.9,389.5 780.6,388.6 782.3,387.8 784.0,386.9 785.7,386.1 787.4,385.2 789.3,384.2 791.2,383.2 793.2,382.2 795.3,381.2 797.6,380.1 800.0,378.9 801.5,378.2 803.2,377.4 804.9,376.6 806.6,375.8 808.4,375.0 810.2,374.1 812.1,373.2 814.1,372.3 816.0,371.4 818.0,370.5 820.0,369.6 822.0,368.6 824.0,367.7 826.1,366.8 828.1,365.8 830.1,364.9 832.1,364.0 834.1,363.0 836.1,362.1 838.0,361.2 839.9,360.3 841.8,359.5 843.6,358.6 845.3,357.8 847.0,357.0" stroke="#ff0000" stroke-width="1.00" /><polyline points="600.3,409.2 602.2,410.1 604.0,411.0 605.9,411.9 607.7,412.8 609.6,413.7 611.5,414.6 613.4,415.5 615.3,416.5 617.1,417.5 619.0,418.5 620.9,419.6 622.8,420.8 624.8,422.1 626.7,423.4 628.6,424.6 630.4,425.9 632.1,427.0 633.6,428.0 635.6,429.4 637.1,430.7 638.5,431.9 640.1,432.8 642.0,433.5 643.7,433.9 645.5,434.2 647.4,434.4 649.4,434.5 651.6,434.5 653.8,434.3 656.0,434.0 657.8,433.6 659.6,433.1 661.5,432.5 663.4,431.8 665.4,431.0 667.4,430.2 669.5,429.3 671.6,428.5 673.8,427.7 675.6,427.0 677.5,426.4 679.4,425.7 681.4,425.0 683.4,424.2 685.4,423.5 687.4,422.8 689.5,422.0 691.5,421.3 693.6,420.5 695.7,419.8 697.6,419.1 699.6,418.4 701.6,417.7 703.7,417.0 705.7,416.3 707.8,415.6 709.8,414.8 711.8,414.1 713.9,413.4 715.8,412.7 717.7,412.1 719.6,411.4 721.7,410.7 723.7,410.0 725.5,409.3 727.3,408.6 729.1,408.0 730.9,407.3 732.8,406.6 734.9,405.9 737.1,405.1 739.6,404.2 741.3,403.6 743.0,403.0 744.9,402.4 746.8,401.7 748.8,401.0 750.8,400.3 752.9,399.6 755.0,398.9 757.1,398.2 759.3,397.4 761.4,396.7 763.5,395.9" stroke="#5b6b2a" stroke-width="1.10" /><polyline points="506.5,419.9 506.5,418.6 506.6,417.0 506.6,414.9 506.7,412.6 506.7,410.2 506.8,407.6 506.9,405.0 507.0,402.4 507.1,400.0 507.3,397.8 507.5,395.9 507.8,394.1 509.0,390.3 511.1,388.3 513.4,387.4 514.9,386.6 516.8,385.9 519.0,385.2 521.7,384.8 524.9,384.5 526.6,384.4 528.6,384.4 530.8,384.4 533.1,384.4 535.5,384.5 537.9,384.6 540.3,384.7 542.6,384.8 544.8,385.0 546.8,385.2 548.7,385.4 551.5,385.9 553.9,386.5 556.0,387.3 557.9,388.0 559.7,388.8 561.7,389.6 563.7,390.4 565.7,391.2 567.7,392.1 569.7,393.0 571.7,393.9 573.8,394.8 575.8,395.7 577.9,396.6 579.9,397.5 582.0,398.4 584.1,399.3 586.2,400.3 588.3,401.2 590.3,402.2 592.2,403.0 594.0,403.9 595.8,404.8 597.6,405.6 599.4,406.5 601.2,407.4 603.0,408.3 604.9,409.2 606.7,410.1 608.6,411.0 610.5,411.9 612.4,412.8 614.3,413.7 616.2,414.7 618.1,415.7 620.0,416.8 621.9,417.9 623.9,419.1 625.9,420.4 627.9,421.7 629.8,422.9 631.6,424.1 633.2,425.2 634.8,426.3 636.9,427.7 638.5,429.1 639.8,430.1 641.0,430.8 642.6,431.4 644.1,431.7 645.8,432.0 647.6,432.2 649.5,432.3 651.5,432.2 653.5,432.1 655.6,431.7 657.2,431.4 658.9,430.9 660.7,430.2 662.6,429.5 664.5,428.8 666.5,427.9 668.6,427.1 670.8,426.2 673.0,425.4 674.8,424.7 676.7,424.0 678.6,423.3 680.5,422.6 682.5,421.9 684.5,421.1 686.5,420.4 688.6,419.6 690.7,418.8 692.7,418.1 694.8,417.4 696.8,416.7 698.7,416.0 700.8,415.3 702.8,414.5 704.9,413.8 706.9,413.1 709.0,412.4 711.0,411.7 713.0,411.0 715.0,410.3 716.9,409.6 718.7,409.0 720.8,408.2 722.8,407.5 724.6,406.8 726.4,406.2 728.2,405.5 730.0,404.9 732.0,404.2 734.0,403.4 736.3,402.6 738.7,401.8 740.4,401.2 742.2,400.5 744.1,399.9 746.0,399.2 748.0,398.6 750.0,397.9 752.1,397.2 754.2,396.5 756.3,395.7 758.4,395.0 760.5,394.2 762.6,393.5 764.6,392.7 766.7,392.0 768.6,391.2 770.5,390.4 772.4,389.6 774.3,388.8 776.0,388.0 777.7,387.1 779.4,386.3 781.1,385.5 782.8,384.6 784.5,383.8 786.2,382.8 788.1,381.9 790.0,380.9 792.0,379.9 794.2,378.8 796.4,377.7 798.9,376.6 800.4,375.8 802.1,375.1 803.7,374.3 805.5,373.4 807.3,372.6 809.1,371.7 811.0,370.9 813.0,370.0 814.9,369.1 816.9,368.1 818.9,367.2 820.9,366.3 823.0,365.3 825.0,364.4 827.0,363.5 829.0,362.5 831.0,361.6 833.0,360.7 835.0,359.8 836.9,358.9 838.8,358.0 840.6,357.1 842.5,356.3 844.2,355.5 845.9,354.7" stroke="#ff00ff" stroke-width="1.20" /><polyline points="501.0,419.7 501.1,418.5 501.1,416.8 501.1,414.8 501.2,412.5 501.3,410.0 501.3,407.4 501.4,404.8 501.5,402.2 501.7,399.7 501.8,397.3 502.0,395.2 502.4,392.8 504.1,387.7 508.3,383.6 511.1,382.4 512.7,381.6 515.1,380.6 517.9,379.9 521.0,379.3 524.5,379.0 526.5,378.9 528.6,378.9 530.8,378.9 533.2,378.9 535.6,379.0 538.1,379.1 540.6,379.2 543.0,379.3 545.3,379.5 547.4,379.7 549.5,380.0 552.7,380.5 555.5,381.3 557.9,382.1 560.0,383.0 561.8,383.7 563.8,384.5 565.7,385.3 567.8,386.1 569.9,387.0 571.9,387.9 574.0,388.8 576.0,389.7 578.0,390.6 580.1,391.5 582.1,392.4 584.2,393.4 586.3,394.3 588.4,395.3 590.6,396.2 592.7,397.2 594.5,398.1 596.3,398.9 598.2,399.8 600.0,400.7 601.8,401.6 603.6,402.5 605.5,403.4 607.3,404.3 609.1,405.1 611.0,406.0 612.8,406.9 614.8,407.8 616.7,408.8 618.7,409.8 620.7,410.9 622.7,412.0 624.8,413.2 627.0,414.3 629.1,415.5 631.1,416.7 633.1,417.9 635.0,419.0 636.7,420.0 638.4,421.0 640.8,422.6 642.7,424.0 643.6,424.6 643.9,424.7 644.7,424.8 645.5,424.9 646.8,425.0 648.2,425.0 649.6,424.9 651.1,424.8 652.6,424.5 654.2,424.1 655.3,423.7 656.6,423.2 658.0,422.6 659.7,421.8 661.4,421.0 663.4,420.1 665.4,419.1 667.6,418.1 669.9,417.0 671.7,416.2 673.6,415.4 675.4,414.6 677.3,413.8 679.3,412.9 681.2,412.1 683.2,411.2 685.2,410.3 687.3,409.5 689.4,408.8 691.5,408.0 693.5,407.3 695.5,406.6 697.5,405.9 699.5,405.2 701.6,404.5 703.6,403.8 705.7,403.0 707.7,402.3 709.7,401.6 711.7,400.9 713.6,400.3 715.4,399.6 717.5,398.9 719.4,398.2 721.3,397.5 723.1,396.9 724.8,396.2 726.7,395.6 728.6,394.9 730.7,394.1 732.9,393.3 735.4,392.4 737.1,391.8 739.0,391.2 740.9,390.5 742.8,389.9 744.8,389.2 746.8,388.5 748.9,387.8 751.0,387.1 753.0,386.4 755.2,385.9 757.4,385.6 759.6,385.4 761.7,385.0 763.8,384.7 765.9,384.4 767.7,383.8 769.5,383.0 771.3,382.2 773.0,381.4 774.6,380.7 776.2,379.9 777.8,379.1 779.5,378.2 781.2,377.3 782.9,376.4 784.8,375.5 786.7,374.5 788.8,373.5 791.0,372.4 793.3,371.2 795.8,370.1 797.4,369.3 799.0,368.5 800.7,367.7 802.4,366.9 804.3,366.1 806.1,365.2 808.0,364.3 809.9,363.4 811.9,362.5 813.9,361.6 815.9,360.7 817.9,359.7 819.9,358.8 822.0,357.9 824.0,356.9 826.0,356.0 828.0,355.1 830.0,354.2 831.9,353.2 833.9,352.3 835.7,351.5 837.6,350.6 839.4,349.8 841.1,348.9 842.8,348.1" stroke="#ffffff" stroke-width="1.00" /><polyline points="499.8,419.7 499.9,418.4 499.9,416.8 499.9,414.8 500.0,412.5 500.1,410.0 500.1,407.4 500.2,404.7 500.3,402.1 500.5,399.6 500.6,397.2 500.8,395.1 501.3,392.5 503.0,387.1 507.7,382.5 510.6,381.3 512.2,380.5 514.7,379.5 517.6,378.7 520.9,378.1 524.4,377.8 526.5,377.7 528.6,377.7 530.8,377.7 533.2,377.7 535.7,377.8 538.1,377.9 540.6,378.0 543.1,378.1 545.4,378.3 547.6,378.5 549.7,378.8 552.9,379.4 555.9,380.1 558.4,381.0 560.5,381.9 562.3,382.6 564.2,383.4 566.2,384.2 568.2,385.0 570.3,385.9 572.4,386.8 574.5,387.7 576.5,388.6 578.5,389.5 580.5,390.4 582.6,391.3 584.7,392.3 586.8,393.2 588.9,394.2 591.1,395.1 593.2,396.1 595.0,397.0 596.9,397.8 598.7,398.7 600.5,399.6 602.3,400.5 604.2,401.4 606.0,402.3 607.8,403.2 609.6,404.1 611.5,404.9 613.4,405.8 615.3,406.8 617.3,407.7 619.3,408.7 621.3,409.8 623.3,411.0 625.4,412.1 627.6,413.3 629.7,414.5 631.8,415.7 633.8,416.9 635.7,418.0 637.4,419.0 639.1,420.0 641.6,421.6 643.4,423.0 644.3,423.6 644.4,423.6 645.0,423.7 645.7,423.7 647.0,423.8 648.3,423.8 649.6,423.7 651.1,423.5 652.5,423.2 654.0,422.9 655.0,422.5 656.2,422.0 657.6,421.4 659.2,420.7 661.0,419.8 662.9,418.9 665.0,417.9 667.2,416.9 669.5,415.8 671.3,415.0 673.1,414.2 675.0,413.4 676.9,412.6 678.8,411.7 680.8,410.9 682.8,410.0 684.8,409.1 686.9,408.3 689.0,407.5 691.1,406.8 693.0,406.1 695.0,405.4 697.1,404.7 699.1,404.0 701.2,403.2 703.2,402.5 705.3,401.8 707.3,401.1 709.3,400.4 711.2,399.7 713.1,399.0 715.0,398.4 717.1,397.7 719.0,397.0 720.8,396.3 722.6,395.7 724.4,395.0 726.2,394.3 728.2,393.7 730.2,392.9 732.5,392.1 735.0,391.2 736.7,390.6 738.5,389.9 740.4,389.3 742.4,388.6 744.4,388.0 746.4,387.3 748.5,386.6 750.5,385.9 752.6,385.2 754.7,384.6 756.9,384.2 759.0,383.8 761.1,383.4 763.2,383.0 765.1,382.6 766.9,381.9 768.7,381.1 770.5,380.4 772.1,379.6 773.7,378.9 775.3,378.1 776.9,377.3 778.6,376.4 780.3,375.6 782.0,374.7 783.9,373.7 785.8,372.7 787.9,371.7 790.1,370.6 792.4,369.4 794.9,368.2 796.5,367.5 798.1,366.7 799.8,365.9 801.6,365.1 803.4,364.3 805.3,363.4 807.2,362.5 809.1,361.6 811.1,360.7 813.0,359.8 815.0,358.9 817.1,357.9 819.1,357.0 821.1,356.1 823.1,355.1 825.2,354.2 827.2,353.3 829.1,352.3 831.1,351.4 833.0,350.5 834.9,349.7 836.7,348.8 838.5,348.0 840.3,347.1 841.9,346.3" stroke="#ffff00" stroke-width="1.30" /><polyline points="885.1,338.5 887.2,337.5 889.1,336.5 891.0,335.6 892.7,334.8 894.5,333.9 896.2,333.1 897.9,332.3 899.6,331.4 901.4,330.6 903.2,329.8 905.0,328.9 907.0,328.0 909.0,327.0 910.6,326.2 912.2,325.5 913.8,324.8 915.3,324.0 916.9,323.3 918.5,322.6 920.1,321.8 921.7,321.1 923.4,320.3 925.1,319.5 926.9,318.7 928.7,317.8 930.7,317.0 932.7,316.1 934.8,315.1 937.0,314.1 939.3,313.1 941.8,312.0 943.3,311.3 945.0,310.6 946.7,309.9 948.5,309.1 950.4,308.3 952.3,307.4 954.4,306.5 956.5,305.6 958.6,304.7 960.7,303.8 962.9,302.9 965.2,301.9 967.4,300.9 969.6,300.0 971.8,299.0 974.1,298.1 976.2,297.2 978.4,296.2 980.5,295.3 982.6,294.4 984.6,293.6 986.6,292.7 988.5,291.9 990.3,291.2 992.0,290.4 993.6,289.7 995.2,289.1 996.6,288.5 997.8,287.9 999.0,287.4 1000.0,287.0" stroke="#ff0000" stroke-width="1.00" /><polyline points="" stroke="#5b6b2a" stroke-width="1.10" /><polyline points="884.0,336.1 886.0,335.1 888.0,334.2 889.8,333.3 891.6,332.4 893.4,331.6 895.1,330.8 896.8,329.9 898.5,329.1 900.2,328.3 902.0,327.4 903.9,326.5 905.9,325.6 907.9,324.6 909.5,323.9 911.1,323.1 912.7,322.4 914.2,321.7 915.8,320.9 917.4,320.2 919.0,319.5 920.6,318.7 922.3,317.9 924.0,317.1 925.8,316.3 927.7,315.5 929.6,314.6 931.6,313.7 933.7,312.7 935.9,311.7 938.3,310.7 940.8,309.6 942.3,309.0 943.9,308.2 945.6,307.5 947.5,306.7 949.3,305.9 951.3,305.0 953.3,304.2 955.4,303.3 957.6,302.3 959.7,301.4 961.9,300.5 964.1,299.5 966.4,298.6 968.6,297.6 970.8,296.6 973.0,295.7 975.2,294.8 977.4,293.8 979.5,292.9 981.6,292.0 983.6,291.2 985.6,290.3 987.5,289.5 989.3,288.8 991.0,288.0 992.6,287.3 994.1,286.7 995.5,286.1 996.8,285.5 998.0,285.0 999.0,284.6" stroke="#ff00ff" stroke-width="1.20" /><polyline points="880.9,329.6 882.9,328.7 884.8,327.7 886.7,326.8 888.5,326.0 890.2,325.1 891.9,324.3 893.7,323.4 895.4,322.6 897.1,321.8 899.0,320.9 900.8,320.0 902.8,319.1 904.8,318.1 906.5,317.4 908.0,316.6 909.6,315.9 911.2,315.2 912.8,314.4 914.3,313.7 916.0,312.9 917.6,312.2 919.3,311.4 921.0,310.6 922.8,309.8 924.7,308.9 926.6,308.0 928.7,307.1 930.8,306.2 933.0,305.2 935.4,304.1 937.9,303.0 939.4,302.4 941.0,301.6 942.8,300.9 944.6,300.1 946.5,299.3 948.5,298.4 950.5,297.5 952.6,296.6 954.7,295.7 956.9,294.8 959.1,293.8 961.3,292.9 963.5,291.9 965.8,291.0 968.0,290.0 970.2,289.1 972.4,288.1 974.6,287.2 976.7,286.3 978.8,285.4 980.8,284.6 982.7,283.7 984.6,282.9 986.4,282.1 988.2,281.4 989.8,280.7 991.3,280.1 992.7,279.5 994.0,278.9 995.1,278.4 996.1,278.0" stroke="#ffffff" stroke-width="1.00" /><polyline points="880.0,327.8 882.0,326.9 884.0,325.9 885.8,325.0 887.6,324.2 889.3,323.3 891.1,322.5 892.8,321.6 894.5,320.8 896.3,320.0 898.1,319.1 900.0,318.2 901.9,317.3 904.0,316.3 905.6,315.6 907.2,314.8 908.8,314.1 910.3,313.3 911.9,312.6 913.5,311.9 915.1,311.1 916.8,310.3 918.4,309.6 920.2,308.8 922.0,307.9 923.9,307.1 925.8,306.2 927.8,305.3 930.0,304.3 932.2,303.3 934.6,302.3 937.0,301.2 938.6,300.5 940.2,299.8 942.0,299.0 943.8,298.3 945.7,297.4 947.7,296.6 949.7,295.7 951.8,294.8 953.9,293.9 956.1,293.0 958.3,292.0 960.5,291.1 962.7,290.1 965.0,289.1 967.2,288.2 969.4,287.2 971.6,286.3 973.8,285.4 975.9,284.5 978.0,283.6 980.0,282.7 982.0,281.9 983.9,281.1 985.7,280.3 987.4,279.6 989.0,278.9 990.5,278.2 991.9,277.6 993.2,277.1 994.3,276.6 995.3,276.2" stroke="#ffff00" stroke-width="1.30" /><path d="M15.0 544.4L15.0 566.0M35.0 544.8L34.5 566.2M55.0 545.3L54.3 566.8M75.0 546.0L74.2 567.5M95.0 546.8L94.1 568.3M114.9 547.6L114.1 569.1M134.9 548.4L134.1 569.9M154.9 549.2L154.0 570.7M174.9 549.9L174.0 571.5M194.9 550.7L194.0 572.3M214.9 551.4L214.0 573.1M234.9 552.1L234.0 573.9M254.9 552.6L254.1 574.6M274.9 552.9L274.1 575.3M294.9 553.0L294.2 576.0M314.9 552.9L314.2 576.6M334.8 552.8L334.1 577.2M354.8 553.0L354.0 577.8M374.8 553.8L373.9 578.5M394.8 555.2L393.7 579.4M414.7 557.1L413.6 580.2M434.6 558.9L433.7 581.1M454.4 561.5L453.7 581.9M474.4 563.3L473.6 582.7M494.3 564.3L493.6 583.4M514.3 565.0L513.5 584.2M534.3 565.5L533.5 585.1M554.3 566.0L553.5 585.9M574.3 566.5L573.5 586.7M594.3 566.9L593.4 587.5M614.3 567.3L613.4 588.4M634.3 567.7L633.4 589.2M654.3 568.2L653.4 590.0M674.3 568.6L673.4 590.8M694.3 569.0L693.4 591.6M714.3 569.5L713.4 592.3M734.3 570.0L733.4 593.1M754.2 570.6L753.4 593.8M774.2 571.3L773.4 594.5M794.2 571.9L793.5 595.2M814.2 572.6L813.5 595.8M834.2 573.3L833.5 596.5M854.2 574.0L853.5 597.1M874.2 574.8L873.5 597.7M894.2 575.5L893.5 598.3M914.1 576.3L913.5 598.9M934.1 577.0L933.5 599.5M954.1 577.8L953.5 600.1M974.1 578.5L973.4 600.7M994.1 579.3L993.4 601.3" stroke="#ff0000" stroke-width="1.30"/><path d="M392 553 Q403 551 412 549.8 Q419 549.3 421 552 L424.5 559.5" stroke="#5b6b2a" stroke-width="1.1"/><path d="M410 551V578M416 550V578M421 553V578" stroke="#ff0000" stroke-width="1.1"/><polyline points="5.0,544.3 6.5,544.3 8.0,544.3 9.4,544.4 10.9,544.4 12.5,544.4 14.3,544.4 16.2,544.4 18.3,544.4 20.6,544.5 23.3,544.5 26.3,544.6 29.6,544.6 33.4,544.7 37.6,544.8 42.4,545.0 47.7,545.1 53.5,545.3 60.0,545.5 62.0,545.6 64.1,545.6 66.2,545.7 68.5,545.8 70.8,545.9 73.2,546.0 75.6,546.1 78.2,546.2 80.8,546.3 83.4,546.4 86.2,546.5 88.9,546.6 91.8,546.7 94.7,546.8 97.6,546.9 100.6,547.0 103.7,547.1 106.8,547.3 109.9,547.4 113.1,547.5 116.3,547.6 119.5,547.8 122.8,547.9 126.1,548.0 129.5,548.2 132.8,548.3 136.2,548.4 139.6,548.6 143.0,548.7 146.4,548.8 149.8,549.0 153.3,549.1 156.7,549.2 160.2,549.4 163.6,549.5 167.1,549.6 170.5,549.8 174.0,549.9 177.4,550.0 180.8,550.2 184.2,550.3 187.6,550.4 191.0,550.6 194.3,550.7 197.6,550.8 200.9,550.9 204.2,551.0 207.4,551.2 210.6,551.3 213.7,551.4 216.8,551.5 219.9,551.6 222.9,551.7 225.9,551.8 228.8,551.9 231.7,552.0 234.5,552.1 237.2,552.1 239.9,552.2 242.5,552.3 245.1,552.4 247.6,552.4 250.0,552.5 254.1,552.6 258.2,552.7 262.1,552.8 266.0,552.8 269.7,552.9 273.4,552.9 277.0,552.9 280.6,553.0 284.1,553.0 287.5,553.0 290.8,553.0 294.1,553.0 297.3,553.0 300.4,553.0 303.5,553.0 306.6,552.9 309.6,552.9 312.5,552.9 315.4,552.9 318.2,552.9 321.1,552.8 323.8,552.8 326.6,552.8 329.3,552.8 331.9,552.8 334.6,552.8 337.2,552.8 339.8,552.8 342.4,552.8 344.9,552.8 347.4,552.8 350.0,552.9 352.5,552.9 355.0,553.0 357.5,553.0 360.0,553.1 363.8,553.2 367.5,553.4 371.1,553.6 374.5,553.7 377.9,553.9 381.1,554.2 384.3,554.4 387.3,554.6 390.3,554.8 393.2,555.1 396.1,555.3 398.9,555.6 401.7,555.9 404.5,556.1 407.2,556.4 410.0,556.7 412.7,556.9 415.5,557.2 418.3,557.5 421.2,557.7 424.1,558.0 427.0,558.2 430.0,558.5 432.9,558.7 435.5,559.0 437.8,559.3 439.9,559.5 441.9,559.8 443.7,560.0 445.5,560.3 447.2,560.5 449.0,560.8 450.8,561.1 452.7,561.3 454.8,561.6 457.1,561.9 459.6,562.1 462.3,562.4 465.4,562.7 468.9,562.9 472.8,563.2 477.1,563.4 482.0,563.7 487.4,564.0 493.4,564.2 500.0,564.5 502.0,564.6 504.0,564.6 506.0,564.7 508.1,564.8 510.3,564.9 512.5,564.9 514.7,565.0 517.0,565.1 519.4,565.1 521.7,565.2 524.2,565.3 526.6,565.3 529.1,565.4 531.7,565.5 534.3,565.5 536.9,565.6 539.5,565.7 542.2,565.7 545.0,565.8 547.7,565.9 550.5,565.9 553.4,566.0 556.2,566.1 559.1,566.1 562.1,566.2 565.0,566.3 568.0,566.3 571.0,566.4 574.0,566.5 577.1,566.5 580.2,566.6 583.3,566.7 586.4,566.7 589.6,566.8 592.7,566.9 595.9,566.9 599.1,567.0 602.3,567.1 605.6,567.1 608.8,567.2 612.1,567.3 615.4,567.3 618.7,567.4 622.0,567.5 625.3,567.6 628.6,567.6 632.0,567.7 635.3,567.8 638.7,567.8 642.0,567.9 645.4,568.0 648.8,568.0 652.1,568.1 655.5,568.2 658.9,568.3 662.2,568.3 665.6,568.4 669.0,568.5 672.4,568.5 675.7,568.6 679.1,568.7 682.4,568.8 685.8,568.8 689.1,568.9 692.5,569.0 695.8,569.1 699.1,569.2 702.4,569.2 705.7,569.3 709.0,569.4 712.2,569.5 715.5,569.6 718.7,569.6 721.9,569.7 725.1,569.8 728.3,569.9 731.5,570.0 734.6,570.1 737.8,570.1 740.9,570.2 743.9,570.3 747.0,570.4 750.0,570.5 753.0,570.6 756.1,570.7 759.2,570.8 762.3,570.9 765.5,571.0 768.7,571.1 771.9,571.2 775.1,571.3 778.4,571.4 781.7,571.5 785.0,571.6 788.4,571.7 791.7,571.8 795.1,571.9 798.5,572.1 801.9,572.2 805.4,572.3 808.8,572.4 812.3,572.5 815.8,572.7 819.2,572.8 822.7,572.9 826.2,573.0 829.7,573.2 833.2,573.3 836.7,573.4 840.2,573.5 843.8,573.7 847.3,573.8 850.8,573.9 854.3,574.0 857.8,574.2 861.3,574.3 864.8,574.4 868.3,574.5 871.7,574.7 875.2,574.8 878.7,574.9 882.1,575.1 885.5,575.2 888.9,575.3 892.3,575.4 895.7,575.6 899.0,575.7 902.4,575.8 905.7,575.9 909.0,576.1 912.2,576.2 915.4,576.3 918.6,576.4 921.8,576.5 925.0,576.7 928.1,576.8 931.1,576.9 934.2,577.0 937.2,577.1 940.2,577.2 943.1,577.4 946.0,577.5 948.8,577.6 951.6,577.7 954.4,577.8 957.1,577.9 959.8,578.0 962.4,578.1 965.0,578.2 967.5,578.3 970.0,578.4 972.4,578.5 974.8,578.6 977.1,578.6 979.3,578.7 981.5,578.8 983.7,578.9 985.7,579.0 987.8,579.0 989.7,579.1 991.6,579.2 993.4,579.3 995.2,579.3 996.8,579.4 998.5,579.4 1000.0,579.5" stroke="#5b6b2a" stroke-width="1.10" /><polyline points="5.0,545.9 6.5,545.9 7.9,545.9 9.4,546.0 10.9,546.0 12.5,546.0 14.2,546.0 16.1,546.0 18.2,546.0 20.6,546.1 23.3,546.1 26.2,546.2 29.6,546.2 33.4,546.3 37.6,546.4 42.3,546.5 47.6,546.7 53.5,546.9 59.9,547.1 61.9,547.2 64.0,547.2 66.2,547.3 68.4,547.4 70.7,547.5 73.1,547.6 75.6,547.7 78.1,547.8 80.7,547.9 83.4,548.0 86.1,548.1 88.9,548.2 91.7,548.3 94.6,548.4 97.6,548.5 100.6,548.6 103.6,548.7 106.7,548.9 109.8,549.0 113.0,549.1 116.2,549.2 119.5,549.4 122.8,549.5 126.1,549.6 129.4,549.8 132.7,549.9 136.1,550.0 139.5,550.2 142.9,550.3 146.3,550.4 149.8,550.6 153.2,550.7 156.7,550.8 160.1,551.0 163.6,551.1 167.0,551.2 170.5,551.4 173.9,551.5 177.3,551.6 180.7,551.8 184.1,551.9 187.5,552.0 190.9,552.2 194.2,552.3 197.6,552.4 200.8,552.5 204.1,552.6 207.3,552.7 210.5,552.9 213.7,553.0 216.8,553.1 219.8,553.2 222.9,553.3 225.8,553.4 228.7,553.5 231.6,553.6 234.4,553.7 237.2,553.7 239.9,553.8 242.5,553.9 245.0,554.0 247.5,554.0 250.0,554.1 254.1,554.2 258.1,554.3 262.1,554.4 265.9,554.4 269.7,554.5 273.4,554.5 277.0,554.5 280.6,554.6 284.1,554.6 287.5,554.6 290.8,554.6 294.1,554.6 297.3,554.6 300.4,554.6 303.5,554.6 306.6,554.5 309.6,554.5 312.5,554.5 315.4,554.5 318.3,554.5 321.1,554.4 323.8,554.4 326.6,554.4 329.3,554.4 331.9,554.4 334.6,554.4 337.2,554.4 339.8,554.4 342.3,554.4 344.9,554.4 347.4,554.4 349.9,554.5 352.5,554.5 355.0,554.6 357.5,554.6 359.9,554.7 363.8,554.8 367.5,555.0 371.0,555.2 374.5,555.3 377.8,555.5 381.0,555.7 384.1,556.0 387.2,556.2 390.2,556.4 393.1,556.7 395.9,556.9 398.8,557.2 401.6,557.4 404.3,557.7 407.1,558.0 409.8,558.3 412.6,558.5 415.4,558.8 418.2,559.1 421.0,559.3 423.9,559.6 426.9,559.8 429.9,560.1 432.7,560.3 435.3,560.6 437.6,560.8 439.7,561.1 441.7,561.3 443.5,561.6 445.3,561.9 447.0,562.1 448.8,562.4 450.6,562.7 452.5,562.9 454.6,563.2 456.9,563.4 459.4,563.7 462.2,564.0 465.3,564.2 468.8,564.5 472.7,564.8 477.1,565.0 481.9,565.3 487.3,565.6 493.3,565.8 499.9,566.1 501.9,566.2 503.9,566.2 506.0,566.3 508.1,566.4 510.2,566.5 512.4,566.5 514.7,566.6 517.0,566.7 519.3,566.7 521.7,566.8 524.1,566.9 526.6,566.9 529.1,567.0 531.6,567.1 534.2,567.1 536.8,567.2 539.5,567.3 542.2,567.3 544.9,567.4 547.7,567.5 550.5,567.5 553.3,567.6 556.2,567.7 559.1,567.7 562.0,567.8 565.0,567.9 568.0,567.9 571.0,568.0 574.0,568.1 577.1,568.1 580.1,568.2 583.3,568.3 586.4,568.3 589.5,568.4 592.7,568.5 595.9,568.5 599.1,568.6 602.3,568.7 605.6,568.7 608.8,568.8 612.1,568.9 615.4,568.9 618.7,569.0 622.0,569.1 625.3,569.2 628.6,569.2 631.9,569.3 635.3,569.4 638.6,569.4 642.0,569.5 645.4,569.6 648.7,569.6 652.1,569.7 655.5,569.8 658.8,569.9 662.2,569.9 665.6,570.0 669.0,570.1 672.3,570.1 675.7,570.2 679.1,570.3 682.4,570.4 685.8,570.4 689.1,570.5 692.4,570.6 695.8,570.7 699.1,570.8 702.4,570.8 705.7,570.9 708.9,571.0 712.2,571.1 715.5,571.2 718.7,571.2 721.9,571.3 725.1,571.4 728.3,571.5 731.4,571.6 734.6,571.7 737.7,571.7 740.8,571.8 743.9,571.9 746.9,572.0 750.0,572.1 753.0,572.2 756.0,572.3 759.1,572.4 762.3,572.5 765.4,572.6 768.6,572.7 771.8,572.8 775.1,572.9 778.4,573.0 781.7,573.1 785.0,573.2 788.3,573.3 791.7,573.4 795.1,573.5 798.5,573.7 801.9,573.8 805.3,573.9 808.8,574.0 812.2,574.1 815.7,574.3 819.2,574.4 822.7,574.5 826.2,574.6 829.7,574.7 833.2,574.9 836.7,575.0 840.2,575.1 843.7,575.3 847.2,575.4 850.7,575.5 854.2,575.6 857.7,575.8 861.2,575.9 864.7,576.0 868.2,576.1 871.7,576.3 875.2,576.4 878.6,576.5 882.0,576.7 885.5,576.8 888.9,576.9 892.3,577.0 895.6,577.2 899.0,577.3 902.3,577.4 905.6,577.5 908.9,577.7 912.1,577.8 915.4,577.9 918.6,578.0 921.7,578.1 924.9,578.3 928.0,578.4 931.1,578.5 934.1,578.6 937.1,578.7 940.1,578.8 943.0,579.0 945.9,579.1 948.8,579.2 951.6,579.3 954.3,579.4 957.1,579.5 959.7,579.6 962.3,579.7 964.9,579.8 967.4,579.9 969.9,580.0 972.3,580.1 974.7,580.2 977.0,580.2 979.3,580.3 981.5,580.4 983.6,580.5 985.7,580.6 987.7,580.6 989.6,580.7 991.5,580.8 993.4,580.9 995.1,580.9 996.8,581.0 998.4,581.0 999.9,581.1" stroke="#ff0000" stroke-width="1.00" /><polyline points="4.9,548.1 6.4,548.1 7.9,548.1 9.4,548.2 10.9,548.2 12.5,548.2 14.2,548.2 16.1,548.2 18.2,548.2 20.6,548.3 23.2,548.3 26.2,548.4 29.5,548.4 33.3,548.5 37.5,548.6 42.3,548.7 47.5,548.9 53.4,549.1 59.9,549.3 61.9,549.4 63.9,549.4 66.1,549.5 68.3,549.6 70.6,549.7 73.0,549.8 75.5,549.9 78.0,550.0 80.6,550.0 83.3,550.2 86.0,550.3 88.8,550.4 91.6,550.5 94.5,550.6 97.5,550.7 100.5,550.8 103.5,550.9 106.6,551.1 109.8,551.2 112.9,551.3 116.1,551.4 119.4,551.6 122.7,551.7 126.0,551.8 129.3,552.0 132.7,552.1 136.0,552.2 139.4,552.4 142.8,552.5 146.3,552.6 149.7,552.8 153.1,552.9 156.6,553.0 160.0,553.2 163.5,553.3 166.9,553.4 170.4,553.6 173.8,553.7 177.2,553.8 180.7,554.0 184.1,554.1 187.5,554.2 190.8,554.3 194.2,554.5 197.5,554.6 200.8,554.7 204.0,554.8 207.2,554.9 210.4,555.1 213.6,555.2 216.7,555.3 219.8,555.4 222.8,555.5 225.8,555.6 228.7,555.7 231.5,555.8 234.4,555.9 237.1,555.9 239.8,556.0 242.4,556.1 245.0,556.2 247.5,556.2 249.9,556.3 254.0,556.4 258.1,556.5 262.0,556.6 265.9,556.6 269.7,556.7 273.4,556.7 277.0,556.7 280.6,556.8 284.0,556.8 287.5,556.8 290.8,556.8 294.1,556.8 297.3,556.8 300.5,556.8 303.6,556.8 306.6,556.7 309.6,556.7 312.5,556.7 315.4,556.7 318.3,556.7 321.1,556.6 323.8,556.6 326.6,556.6 329.3,556.6 331.9,556.6 334.6,556.6 337.2,556.6 339.8,556.6 342.3,556.6 344.9,556.6 347.4,556.6 349.9,556.7 352.4,556.7 354.9,556.8 357.4,556.8 359.9,556.9 363.7,557.0 367.4,557.2 370.9,557.4 374.3,557.5 377.6,557.7 380.9,557.9 384.0,558.2 387.0,558.4 390.0,558.6 392.9,558.9 395.7,559.1 398.6,559.4 401.3,559.6 404.1,559.9 406.9,560.2 409.6,560.4 412.4,560.7 415.2,561.0 418.0,561.2 420.8,561.5 423.7,561.8 426.7,562.0 429.7,562.3 432.5,562.5 435.1,562.8 437.4,563.0 439.5,563.3 441.4,563.5 443.2,563.8 444.9,564.0 446.7,564.3 448.5,564.6 450.3,564.8 452.2,565.1 454.3,565.4 456.6,565.6 459.2,565.9 462.0,566.2 465.1,566.4 468.6,566.7 472.6,567.0 476.9,567.2 481.8,567.5 487.2,567.8 493.2,568.0 499.9,568.3 501.8,568.4 503.8,568.4 505.9,568.5 508.0,568.6 510.1,568.7 512.4,568.7 514.6,568.8 516.9,568.9 519.2,568.9 521.6,569.0 524.1,569.1 526.5,569.1 529.0,569.2 531.6,569.3 534.2,569.3 536.8,569.4 539.5,569.5 542.2,569.5 544.9,569.6 547.7,569.7 550.5,569.7 553.3,569.8 556.2,569.9 559.1,569.9 562.0,570.0 564.9,570.1 567.9,570.1 570.9,570.2 574.0,570.3 577.0,570.3 580.1,570.4 583.2,570.5 586.3,570.5 589.5,570.6 592.6,570.7 595.8,570.7 599.0,570.8 602.3,570.9 605.5,570.9 608.8,571.0 612.0,571.1 615.3,571.1 618.6,571.2 621.9,571.3 625.2,571.4 628.6,571.4 631.9,571.5 635.2,571.6 638.6,571.6 642.0,571.7 645.3,571.8 648.7,571.8 652.1,571.9 655.4,572.0 658.8,572.1 662.2,572.1 665.5,572.2 668.9,572.3 672.3,572.3 675.6,572.4 679.0,572.5 682.4,572.6 685.7,572.6 689.0,572.7 692.4,572.8 695.7,572.9 699.0,573.0 702.3,573.0 705.6,573.1 708.9,573.2 712.2,573.3 715.4,573.4 718.6,573.4 721.8,573.5 725.0,573.6 728.2,573.7 731.4,573.8 734.5,573.9 737.6,573.9 740.7,574.0 743.8,574.1 746.9,574.2 749.9,574.3 752.9,574.4 756.0,574.5 759.1,574.6 762.2,574.7 765.4,574.8 768.6,574.9 771.8,575.0 775.0,575.1 778.3,575.2 781.6,575.3 784.9,575.4 788.3,575.5 791.6,575.6 795.0,575.7 798.4,575.9 801.8,576.0 805.2,576.1 808.7,576.2 812.1,576.3 815.6,576.5 819.1,576.6 822.6,576.7 826.1,576.8 829.6,576.9 833.1,577.1 836.6,577.2 840.1,577.3 843.6,577.5 847.1,577.6 850.7,577.7 854.2,577.8 857.7,578.0 861.2,578.1 864.7,578.2 868.1,578.3 871.6,578.5 875.1,578.6 878.5,578.7 882.0,578.9 885.4,579.0 888.8,579.1 892.2,579.2 895.5,579.4 898.9,579.5 902.2,579.6 905.5,579.7 908.8,579.9 912.1,580.0 915.3,580.1 918.5,580.2 921.7,580.3 924.8,580.5 927.9,580.6 931.0,580.7 934.0,580.8 937.0,580.9 940.0,581.0 942.9,581.2 945.8,581.3 948.7,581.4 951.5,581.5 954.2,581.6 957.0,581.7 959.6,581.8 962.3,581.9 964.8,582.0 967.4,582.1 969.8,582.2 972.3,582.3 974.6,582.4 976.9,582.4 979.2,582.5 981.4,582.6 983.5,582.7 985.6,582.8 987.6,582.8 989.6,582.9 991.4,583.0 993.3,583.1 995.0,583.1 996.7,583.2 998.3,583.2 999.9,583.3" stroke="#4a4a4a" stroke-width="1.10" /><polyline points="300.5,557.0 303.6,557.0 306.6,556.9 309.6,556.9 312.5,556.9 315.4,556.9 318.3,556.9 321.1,556.8 323.9,556.8 326.6,556.8 329.3,556.8 331.9,556.8 334.6,556.8 337.2,556.8 339.8,556.8 342.3,556.8 344.9,556.8 347.4,556.8 349.9,556.9 352.4,556.9 354.9,557.0 357.4,557.0 359.9,557.1 363.7,557.2 367.4,557.4 370.9,557.6 374.3,557.7 377.6,557.9 380.8,558.1 384.0,558.4 387.0,558.6 390.0,558.8 392.9,559.1 395.7,559.3 398.5,559.6 401.3,559.8 404.1,560.1 406.8,560.4 409.6,560.6 412.4,560.9 415.1,561.2 417.9,561.4 420.8,561.7 423.7,562.0 426.7,562.2 429.7,562.5" stroke="#ff00ff" stroke-width="1.10" /><polyline points="5.0,555.9 8.3,556.0 11.6,556.0 15.0,556.0 18.3,556.0 21.6,556.1 24.9,556.1 28.2,556.2 31.6,556.2 34.9,556.3 38.2,556.4 41.5,556.5 44.8,556.6 48.1,556.7 51.5,556.8 54.8,556.9 58.1,557.0 61.4,557.1 64.7,557.2 68.0,557.3 71.4,557.5 74.7,557.6 78.0,557.7 81.3,557.8 84.6,558.0 87.9,558.1 91.3,558.2 94.6,558.3 97.9,558.5 101.2,558.6 104.5,558.7 107.8,558.9 111.2,559.0 114.5,559.1 117.8,559.3 121.1,559.4 124.4,559.5 127.7,559.7 131.1,559.8 134.4,559.9 137.7,560.1 141.0,560.2 144.3,560.3 147.6,560.5 151.0,560.6 154.3,560.7 157.6,560.9 160.9,561.0 164.2,561.1 167.5,561.3 170.9,561.4 174.2,561.5 177.5,561.6 180.8,561.8 184.1,561.9 187.4,562.0 190.8,562.2 194.1,562.3 197.4,562.4 200.7,562.5 204.0,562.7 207.3,562.8 210.7,562.9 214.0,563.0 217.3,563.2 220.6,563.3 223.9,563.4 227.3,563.5 230.6,563.7 233.9,563.8 237.2,563.9 240.5,564.0 243.8,564.1 247.2,564.2 250.5,564.3 253.8,564.4 257.1,564.5 260.4,564.6 263.7,564.7 267.1,564.8 270.4,564.8 273.7,564.9 277.0,565.0 280.3,565.1 283.7,565.1 287.0,565.2 290.3,565.2 293.6,565.3 296.9,565.3 300.2,565.4 303.6,565.4 306.9,565.4 310.2,565.5 313.5,565.5 316.8,565.6 320.2,565.6 323.5,565.6 326.8,565.7 330.1,565.7 333.4,565.7 336.8,565.8 340.1,565.9 343.4,565.9 346.7,566.0 350.0,566.1 353.3,566.1 356.7,566.2 360.0,566.3 363.3,566.5 366.6,566.6 369.9,566.7 373.2,566.9 376.6,567.1 379.9,567.2 383.2,567.4 386.5,567.6 389.8,567.8 393.1,568.0 396.4,568.2 399.7,568.4 403.1,568.7 406.4,568.9 409.7,569.1 413.0,569.4 416.3,569.6 419.6,569.9 422.9,570.1 426.2,570.3 429.5,570.5 432.9,570.7 436.2,571.0 439.5,571.2 442.8,571.5 446.1,571.8 449.4,572.1 452.7,572.4 456.0,572.7 459.3,572.9 462.6,573.1 465.9,573.3 469.2,573.5 472.5,573.7 475.9,573.9 479.2,574.0 482.5,574.2 485.8,574.3 489.1,574.5 492.4,574.6 495.8,574.7 499.1,574.9 502.4,575.0 505.7,575.1 509.0,575.2 512.3,575.4 515.7,575.5 519.0,575.6 522.3,575.7 525.6,575.8 528.9,575.9 532.2,576.1 535.6,576.2 538.9,576.3 542.2,576.4 545.5,576.5 548.8,576.6 552.1,576.7 555.5,576.8 558.8,576.9 562.1,577.0 565.4,577.1 568.7,577.2 572.0,577.3 575.4,577.5 578.7,577.6 582.0,577.7 585.3,577.8 588.6,577.9 592.0,578.0 595.3,578.1 598.6,578.2 601.9,578.3 605.2,578.4 608.5,578.5 611.9,578.6 615.2,578.7 618.5,578.8 621.8,578.9 625.1,579.0 628.4,579.1 631.8,579.2 635.1,579.3 638.4,579.4 641.7,579.5 645.0,579.6 648.4,579.7 651.7,579.8 655.0,579.9 658.3,580.0 661.6,580.1 664.9,580.2 668.3,580.3 671.6,580.4 674.9,580.5 678.2,580.6 681.5,580.7 684.8,580.8 688.2,580.9 691.5,581.0 694.8,581.1 698.1,581.2 701.4,581.4 704.7,581.5 708.1,581.6 711.4,581.7 714.7,581.8 718.0,581.9 721.3,582.0 724.7,582.1 728.0,582.2 731.3,582.3 734.6,582.4 737.9,582.5 741.2,582.6 744.6,582.7 747.9,582.8 751.2,582.9 754.5,583.0 757.8,583.2 761.1,583.3 764.5,583.4 767.8,583.5 771.1,583.6 774.4,583.7 777.7,583.8 781.1,583.9 784.4,584.0 787.7,584.1 791.0,584.3 794.3,584.4 797.6,584.5 801.0,584.6 804.3,584.7 807.6,584.8 810.9,584.9 814.2,585.0 817.5,585.1 820.9,585.3 824.2,585.4 827.5,585.5 830.8,585.6 834.1,585.7 837.4,585.8 840.8,585.9 844.1,586.0 847.4,586.1 850.7,586.3 854.0,586.4 857.4,586.5 860.7,586.6 864.0,586.7 867.3,586.8 870.6,586.9 873.9,587.0 877.3,587.1 880.6,587.3 883.9,587.4 887.2,587.5 890.5,587.6 893.8,587.7 897.2,587.8 900.5,587.9 903.8,588.0 907.1,588.2 910.4,588.3 913.7,588.4 917.1,588.5 920.4,588.6 923.7,588.7 927.0,588.8 930.3,588.9 933.7,589.1 937.0,589.2 940.3,589.3 943.6,589.4 946.9,589.5 950.2,589.6 953.6,589.7 956.9,589.8 960.2,590.0 963.5,590.1 966.8,590.2 970.1,590.3 973.5,590.4 976.8,590.5 980.1,590.6 983.4,590.7 986.7,590.9 990.0,591.0 993.4,591.1 996.7,591.2 1000.0,591.3" stroke="#ffff00" stroke-width="1.30" /><polyline points="5.0,566.0 6.5,566.0 8.0,566.0 9.4,566.0 10.9,566.0 12.5,566.0 14.3,566.0 16.2,566.0 18.3,566.0 20.6,566.0 23.3,566.1 26.3,566.1 29.6,566.1 33.4,566.2 37.6,566.3 42.4,566.4 47.7,566.6 53.5,566.8 60.0,567.0 62.0,567.1 64.1,567.1 66.2,567.2 68.5,567.3 70.8,567.4 73.2,567.5 75.6,567.6 78.2,567.7 80.8,567.8 83.4,567.9 86.2,568.0 88.9,568.1 91.8,568.2 94.7,568.3 97.6,568.4 100.6,568.5 103.7,568.7 106.8,568.8 109.9,568.9 113.1,569.0 116.3,569.2 119.5,569.3 122.8,569.4 126.1,569.6 129.5,569.7 132.8,569.8 136.2,570.0 139.6,570.1 143.0,570.2 146.4,570.4 149.8,570.5 153.3,570.7 156.7,570.8 160.2,570.9 163.6,571.1 167.1,571.2 170.5,571.4 174.0,571.5 177.4,571.6 180.8,571.8 184.2,571.9 187.6,572.1 191.0,572.2 194.3,572.3 197.6,572.5 200.9,572.6 204.2,572.7 207.4,572.9 210.6,573.0 213.7,573.1 216.8,573.2 219.9,573.3 222.9,573.5 225.9,573.6 228.8,573.7 231.7,573.8 234.5,573.9 237.2,574.0 239.9,574.1 242.5,574.2 245.1,574.3 247.6,574.4 250.0,574.5 254.1,574.6 258.1,574.8 262.1,574.9 265.9,575.1 269.6,575.2 273.3,575.3 276.9,575.4 280.4,575.5 283.8,575.7 287.2,575.8 290.5,575.9 293.7,576.0 296.9,576.1 300.0,576.2 303.0,576.2 306.0,576.3 309.0,576.4 311.9,576.5 314.7,576.6 317.6,576.7 320.3,576.8 323.1,576.8 325.8,576.9 328.5,577.0 331.2,577.1 333.8,577.1 336.5,577.2 339.1,577.3 341.7,577.4 344.3,577.5 346.9,577.6 349.5,577.6 352.1,577.7 354.7,577.8 357.4,577.9 360.0,578.0 363.6,578.1 367.2,578.3 370.7,578.4 374.2,578.5 377.6,578.7 380.9,578.8 384.2,579.0 387.5,579.1 390.7,579.2 393.9,579.4 397.0,579.5 400.1,579.6 403.1,579.8 406.1,579.9 409.1,580.0 412.1,580.2 415.0,580.3 417.8,580.4 420.7,580.6 423.5,580.7 426.3,580.8 429.1,580.9 431.8,581.1 434.6,581.2 437.3,581.3 440.0,581.4 443.2,581.5 446.0,581.6 448.3,581.7 450.2,581.8 452.0,581.9 453.5,581.9 454.9,582.0 456.3,582.0 457.8,582.1 459.4,582.1 461.2,582.2 463.3,582.3 465.7,582.4 468.7,582.5 472.1,582.6 476.2,582.8 480.9,582.9 486.4,583.2 492.7,583.4 500.0,583.7 501.9,583.8 503.8,583.9 505.8,583.9 507.9,584.0 510.0,584.1 512.2,584.2 514.4,584.3 516.6,584.4 518.9,584.5 521.3,584.6 523.7,584.7 526.1,584.8 528.6,584.9 531.1,585.0 533.7,585.1 536.3,585.2 538.9,585.3 541.6,585.4 544.3,585.5 547.1,585.6 549.8,585.7 552.7,585.9 555.5,586.0 558.4,586.1 561.3,586.2 564.3,586.3 567.3,586.5 570.3,586.6 573.3,586.7 576.4,586.8 579.4,587.0 582.6,587.1 585.7,587.2 588.8,587.4 592.0,587.5 595.2,587.6 598.4,587.8 601.7,587.9 604.9,588.0 608.2,588.2 611.5,588.3 614.8,588.4 618.1,588.6 621.4,588.7 624.7,588.8 628.1,589.0 631.4,589.1 634.8,589.2 638.2,589.4 641.6,589.5 644.9,589.7 648.3,589.8 651.7,589.9 655.1,590.1 658.5,590.2 661.9,590.3 665.3,590.5 668.7,590.6 672.1,590.7 675.4,590.9 678.8,591.0 682.2,591.1 685.6,591.3 688.9,591.4 692.3,591.5 695.6,591.7 699.0,591.8 702.3,591.9 705.6,592.1 708.9,592.2 712.2,592.3 715.4,592.4 718.7,592.5 721.9,592.7 725.1,592.8 728.3,592.9 731.5,593.0 734.6,593.1 737.7,593.3 740.8,593.4 743.9,593.5 747.0,593.6 750.0,593.7 753.0,593.8 756.1,593.9 759.2,594.0 762.3,594.1 765.5,594.2 768.7,594.4 771.9,594.5 775.1,594.6 778.4,594.7 781.7,594.8 785.0,594.9 788.4,595.0 791.7,595.1 795.1,595.2 798.5,595.3 801.9,595.5 805.4,595.6 808.8,595.7 812.3,595.8 815.8,595.9 819.2,596.0 822.7,596.1 826.2,596.2 829.7,596.3 833.2,596.5 836.7,596.6 840.2,596.7 843.8,596.8 847.3,596.9 850.8,597.0 854.3,597.1 857.8,597.2 861.3,597.3 864.8,597.4 868.3,597.5 871.7,597.7 875.2,597.8 878.7,597.9 882.1,598.0 885.5,598.1 888.9,598.2 892.3,598.3 895.7,598.4 899.0,598.5 902.4,598.6 905.7,598.7 909.0,598.8 912.2,598.9 915.4,599.0 918.6,599.1 921.8,599.2 925.0,599.3 928.1,599.3 931.1,599.4 934.2,599.5 937.2,599.6 940.2,599.7 943.1,599.8 946.0,599.9 948.8,600.0 951.6,600.0 954.4,600.1 957.1,600.2 959.8,600.3 962.4,600.4 965.0,600.4 967.5,600.5 970.0,600.6 972.4,600.7 974.8,600.7 977.1,600.8 979.3,600.9 981.5,600.9 983.7,601.0 985.7,601.1 987.8,601.1 989.7,601.2 991.6,601.2 993.4,601.3 995.2,601.4 996.8,601.4 998.5,601.5 1000.0,601.5" stroke="#5b6b2a" stroke-width="1.10" /><polyline points="5.0,564.5 6.5,564.5 8.0,564.5 9.4,564.5 10.9,564.5 12.5,564.5 14.3,564.5 16.2,564.5 18.3,564.5 20.6,564.5 23.3,564.6 26.3,564.6 29.7,564.6 33.4,564.7 37.7,564.8 42.4,564.9 47.7,565.1 53.6,565.3 60.1,565.5 62.0,565.6 64.1,565.6 66.3,565.7 68.5,565.8 70.8,565.9 73.2,566.0 75.7,566.1 78.2,566.2 80.8,566.3 83.5,566.4 86.2,566.5 89.0,566.6 91.8,566.7 94.7,566.8 97.7,566.9 100.7,567.0 103.7,567.2 106.8,567.3 110.0,567.4 113.1,567.5 116.4,567.7 119.6,567.8 122.9,567.9 126.2,568.1 129.5,568.2 132.9,568.3 136.2,568.5 139.6,568.6 143.0,568.7 146.5,568.9 149.9,569.0 153.3,569.2 156.8,569.3 160.2,569.4 163.7,569.6 167.1,569.7 170.6,569.9 174.0,570.0 177.5,570.1 180.9,570.3 184.3,570.4 187.7,570.6 191.0,570.7 194.4,570.8 197.7,571.0 201.0,571.1 204.2,571.2 207.4,571.4 210.6,571.5 213.8,571.6 216.9,571.7 219.9,571.8 223.0,572.0 225.9,572.1 228.9,572.2 231.7,572.3 234.5,572.4 237.3,572.5 240.0,572.6 242.6,572.7 245.1,572.8 247.6,572.9 250.1,573.0 254.2,573.2 258.2,573.3 262.1,573.4 266.0,573.6 269.7,573.7 273.4,573.8 276.9,573.9 280.4,574.0 283.9,574.2 287.2,574.3 290.5,574.4 293.7,574.5 296.9,574.6 300.0,574.7 303.1,574.7 306.1,574.8 309.0,574.9 311.9,575.0 314.8,575.1 317.6,575.2 320.4,575.3 323.1,575.3 325.9,575.4 328.6,575.5 331.2,575.6 333.9,575.6 336.5,575.7 339.2,575.8 341.8,575.9 344.4,576.0 347.0,576.1 349.6,576.1 352.2,576.2 354.8,576.3 357.4,576.4 360.1,576.5 363.7,576.6 367.2,576.8 370.8,576.9 374.2,577.0 377.6,577.2 381.0,577.3 384.3,577.5 387.5,577.6 390.8,577.7 393.9,577.9 397.1,578.0 400.1,578.1 403.2,578.3 406.2,578.4 409.2,578.5 412.1,578.7 415.0,578.8 417.9,578.9 420.8,579.1 423.6,579.2 426.4,579.3 429.2,579.4 431.9,579.6 434.6,579.7 437.4,579.8 440.1,579.9 443.3,580.0 446.0,580.1 448.3,580.2 450.3,580.3 452.0,580.4 453.5,580.4 455.0,580.5 456.4,580.5 457.8,580.6 459.4,580.6 461.2,580.7 463.3,580.8 465.8,580.9 468.7,581.0 472.2,581.1 476.2,581.3 481.0,581.4 486.5,581.7 492.8,581.9 500.1,582.2 502.0,582.3 503.9,582.4 505.9,582.4 508.0,582.5 510.1,582.6 512.2,582.7 514.4,582.8 516.7,582.9 519.0,583.0 521.3,583.1 523.7,583.2 526.2,583.3 528.6,583.4 531.2,583.5 533.7,583.6 536.3,583.7 539.0,583.8 541.6,583.9 544.4,584.0 547.1,584.1 549.9,584.2 552.7,584.4 555.6,584.5 558.5,584.6 561.4,584.7 564.3,584.8 567.3,585.0 570.3,585.1 573.4,585.2 576.4,585.3 579.5,585.5 582.6,585.6 585.8,585.7 588.9,585.9 592.1,586.0 595.3,586.1 598.5,586.3 601.7,586.4 605.0,586.5 608.3,586.7 611.5,586.8 614.8,586.9 618.1,587.1 621.5,587.2 624.8,587.3 628.2,587.5 631.5,587.6 634.9,587.7 638.2,587.9 641.6,588.0 645.0,588.2 648.4,588.3 651.8,588.4 655.2,588.6 658.6,588.7 662.0,588.8 665.3,589.0 668.7,589.1 672.1,589.2 675.5,589.4 678.9,589.5 682.3,589.6 685.6,589.8 689.0,589.9 692.3,590.0 695.7,590.2 699.0,590.3 702.3,590.4 705.6,590.6 708.9,590.7 712.2,590.8 715.5,590.9 718.7,591.0 722.0,591.2 725.2,591.3 728.4,591.4 731.5,591.5 734.7,591.6 737.8,591.8 740.9,591.9 744.0,592.0 747.0,592.1 750.1,592.2 753.1,592.3 756.1,592.4 759.2,592.5 762.4,592.6 765.5,592.7 768.7,592.9 771.9,593.0 775.2,593.1 778.5,593.2 781.8,593.3 785.1,593.4 788.4,593.5 791.8,593.6 795.2,593.7 798.6,593.8 802.0,594.0 805.4,594.1 808.9,594.2 812.3,594.3 815.8,594.4 819.3,594.5 822.8,594.6 826.3,594.7 829.8,594.8 833.3,595.0 836.8,595.1 840.3,595.2 843.8,595.3 847.3,595.4 850.8,595.5 854.3,595.6 857.8,595.7 861.3,595.8 864.8,595.9 868.3,596.0 871.8,596.2 875.3,596.3 878.7,596.4 882.1,596.5 885.6,596.6 889.0,596.7 892.4,596.8 895.7,596.9 899.1,597.0 902.4,597.1 905.7,597.2 909.0,597.3 912.3,597.4 915.5,597.5 918.7,597.6 921.9,597.7 925.0,597.8 928.1,597.8 931.2,597.9 934.2,598.0 937.2,598.1 940.2,598.2 943.1,598.3 946.0,598.4 948.9,598.5 951.7,598.5 954.4,598.6 957.2,598.7 959.8,598.8 962.5,598.9 965.0,598.9 967.6,599.0 970.0,599.1 972.4,599.2 974.8,599.2 977.1,599.3 979.4,599.4 981.6,599.4 983.7,599.5 985.8,599.6 987.8,599.6 989.8,599.7 991.6,599.7 993.5,599.8 995.2,599.9 996.9,599.9 998.5,600.0 1000.0,600.0" stroke="#ff00ff" stroke-width="1.00" /><polyline points="5.0,563.0 6.5,563.0 8.0,563.0 9.4,563.0 10.9,563.0 12.5,563.0 14.3,563.0 16.2,563.0 18.3,563.0 20.6,563.0 23.3,563.1 26.3,563.1 29.7,563.1 33.5,563.2 37.7,563.3 42.5,563.4 47.8,563.6 53.6,563.8 60.1,564.0 62.1,564.1 64.2,564.1 66.3,564.2 68.6,564.3 70.9,564.4 73.3,564.5 75.7,564.6 78.3,564.7 80.9,564.8 83.5,564.9 86.3,565.0 89.1,565.1 91.9,565.2 94.8,565.3 97.8,565.4 100.8,565.5 103.8,565.7 106.9,565.8 110.0,565.9 113.2,566.0 116.4,566.2 119.7,566.3 122.9,566.4 126.2,566.6 129.6,566.7 132.9,566.8 136.3,567.0 139.7,567.1 143.1,567.2 146.5,567.4 150.0,567.5 153.4,567.7 156.9,567.8 160.3,567.9 163.8,568.1 167.2,568.2 170.7,568.4 174.1,568.5 177.5,568.6 180.9,568.8 184.3,568.9 187.7,569.1 191.1,569.2 194.4,569.3 197.7,569.5 201.0,569.6 204.3,569.7 207.5,569.9 210.7,570.0 213.8,570.1 216.9,570.2 220.0,570.3 223.0,570.5 226.0,570.6 228.9,570.7 231.8,570.8 234.6,570.9 237.3,571.0 240.0,571.1 242.6,571.2 245.2,571.3 247.7,571.4 250.1,571.5 254.2,571.7 258.2,571.8 262.2,571.9 266.0,572.1 269.7,572.2 273.4,572.3 277.0,572.4 280.5,572.6 283.9,572.7 287.3,572.8 290.6,572.9 293.8,573.0 297.0,573.1 300.1,573.2 303.1,573.2 306.1,573.3 309.1,573.4 312.0,573.5 314.8,573.6 317.6,573.7 320.4,573.8 323.2,573.8 325.9,573.9 328.6,574.0 331.3,574.1 333.9,574.1 336.6,574.2 339.2,574.3 341.8,574.4 344.4,574.5 347.0,574.6 349.6,574.6 352.2,574.7 354.9,574.8 357.5,574.9 360.1,575.0 363.7,575.1 367.3,575.3 370.8,575.4 374.3,575.5 377.7,575.7 381.0,575.8 384.4,576.0 387.6,576.1 390.8,576.2 394.0,576.4 397.1,576.5 400.2,576.6 403.3,576.8 406.3,576.9 409.2,577.0 412.2,577.2 415.1,577.3 418.0,577.4 420.8,577.6 423.7,577.7 426.5,577.8 429.2,577.9 432.0,578.1 434.7,578.2 437.4,578.3 440.1,578.4 443.3,578.5 446.1,578.6 448.4,578.7 450.4,578.8 452.1,578.9 453.6,578.9 455.0,579.0 456.4,579.0 457.9,579.1 459.5,579.1 461.3,579.2 463.4,579.3 465.9,579.4 468.8,579.5 472.2,579.6 476.3,579.8 481.0,580.0 486.5,580.2 492.9,580.4 500.1,580.7 502.0,580.8 504.0,580.9 506.0,580.9 508.0,581.0 510.1,581.1 512.3,581.2 514.5,581.3 516.7,581.4 519.0,581.5 521.4,581.6 523.8,581.7 526.2,581.8 528.7,581.9 531.2,582.0 533.8,582.1 536.4,582.2 539.0,582.3 541.7,582.4 544.4,582.5 547.2,582.6 550.0,582.7 552.8,582.9 555.6,583.0 558.5,583.1 561.5,583.2 564.4,583.3 567.4,583.5 570.4,583.6 573.4,583.7 576.5,583.8 579.6,584.0 582.7,584.1 585.8,584.2 589.0,584.4 592.1,584.5 595.3,584.6 598.6,584.8 601.8,584.9 605.0,585.0 608.3,585.2 611.6,585.3 614.9,585.4 618.2,585.6 621.5,585.7 624.9,585.8 628.2,586.0 631.6,586.1 634.9,586.2 638.3,586.4 641.7,586.5 645.1,586.7 648.4,586.8 651.8,586.9 655.2,587.1 658.6,587.2 662.0,587.3 665.4,587.5 668.8,587.6 672.2,587.7 675.6,587.9 678.9,588.0 682.3,588.1 685.7,588.3 689.0,588.4 692.4,588.5 695.7,588.7 699.1,588.8 702.4,588.9 705.7,589.1 709.0,589.2 712.3,589.3 715.5,589.4 718.8,589.6 722.0,589.7 725.2,589.8 728.4,589.9 731.6,590.0 734.7,590.1 737.9,590.3 741.0,590.4 744.0,590.5 747.1,590.6 750.1,590.7 753.1,590.8 756.2,590.9 759.3,591.0 762.4,591.1 765.6,591.2 768.8,591.4 772.0,591.5 775.2,591.6 778.5,591.7 781.8,591.8 785.1,591.9 788.5,592.0 791.8,592.1 795.2,592.2 798.6,592.3 802.0,592.5 805.5,592.6 808.9,592.7 812.4,592.8 815.8,592.9 819.3,593.0 822.8,593.1 826.3,593.2 829.8,593.3 833.3,593.5 836.8,593.6 840.3,593.7 843.9,593.8 847.4,593.9 850.9,594.0 854.4,594.1 857.9,594.2 861.4,594.3 864.9,594.4 868.4,594.5 871.8,594.7 875.3,594.8 878.8,594.9 882.2,595.0 885.6,595.1 889.0,595.2 892.4,595.3 895.8,595.4 899.1,595.5 902.5,595.6 905.8,595.7 909.0,595.8 912.3,595.9 915.5,596.0 918.7,596.1 921.9,596.2 925.0,596.3 928.2,596.3 931.2,596.4 934.3,596.5 937.3,596.6 940.2,596.7 943.2,596.8 946.1,596.9 948.9,597.0 951.7,597.0 954.5,597.1 957.2,597.2 959.9,597.3 962.5,597.4 965.1,597.4 967.6,597.5 970.1,597.6 972.5,597.7 974.9,597.7 977.2,597.8 979.4,597.9 981.6,597.9 983.8,598.0 985.8,598.1 987.8,598.1 989.8,598.2 991.7,598.2 993.5,598.3 995.3,598.4 996.9,598.4 998.6,598.5 1000.1,598.5" stroke="#ffff00" stroke-width="1.30" /><polyline points="5.1,561.0 6.5,561.0 8.0,561.0 9.4,561.0 10.9,561.0 12.5,561.0 14.2,561.0 16.2,561.0 18.3,561.0 20.7,561.0 23.3,561.1 26.3,561.1 29.7,561.1 33.5,561.2 37.8,561.3 42.5,561.4 47.8,561.6 53.7,561.8 60.2,562.0 62.2,562.1 64.2,562.1 66.4,562.2 68.6,562.3 71.0,562.4 73.3,562.5 75.8,562.6 78.3,562.7 80.9,562.8 83.6,562.9 86.3,563.0 89.1,563.1 92.0,563.2 94.9,563.3 97.8,563.4 100.8,563.5 103.9,563.7 107.0,563.8 110.1,563.9 113.3,564.0 116.5,564.2 119.7,564.3 123.0,564.4 126.3,564.6 129.7,564.7 133.0,564.8 136.4,565.0 139.8,565.1 143.2,565.2 146.6,565.4 150.0,565.5 153.5,565.7 156.9,565.8 160.4,565.9 163.8,566.1 167.3,566.2 170.7,566.4 174.2,566.5 177.6,566.6 181.0,566.8 184.4,566.9 187.8,567.1 191.2,567.2 194.5,567.3 197.8,567.5 201.1,567.6 204.4,567.7 207.6,567.9 210.8,568.0 213.9,568.1 217.0,568.2 220.1,568.4 223.1,568.5 226.1,568.6 229.0,568.7 231.9,568.8 234.7,568.9 237.4,569.0 240.1,569.1 242.7,569.2 245.3,569.3 247.8,569.4 250.2,569.5 254.3,569.7 258.3,569.8 262.2,569.9 266.1,570.1 269.8,570.2 273.5,570.3 277.1,570.4 280.6,570.6 284.0,570.7 287.3,570.8 290.6,570.9 293.9,571.0 297.0,571.1 300.1,571.2 303.2,571.2 306.2,571.3 309.1,571.4 312.0,571.5 314.9,571.6 317.7,571.7 320.5,571.8 323.2,571.8 326.0,571.9 328.7,572.0 331.3,572.1 334.0,572.1 336.6,572.2 339.3,572.3 341.9,572.4 344.5,572.5 347.1,572.6 349.7,572.6 352.3,572.7 354.9,572.8 357.5,572.9 360.2,573.0 363.8,573.1 367.4,573.3 370.9,573.4 374.4,573.5 377.8,573.7 381.1,573.8 384.4,574.0 387.7,574.1 390.9,574.2 394.1,574.4 397.2,574.5 400.3,574.6 403.3,574.8 406.4,574.9 409.3,575.0 412.3,575.2 415.2,575.3 418.1,575.4 420.9,575.6 423.7,575.7 426.5,575.8 429.3,575.9 432.1,576.1 434.8,576.2 437.5,576.3 440.2,576.4 443.4,576.5 446.2,576.6 448.5,576.7 450.4,576.8 452.1,576.9 453.7,576.9 455.1,577.0 456.5,577.0 458.0,577.1 459.6,577.1 461.4,577.2 463.5,577.3 465.9,577.4 468.9,577.5 472.3,577.6 476.4,577.8 481.1,578.0 486.6,578.2 492.9,578.4 500.2,578.7 502.1,578.8 504.0,578.9 506.0,578.9 508.1,579.0 510.2,579.1 512.4,579.2 514.6,579.3 516.8,579.4 519.1,579.5 521.5,579.6 523.9,579.7 526.3,579.8 528.8,579.9 531.3,580.0 533.9,580.1 536.5,580.2 539.1,580.3 541.8,580.4 544.5,580.5 547.3,580.6 550.0,580.7 552.9,580.9 555.7,581.0 558.6,581.1 561.5,581.2 564.5,581.3 567.5,581.5 570.5,581.6 573.5,581.7 576.6,581.8 579.7,582.0 582.8,582.1 585.9,582.2 589.1,582.4 592.2,582.5 595.4,582.6 598.6,582.8 601.9,582.9 605.1,583.0 608.4,583.2 611.7,583.3 615.0,583.4 618.3,583.6 621.6,583.7 625.0,583.8 628.3,584.0 631.6,584.1 635.0,584.2 638.4,584.4 641.8,584.5 645.1,584.7 648.5,584.8 651.9,584.9 655.3,585.1 658.7,585.2 662.1,585.3 665.5,585.5 668.9,585.6 672.3,585.7 675.6,585.9 679.0,586.0 682.4,586.1 685.8,586.3 689.1,586.4 692.5,586.5 695.8,586.7 699.2,586.8 702.5,586.9 705.8,587.1 709.1,587.2 712.3,587.3 715.6,587.4 718.9,587.6 722.1,587.7 725.3,587.8 728.5,587.9 731.7,588.0 734.8,588.1 737.9,588.3 741.0,588.4 744.1,588.5 747.2,588.6 750.2,588.7 753.2,588.8 756.3,588.9 759.4,589.0 762.5,589.1 765.7,589.2 768.8,589.4 772.1,589.5 775.3,589.6 778.6,589.7 781.9,589.8 785.2,589.9 788.5,590.0 791.9,590.1 795.3,590.2 798.7,590.4 802.1,590.5 805.5,590.6 809.0,590.7 812.4,590.8 815.9,590.9 819.4,591.0 822.9,591.1 826.4,591.2 829.9,591.4 833.4,591.5 836.9,591.6 840.4,591.7 843.9,591.8 847.4,591.9 850.9,592.0 854.5,592.1 858.0,592.2 861.5,592.3 864.9,592.4 868.4,592.5 871.9,592.7 875.4,592.8 878.8,592.9 882.3,593.0 885.7,593.1 889.1,593.2 892.5,593.3 895.8,593.4 899.2,593.5 902.5,593.6 905.8,593.7 909.1,593.8 912.4,593.9 915.6,594.0 918.8,594.1 922.0,594.2 925.1,594.3 928.2,594.3 931.3,594.4 934.3,594.5 937.3,594.6 940.3,594.7 943.2,594.8 946.1,594.9 949.0,595.0 951.8,595.0 954.5,595.1 957.3,595.2 959.9,595.3 962.6,595.4 965.1,595.4 967.7,595.5 970.1,595.6 972.6,595.7 974.9,595.7 977.2,595.8 979.5,595.9 981.7,595.9 983.8,596.0 985.9,596.1 987.9,596.1 989.9,596.2 991.7,596.2 993.6,596.3 995.3,596.4 997.0,596.4 998.6,596.5 1000.2,596.5" stroke="#4a4a4a" stroke-width="1.10" /><path d="M860.4 371.5L886.4 359.3M863.7 379.8L890.2 367.2M867.1 388.2L894.0 375.0M870.5 396.5L897.7 382.5M874.0 404.8L901.8 390.3M877.5 413.1L905.9 398.1M881.0 421.4L910.0 405.9M884.5 429.7L914.2 413.8M888.2 437.9L918.4 421.6M891.9 446.1L922.6 429.4M895.8 454.2L926.8 437.2M899.7 462.3L930.7 444.0M903.7 470.4L936.2 461.0" stroke="#ff0000" stroke-width="1.00"/><polyline points="871.7,362.1 872.1,363.1 872.6,364.4 873.2,365.9 873.9,367.5 874.6,369.2 875.3,371.1 876.1,373.1 876.9,375.1 877.8,377.3 878.7,379.5 879.6,381.8 880.5,384.0 881.5,386.3 882.4,388.7 883.4,390.9 884.3,393.2 885.0,394.9 885.7,396.6 886.5,398.4 887.3,400.2 888.0,402.1 888.8,404.0 889.6,405.9 890.5,407.8 891.3,409.8 892.1,411.8 892.9,413.7 893.8,415.7 894.6,417.7 895.5,419.6 896.3,421.6 897.1,423.5 898.0,425.4 898.8,427.3 899.6,429.1 900.3,430.9 901.1,432.6 901.9,434.2 902.8,436.2 903.7,438.3 904.7,440.4 905.7,442.5 906.7,444.6 907.7,446.7 908.7,448.7 909.7,450.7 910.6,452.7 911.6,454.7 912.5,456.5 913.4,458.3 914.2,460.0 915.0,461.5 915.7,463.0 916.3,464.3 916.9,465.5 917.4,466.5" stroke="#ff0000" stroke-width="0.90" /><polyline points="874.0,356.3 874.4,357.3 875.0,358.4 875.5,359.6 876.1,360.9 876.8,362.4 877.6,363.9 878.4,365.6 879.2,367.4 880.1,369.2 881.0,371.2 882.0,373.2 883.0,375.4 884.1,377.5 885.2,379.8 886.3,382.1 887.5,384.5 888.7,386.9 890.0,389.4 890.8,390.9 891.6,392.4 892.4,394.1 893.3,395.8 894.3,397.6 895.2,399.4 896.2,401.3 897.2,403.2 898.3,405.2 899.3,407.2 900.4,409.2 901.5,411.2 902.6,413.3 903.7,415.3 904.8,417.4 905.9,419.4 907.0,421.5 908.1,423.5 909.1,425.5 910.2,427.4 911.2,429.3 912.2,431.2 913.2,433.0 914.1,434.8 915.1,436.5 915.9,438.1 916.8,439.6 917.6,441.1 918.3,442.4 919.0,443.7 919.7,445.0 922.2,449.2 924.2,452.3 925.8,454.5 927.0,455.9 927.2,456.1 926.8,455.5 926.6,454.7 926.8,455.6 926.7,456.5 926.5,458.2 926.3,459.8" stroke="#ff0000" stroke-width="0.90" /><path d="M842.3 349.4L845.0 356.6M843.9 349.2L846.2 356.2M845.5 349.0L846.5 356.1M847.1 348.8L847.7 356.0M848.7 348.8L848.0 356.0M850.2 348.9L849.1 356.1M851.8 349.4L850.2 356.4M853.3 350.0L850.3 356.4M854.7 350.7L851.6 357.0M856.0 351.6L851.6 357.0M857.3 352.5L852.7 358.0M858.6 353.5L853.0 358.3M859.7 354.6L853.7 359.1M860.7 355.9L854.5 360.1M861.5 357.3L855.2 361.3M862.3 358.7L856.0 362.5M863.0 360.1L856.7 363.8M863.7 361.5L857.5 365.1M864.4 363.0L858.2 366.4M865.0 364.5L858.8 367.6M865.5 366.0L859.4 368.7M866.1 367.5L860.0 370.0" stroke="#ff0000" stroke-width="1.10"/><polyline points="841.5,349.5 842.3,349.4 843.5,349.2 844.8,349.1 846.3,348.9 847.8,348.8 849.3,348.8 850.6,349.0 851.8,349.4 853.1,349.9 854.3,350.5 855.5,351.2 856.7,352.0 857.7,352.8 858.7,353.6 859.7,354.6 860.5,355.7 861.2,356.8 861.9,358.0 862.6,359.2 863.2,360.4 863.8,361.6 864.3,362.9 864.9,364.2 865.4,365.5 865.8,366.7 866.2,367.8 866.5,368.5" stroke="#ffffff" stroke-width="1.20" /><polyline points="841.6,350.7 842.5,350.6 843.6,350.4 845.0,350.2 846.4,350.1 847.8,350.0 849.2,350.0 850.3,350.2 851.4,350.5 852.6,351.0 853.8,351.6 854.9,352.2 856.0,353.0 857.0,353.7 857.9,354.5 858.8,355.4 859.5,356.4 860.2,357.4 860.9,358.5 861.5,359.7 862.1,360.9 862.7,362.1 863.2,363.3 863.8,364.6 864.3,366.0 864.7,367.2 865.1,368.2 865.4,368.9" stroke="#ffff00" stroke-width="1.00" /><path d="M884.2 332.8L886.2 339.1M882.7 333.3L884.8 339.5M881.2 333.8L883.6 339.9M879.7 334.3L882.6 340.3M878.2 334.9L881.6 340.9M876.8 335.7L881.6 340.9M875.6 336.7L880.7 341.8M874.6 337.9L880.7 341.8M873.7 339.3L880.7 341.8M873.2 340.8L880.3 342.9M872.8 342.3L880.3 342.9M872.5 343.9L880.4 343.5M872.3 345.5L880.4 344.4M872.3 347.1L880.6 345.4M872.4 348.7L880.8 346.2" stroke="#ff0000" stroke-width="1.10"/><polyline points="885.0,332.5 884.3,332.8 883.2,333.1 882.0,333.5 880.6,333.9 879.2,334.5 877.9,335.0 876.7,335.7 875.8,336.4 875.0,337.3 874.3,338.3 873.7,339.4 873.2,340.5 872.9,341.7 872.6,343.0 872.4,344.4 872.3,345.5 872.3,346.8 872.4,348.1 872.5,349.4 872.7,350.8 872.9,352.1 873.1,353.4 873.3,354.7 873.6,355.8 874.0,357.2 874.5,358.6 875.1,360.0 875.7,361.2 876.2,362.3 876.7,363.3 877.0,364.0" stroke="#ffffff" stroke-width="1.20" /><polyline points="885.4,333.6 884.6,333.9 883.6,334.2 882.3,334.6 881.0,335.1 879.7,335.6 878.4,336.1 877.4,336.7 876.6,337.3 875.9,338.1 875.3,338.9 874.8,339.9 874.4,340.9 874.0,342.0 873.8,343.3 873.6,344.5 873.5,345.6 873.5,346.7 873.6,348.0 873.7,349.3 873.9,350.6 874.1,351.9 874.3,353.2 874.5,354.4 874.8,355.5 875.1,356.8 875.6,358.2 876.2,359.5 876.7,360.7 877.3,361.8 877.8,362.8 878.1,363.5" stroke="#ffff00" stroke-width="1.00" /><polyline points="858.7,367.3 859.1,368.4 859.6,369.6 860.2,371.1 860.9,372.7 861.6,374.4 862.3,376.3 863.1,378.3 863.9,380.4 864.8,382.5 865.7,384.7 866.6,387.0 867.6,389.3 868.5,391.7 869.5,394.0 870.4,396.3 871.4,398.6 872.1,400.3 872.8,402.0 873.6,403.8 874.3,405.6 875.1,407.5 875.9,409.4 876.7,411.3 877.6,413.3 878.4,415.3 879.2,417.2 880.1,419.2 880.9,421.2 881.8,423.2 882.6,425.2 883.4,427.1 884.3,429.1 885.1,431.0 885.9,432.9 886.7,434.7 887.5,436.5 888.3,438.3 889.1,440.0 890.0,442.1 891.0,444.2 892.0,446.3 893.0,448.5 894.0,450.6 895.1,452.7 896.1,454.8 897.1,456.9 898.1,458.9 899.0,460.8 899.9,462.7 900.8,464.5 901.6,466.2 902.4,467.7 903.1,469.2 903.8,470.5 904.3,471.6 904.8,472.6" stroke="#5b6b2a" stroke-width="1.00" /><polyline points="863.3,365.4 863.8,366.5 864.3,367.8 864.9,369.2 865.5,370.8 866.2,372.6 867.0,374.4 867.7,376.4 868.6,378.5 869.5,380.7 870.3,382.9 871.3,385.1 872.2,387.4 873.2,389.8 874.1,392.1 875.1,394.4 876.0,396.7 876.7,398.4 877.4,400.1 878.2,401.9 879.0,403.7 879.7,405.6 880.5,407.5 881.3,409.4 882.2,411.3 883.0,413.3 883.8,415.3 884.7,417.3 885.5,419.2 886.4,421.2 887.2,423.2 888.0,425.2 888.9,427.1 889.7,429.0 890.5,430.9 891.3,432.7 892.1,434.5 892.9,436.2 893.7,437.9 894.6,440.0 895.6,442.1 896.5,444.2 897.5,446.3 898.6,448.4 899.6,450.6 900.6,452.6 901.6,454.7 902.5,456.7 903.5,458.6 904.4,460.5 905.3,462.3 906.1,463.9 906.9,465.5 907.6,466.9 908.2,468.3 908.8,469.4 909.3,470.4" stroke="#ff00ff" stroke-width="1.20" /><polyline points="867.0,363.9 867.5,365.0 868.0,366.3 868.6,367.7 869.2,369.3 869.9,371.1 870.7,373.0 871.5,374.9 872.3,377.0 873.2,379.2 874.1,381.4 875.0,383.6 875.9,385.9 876.9,388.2 877.8,390.6 878.8,392.9 879.7,395.1 880.4,396.8 881.1,398.5 881.9,400.3 882.6,402.2 883.4,404.0 884.2,405.9 885.0,407.8 885.8,409.8 886.7,411.7 887.5,413.7 888.3,415.7 889.2,417.7 890.0,419.7 890.9,421.6 891.7,423.6 892.5,425.5 893.4,427.4 894.2,429.3 895.0,431.1 895.8,432.9 896.5,434.6 897.3,436.3 898.2,438.3 899.2,440.4 900.2,442.5 901.2,444.6 902.2,446.7 903.2,448.8 904.2,450.9 905.2,452.9 906.1,454.9 907.1,456.9 908.0,458.7 908.9,460.5 909.7,462.2 910.5,463.7 911.2,465.2 911.8,466.5 912.4,467.7 912.9,468.7" stroke="#ffff00" stroke-width="1.30" /><polyline points="868.2,363.5 868.6,364.6 869.1,365.8 869.7,367.3 870.3,368.9 871.0,370.6 871.8,372.5 872.6,374.5 873.4,376.6 874.3,378.7 875.2,380.9 876.1,383.2 877.0,385.5 878.0,387.8 878.9,390.1 879.9,392.4 880.8,394.7 881.5,396.3 882.2,398.1 883.0,399.9 883.7,401.7 884.5,403.6 885.3,405.5 886.1,407.4 887.0,409.3 887.8,411.3 888.6,413.3 889.5,415.2 890.3,417.2 891.1,419.2 892.0,421.1 892.8,423.1 893.6,425.0 894.5,426.9 895.3,428.8 896.1,430.6 896.9,432.4 897.6,434.1 898.4,435.8 899.3,437.8 900.3,439.9 901.2,442.0 902.2,444.1 903.2,446.2 904.3,448.3 905.3,450.4 906.2,452.4 907.2,454.4 908.2,456.3 909.1,458.2 910.0,460.0 910.8,461.6 911.6,463.2 912.3,464.6 912.9,466.0 913.5,467.1 914.0,468.1" stroke="#ffffff" stroke-width="1.00" /><polyline points="883.0,352.0 883.5,353.0 884.0,354.1 884.6,355.3 885.2,356.7 885.9,358.1 886.6,359.7 887.4,361.3 888.2,363.1 889.1,365.0 890.0,366.9 891.0,368.9 892.0,371.0 893.1,373.2 894.1,375.4 895.3,377.7 896.4,380.0 897.7,382.4 898.9,384.8 899.7,386.3 900.5,387.8 901.3,389.4 902.2,391.1 903.1,392.9 904.1,394.7 905.1,396.6 906.1,398.5 907.1,400.5 908.2,402.5 909.2,404.5 910.3,406.5 911.4,408.6 912.5,410.6 913.6,412.7 914.7,414.7 915.8,416.8 916.9,418.8 917.9,420.7 919.0,422.7 920.0,424.6 921.0,426.5 922.0,428.3 922.9,430.0 923.9,431.7 924.7,433.3 925.6,434.8 926.3,436.3 927.1,437.6 927.8,438.9 928.4,440.0 930.7,444.0 932.4,446.7 933.7,448.3 934.5,449.3 935.2,450.0 935.7,450.8 936.2,452.0 936.7,454.7 936.7,457.2 936.4,459.5 936.2,461.0" stroke="#5b6b2a" stroke-width="1.00" /><polyline points="877.6,354.6 878.1,355.6 878.6,356.6 879.1,357.9 879.8,359.2 880.5,360.7 881.2,362.2 882.0,363.9 882.8,365.7 883.7,367.5 884.6,369.5 885.6,371.5 886.6,373.6 887.7,375.8 888.8,378.0 889.9,380.3 891.1,382.7 892.3,385.1 893.6,387.5 894.3,389.0 895.1,390.6 896.0,392.2 896.9,393.9 897.8,395.7 898.8,397.5 899.8,399.4 900.8,401.3 901.8,403.3 902.9,405.3 903.9,407.3 905.0,409.3 906.1,411.4 907.2,413.4 908.3,415.5 909.4,417.6 910.5,419.6 911.6,421.6 912.6,423.6 913.7,425.5 914.7,427.4 915.7,429.3 916.7,431.1 917.7,432.9 918.6,434.6 919.5,436.2 920.3,437.7 921.1,439.2 921.8,440.5 922.5,441.8 923.2,443.0 925.6,447.1 927.5,450.1 929.0,452.0 930.0,453.3 930.4,453.7 930.4,453.6 930.4,453.6 930.8,455.2 930.7,456.8 930.4,458.7 930.2,460.3" stroke="#ff00ff" stroke-width="1.20" /><polyline points="871.3,357.6 871.7,358.6 872.2,359.6 872.8,360.8 873.4,362.2 874.1,363.6 874.8,365.2 875.6,366.9 876.5,368.7 877.4,370.5 878.3,372.5 879.3,374.5 880.3,376.7 881.4,378.9 882.5,381.1 883.6,383.5 884.8,385.8 886.1,388.3 887.3,390.7 888.1,392.2 888.9,393.8 889.8,395.5 890.7,397.2 891.6,398.9 892.6,400.8 893.6,402.7 894.6,404.6 895.6,406.6 896.7,408.6 897.8,410.6 898.9,412.6 899.9,414.7 901.0,416.7 902.1,418.8 903.2,420.9 904.3,422.9 905.4,424.9 906.5,426.9 907.5,428.9 908.6,430.8 909.6,432.6 910.6,434.5 911.5,436.2 912.4,437.9 913.3,439.5 914.1,441.1 914.9,442.5 915.7,443.9 916.4,445.1 917.1,446.5 919.6,450.7 921.7,454.0 923.5,456.4 924.7,457.9 924.9,458.0 924.2,456.9 923.7,455.5 923.8,455.9 923.7,456.3 923.5,457.8 923.3,459.5" stroke="#ffff00" stroke-width="1.30" /><polyline points="870.2,358.2 870.7,359.1 871.2,360.2 871.7,361.4 872.3,362.7 873.0,364.1 873.8,365.7 874.6,367.4 875.4,369.2 876.3,371.0 877.2,373.0 878.2,375.1 879.2,377.2 880.3,379.4 881.4,381.7 882.6,384.0 883.8,386.4 885.0,388.8 886.3,391.3 887.0,392.8 887.9,394.4 888.7,396.0 889.6,397.7 890.6,399.5 891.5,401.3 892.5,403.2 893.5,405.2 894.6,407.1 895.6,409.1 896.7,411.1 897.8,413.2 898.9,415.2 900.0,417.3 901.1,419.4 902.2,421.4 903.3,423.5 904.4,425.5 905.4,427.5 906.5,429.4 907.5,431.3 908.5,433.2 909.5,435.0 910.5,436.8 911.4,438.5 912.3,440.1 913.1,441.6 913.9,443.1 914.6,444.5 915.3,445.7 916.1,447.1 918.6,451.4 920.7,454.7 922.5,457.1 923.8,458.7 923.9,458.7 923.1,457.4 922.5,455.8 922.6,456.0 922.5,456.2 922.3,457.6 922.1,459.3" stroke="#ffffff" stroke-width="1.00" /><path d="M641.2 434.8L651.4 433.8M642.2 436.8L651.6 435.9M643.0 438.9L651.8 438.3M643.7 440.9L651.9 440.7M644.3 443.1L651.8 443.7M644.3 445.2L651.1 447.2M643.7 447.3L649.8 450.3M642.5 449.2L648.5 452.7M641.1 450.9L647.3 454.6M639.7 452.5L646.2 456.5M638.3 454.3L645.3 458.0M637.2 456.2L644.6 459.5M636.4 458.2L644.0 460.8M635.8 460.3L643.6 462.1M635.4 462.5L643.2 463.7M635.1 464.7L643.0 465.3M634.9 466.8L642.9 466.9M635.0 469.0L643.0 468.3M635.2 471.2L643.3 469.7M635.7 473.4L643.7 471.1M636.4 475.5L644.2 472.4M637.2 477.5L644.9 473.7M638.2 479.4L645.5 474.8M639.4 481.3L646.4 476.0M640.9 482.9L647.4 477.2M642.5 484.4L648.5 478.4M644.2 485.8L649.7 479.6M646.0 487.1L650.9 480.6M647.9 488.2L652.1 481.3M649.8 489.3L653.0 481.9M651.8 490.3L654.5 482.5M653.9 491.0L655.9 482.8M656.0 491.3L656.6 482.9M658.2 491.3L657.6 483.0M660.4 491.0L659.3 482.8M662.6 490.7L660.4 482.5M664.7 490.2L661.6 482.1M666.8 489.5L662.9 481.6M668.8 488.5L664.1 480.9M670.6 487.3L665.7 480.0M672.3 485.9L667.0 479.0M673.9 484.4L667.8 478.2M675.4 482.8L668.6 477.4M676.8 481.1L669.4 476.3M678.0 479.2L670.3 475.0M679.0 477.3L671.1 473.5M679.9 475.3L671.8 471.9M680.6 473.2L672.4 470.3M681.1 471.1L672.7 469.0M681.4 468.9L672.9 467.8M681.6 466.7L673.0 467.0M681.5 464.5L673.0 465.6M681.1 462.3L672.7 464.1M680.4 460.3L672.3 462.8M679.5 458.2L671.7 461.3M678.5 456.3L671.0 459.6M677.6 454.3L670.0 457.3M676.6 452.3L669.2 455.4M675.9 450.2L668.4 453.8M675.1 448.2L667.5 452.0M674.4 446.1L666.5 449.7M673.9 443.9L665.1 445.7M673.7 441.7L664.7 443.0M674.0 439.6L664.4 440.0M674.5 437.4L664.4 437.6M675.2 435.4L666.6 429.7M676.0 433.3L667.0 429.0" stroke="#ff0000" stroke-width="1.10"/><rect x="651" y="439.5" width="14" height="5" fill="#ff0000"/><path d="M653 442h3M659 442h3" stroke="#fff" stroke-width="1"/><polyline points="640.5,434.0 641.3,434.9 642.3,437.0 642.7,438.2 643.3,439.6 643.8,441.1 644.2,442.8 644.4,444.5 644.2,446.2 643.7,447.4 642.9,448.7 641.9,449.9 640.8,451.2 639.7,452.4 638.6,453.8 637.7,455.2 637.0,456.6 636.5,458.1 636.0,459.7 635.6,461.4 635.3,463.1 635.0,464.8 634.9,466.5 634.9,468.1 635.0,469.7 635.2,471.3 635.6,472.8 636.0,474.4 636.5,475.9 637.2,477.4 637.9,478.9 638.7,480.2 639.6,481.5 640.6,482.7 641.8,483.9 643.2,485.0 644.6,486.1 646.0,487.0 647.4,487.9 648.8,488.7 650.0,489.4 651.7,490.2 653.2,490.8 654.6,491.2 656.2,491.3 658.0,491.3 659.3,491.2 660.7,491.0 662.2,490.8 663.8,490.4 665.3,490.0 666.9,489.4 668.3,488.8 669.7,488.0 670.9,487.2 672.0,486.2 673.2,485.2 674.3,484.0 675.4,482.8 676.4,481.5 677.3,480.2 678.2,478.9 678.9,477.6 679.6,476.1 680.2,474.5 680.7,472.9 681.1,471.2 681.4,469.5 681.6,467.8 681.6,466.2 681.5,464.5 681.3,463.0 680.8,461.5 680.2,460.0 679.6,458.5 678.9,456.9 678.1,455.5 677.4,454.0 676.8,452.7 676.3,451.4 675.7,449.6 675.1,448.0 674.6,446.5 674.1,445.1 673.8,443.7 673.7,442.3 673.8,440.6 674.1,438.9 674.6,437.2 675.1,435.7 675.5,434.5 676.4,432.5 677.0,431.5" stroke="#5b6b2a" stroke-width="1.00" /><polyline points="641.7,433.0 642.7,434.1 643.8,436.4 644.2,437.6 644.8,439.0 645.3,440.7 645.8,442.5 646.0,444.5 645.8,446.6 645.1,448.2 644.2,449.6 643.2,450.9 642.1,452.2 640.9,453.5 639.9,454.7 639.1,456.0 638.5,457.2 638.0,458.6 637.5,460.1 637.1,461.7 636.8,463.3 636.6,464.9 636.5,466.5 636.5,468.1 636.6,469.5 636.8,471.0 637.1,472.5 637.5,473.9 638.0,475.3 638.6,476.7 639.3,478.1 640.0,479.4 640.9,480.5 641.8,481.6 642.9,482.7 644.2,483.8 645.5,484.8 646.9,485.7 648.3,486.6 649.6,487.3 650.7,488.0 652.4,488.8 653.7,489.3 654.9,489.6 656.2,489.7 657.9,489.7 659.1,489.6 660.5,489.4 661.9,489.2 663.4,488.9 664.9,488.5 666.3,488.0 667.6,487.4 668.8,486.7 669.9,485.9 671.0,485.0 672.1,484.0 673.2,482.9 674.2,481.8 675.1,480.6 676.0,479.3 676.8,478.1 677.5,476.9 678.1,475.5 678.7,474.0 679.2,472.5 679.5,470.9 679.8,469.3 680.0,467.7 680.0,466.2 679.9,464.7 679.7,463.4 679.3,462.0 678.8,460.6 678.1,459.1 677.4,457.6 676.7,456.2 676.0,454.7 675.3,453.3 674.8,452.0 674.2,450.2 673.6,448.6 673.0,447.0 672.6,445.5 672.3,443.9 672.1,442.3 672.2,440.4 672.6,438.5 673.1,436.7 673.6,435.2 674.0,433.9 674.9,431.8 675.6,430.6" stroke="#ff00ff" stroke-width="1.00" /><polyline points="651.0,430.0 651.1,431.0 651.2,432.2 651.3,433.7 651.5,435.3 651.7,437.1 651.8,439.0 651.9,440.9 651.8,442.7 651.7,444.5 651.4,446.2 651.0,447.7 650.4,449.2 649.6,450.7 648.8,452.2 647.9,453.7 647.0,455.1 646.2,456.6 645.3,458.0 644.6,459.4 644.0,460.7 643.6,461.9 643.2,463.7 643.0,465.3 642.9,466.9 643.0,468.3 643.3,469.7 643.7,471.1 644.2,472.4 644.9,473.8 645.8,475.2 646.8,476.5 647.9,477.8 649.1,479.0 650.3,480.0 651.4,480.9 652.9,481.8 654.5,482.5 656.0,482.9 657.6,483.0 659.3,482.8 660.8,482.4 662.4,481.8 664.1,481.0 665.7,480.0 667.1,478.9 668.4,477.6 669.4,476.4 670.3,475.0 671.1,473.5 671.8,471.9 672.4,470.3 672.8,468.6 673.0,467.1 673.0,465.6 672.7,464.1 672.2,462.6 671.6,461.1 671.0,459.6 670.3,458.1 669.7,456.6 669.1,455.1 668.4,453.7 667.7,452.2 666.9,450.7 666.2,449.3 665.7,447.8 665.2,446.2 664.9,444.5 664.6,442.7 664.5,440.9 664.4,439.1 664.4,437.3 664.4,435.8 664.5,434.4 665.2,431.9 666.2,430.2 667.0,429.0" stroke="#ffffff" stroke-width="1.20" /><polyline points="650.0,430.1 650.1,431.0 650.2,432.3 650.4,433.8 650.5,435.4 650.7,437.2 650.8,439.0 650.9,440.9 650.8,442.7 650.7,444.4 650.4,446.0 650.0,447.3 649.5,448.7 648.7,450.2 647.9,451.7 647.1,453.2 646.2,454.6 645.3,456.1 644.5,457.5 643.7,458.9 643.1,460.3 642.6,461.6 642.2,463.5 642.0,465.3 641.9,466.9 642.0,468.4 642.3,469.9 642.7,471.4 643.3,472.8 644.0,474.3 644.9,475.7 646.0,477.2 647.2,478.5 648.4,479.7 649.6,480.8 650.8,481.7 652.5,482.7 654.1,483.4 655.9,483.9 657.7,484.0 659.5,483.8 661.1,483.4 662.8,482.7 664.5,481.8 666.2,480.8 667.8,479.6 669.1,478.3 670.2,477.0 671.1,475.5 672.0,473.9 672.7,472.3 673.3,470.5 673.8,468.8 674.0,467.2 673.9,465.5 673.6,463.9 673.1,462.3 672.5,460.7 671.9,459.2 671.2,457.7 670.6,456.2 670.0,454.7 669.3,453.2 668.5,451.8 667.8,450.3 667.2,448.9 666.6,447.4 666.2,446.0 665.9,444.4 665.6,442.6 665.5,440.8 665.4,439.1 665.4,437.4 665.4,435.8 665.5,434.6 666.1,432.3 667.1,430.7 667.8,429.6" stroke="#ffff00" stroke-width="1.00" /><path d="M937.8 460.8L937.4 471.4M940.9 460.3L940.3 471.5M944.1 459.9L942.4 471.7M947.3 459.7L944.4 472.0M950.5 460.1L945.6 472.3M953.5 461.3L947.0 472.9M956.2 463.0L948.0 473.6M958.5 465.2L948.0 473.6M960.3 467.8L948.9 474.7M961.5 470.8L949.6 476.1M962.2 473.9L950.1 477.8M962.6 477.1L950.4 479.5M962.7 480.2L950.6 481.4M962.4 483.4L950.7 483.3M961.7 486.6L950.5 485.1M960.9 489.7L950.2 486.8M960.0 492.7L949.7 488.2M959.0 495.8L949.0 489.3M957.5 498.5L949.0 489.3M955.0 500.5L948.2 490.0M951.9 501.4L947.1 490.6M948.7 501.7L945.7 491.0M945.5 501.9L944.3 491.2M942.3 502.0L941.7 491.5M939.1 502.1L938.6 491.6M935.9 502.0L934.8 491.9M932.7 501.8L929.8 493.0M929.5 501.8L926.6 494.3M926.4 502.0L923.7 495.4M923.3 503.0L921.2 496.3M920.5 504.4L918.6 497.1M917.6 505.8L916.9 497.4M914.4 506.2L915.7 497.4M911.3 505.9L914.6 497.2M908.7 504.0L913.3 496.5M906.9 501.4L912.0 495.5M905.5 498.5L910.9 494.1M904.1 495.6L909.9 492.6M903.0 492.6L908.9 490.4M902.1 489.6L908.1 487.9M901.7 486.4L907.7 485.8M902.3 483.3L907.7 484.4M903.7 480.4L908.2 483.1M905.4 477.7L909.2 481.8M907.5 475.3L911.1 480.2M910.0 473.2L915.2 470.1" stroke="#ff0000" stroke-width="1.00"/><polyline points="928.4,440.0 929.0,440.8 929.8,441.9 930.7,443.2 931.8,444.7 932.8,446.2 933.9,447.8 934.8,449.3 935.6,450.7 936.2,452.0 936.5,454.1 936.1,456.3 935.6,458.2 935.4,459.8 936.2,460.9 937.2,461.2 938.4,461.2 939.9,461.0 941.6,460.8 943.4,460.4 945.2,460.1 946.9,459.9 948.6,459.8 950.0,460.0 951.7,460.5 953.3,461.2 954.8,462.1 956.2,463.1 957.5,464.2 958.7,465.4 959.7,466.7 960.4,467.9 961.0,469.3 961.5,470.8 961.9,472.3 962.2,473.9 962.5,475.4 962.6,477.0 962.7,478.5 962.7,480.2 962.6,481.9 962.3,483.7 962.0,485.4 961.6,487.1 961.2,488.7 960.7,490.3 960.2,491.9 959.8,493.5 959.3,495.1 958.7,496.6 957.9,497.9 957.0,499.1 955.8,500.1 954.7,500.7 953.4,501.1 951.9,501.4 950.4,501.6 948.7,501.7 947.1,501.8 945.4,501.9 943.7,501.9 942.0,502.0 940.5,502.1 938.9,502.1 937.3,502.0 935.6,501.9 933.9,501.9 932.3,501.8 930.7,501.8 929.2,501.8 927.7,501.8 926.4,502.0 924.7,502.4 923.1,503.0 921.7,503.7 920.4,504.5 919.1,505.2 917.8,505.7 916.6,506.0 914.9,506.2 913.3,506.3 911.7,506.1 910.2,505.4 908.7,504.0 908.0,503.1 907.3,501.9 906.5,500.5 905.7,499.1 904.9,497.5 904.2,495.8 903.5,494.2 902.9,492.5 902.4,491.0 902.1,489.6 901.8,488.3 901.7,486.3 902.0,484.5 902.5,482.8 903.2,481.3 904.0,479.8 904.8,478.5 906.0,477.0 907.5,475.6 909.1,474.3 910.2,473.3 910.7,472.6 910.0,473.4 907.9,474.8 904.8,472.6 904.3,471.8 903.8,470.9 903.2,469.9 902.6,468.7 901.9,467.4 901.2,466.0 900.5,464.5 899.7,462.9 898.9,461.3 898.2,459.7 897.4,458.0 896.6,456.3 895.8,454.6 895.0,452.9 894.3,451.3 893.5,449.7 892.8,448.1 892.2,446.6 891.5,445.2 890.9,443.9 890.4,442.7 889.9,441.7 889.5,440.8 889.1,440.0" stroke="#5b6b2a" stroke-width="1.00" /><polyline points="914.6,440.0 915.0,440.8 915.4,441.9 915.9,443.1 916.5,444.4 917.1,445.9 917.8,447.5 918.5,449.2 919.3,450.9 920.0,452.7 920.8,454.5 921.6,456.2 922.3,457.9 923.0,459.6 923.7,461.2 924.4,462.6 925.0,463.9 925.5,465.0 926.0,466.0 927.3,468.7 927.8,469.8 928.4,470.2 930.3,470.7 931.5,471.0 932.9,471.2 934.6,471.3 936.5,471.3 938.4,471.4 940.3,471.5 942.2,471.7 944.0,471.9 945.6,472.3 947.0,472.9 948.0,473.6 948.9,474.7 949.6,476.1 950.1,477.8 950.5,479.6 950.6,481.4 950.7,483.3 950.5,485.1 950.2,486.8 949.7,488.2 949.0,489.3 948.2,490.0 947.1,490.6 945.7,491.0 944.3,491.2 942.7,491.4 941.0,491.5 939.2,491.6 937.4,491.7 935.6,491.8 933.9,492.0 932.3,492.3 930.8,492.7 929.3,493.2 927.7,493.8 926.1,494.4 924.4,495.1 922.8,495.7 921.3,496.3 919.7,496.8 918.3,497.2 916.9,497.4 915.7,497.4 914.6,497.2 913.3,496.5 912.0,495.5 910.9,494.1 909.9,492.6 909.1,490.9 908.4,489.1 908.0,487.4 907.7,485.8 907.7,484.4 908.2,483.1 909.2,481.8 910.6,480.6 912.1,479.5 913.7,478.3 915.1,477.2 916.1,475.9 916.6,474.6 916.6,473.4 916.3,472.2 915.7,471.0 915.0,469.7 914.1,468.4 913.1,467.0 912.1,465.5 911.0,463.8 910.0,462.0 909.4,460.8 908.8,459.5 908.1,458.1 907.3,456.6 906.5,455.1 905.7,453.5 904.9,451.8 904.1,450.2 903.3,448.6 902.5,447.1 901.8,445.6 901.1,444.2 900.4,442.9 899.9,441.8 899.4,440.8 899.0,440.0" stroke="#ffffff" stroke-width="1.10" /><polyline points="915.5,439.6 915.9,440.4 916.3,441.5 916.8,442.7 917.4,444.0 918.1,445.5 918.7,447.1 919.5,448.8 920.2,450.5 920.9,452.3 921.7,454.1 922.5,455.8 923.2,457.5 923.9,459.2 924.6,460.7 925.3,462.2 925.9,463.5 926.4,464.6 926.9,465.6 928.2,468.3 928.5,469.2 928.8,469.2 930.6,469.7 931.6,470.0 933.0,470.2 934.7,470.3 936.5,470.3 938.4,470.4 940.4,470.5 942.3,470.7 944.2,471.0 945.9,471.4 947.4,472.0 948.7,472.9 949.7,474.2 950.5,475.8 951.1,477.5 951.4,479.4 951.6,481.4 951.7,483.4 951.5,485.3 951.2,487.0 950.6,488.6 949.8,489.9 948.7,490.9 947.4,491.5 946.0,492.0 944.4,492.2 942.7,492.4 941.0,492.5 939.2,492.6 937.5,492.7 935.7,492.8 934.1,493.0 932.5,493.3 931.1,493.7 929.6,494.2 928.1,494.7 926.4,495.4 924.8,496.0 923.2,496.7 921.6,497.3 920.0,497.8 918.5,498.2 917.0,498.4 915.6,498.4 914.3,498.1 912.7,497.4 911.3,496.2 910.1,494.7 909.1,493.0 908.2,491.3 907.5,489.4 907.0,487.6 906.7,485.9 906.7,484.2 907.3,482.6 908.5,481.1 909.9,479.8 911.5,478.7 913.1,477.6 914.4,476.5 915.3,475.4 915.6,474.4 915.6,473.5 915.3,472.5 914.8,471.4 914.1,470.2 913.3,469.0 912.3,467.6 911.2,466.0 910.2,464.3 909.1,462.5 908.5,461.3 907.9,460.0 907.2,458.6 906.4,457.1 905.6,455.5 904.8,453.9 904.0,452.3 903.2,450.7 902.4,449.1 901.6,447.5 900.9,446.0 900.2,444.6 899.5,443.3 899.0,442.2 898.5,441.2 898.1,440.4" stroke="#ffff00" stroke-width="1.10" /><polyline points="920.6,437.4 920.9,438.3 921.4,439.3 921.9,440.5 922.5,441.9 923.1,443.4 923.8,445.0 924.5,446.7 925.2,448.4 926.0,450.1 926.8,451.9 927.5,453.6 928.3,455.3 929.0,457.0 929.7,458.5 930.3,459.9 930.9,461.1 931.4,462.2 931.9,463.2 933.2,466.0 932.8,465.6 930.6,464.0 932.0,464.4 932.6,464.6 933.5,464.7 935.0,464.8 936.7,464.9 938.7,464.9 940.8,465.0 943.0,465.2 945.2,465.5 947.6,466.1 950.0,467.1 952.5,469.0 954.4,471.3 955.6,473.7 956.4,476.1 956.9,478.6 957.1,481.1 957.2,483.5 957.0,486.0 956.5,488.5 955.6,491.0 954.0,493.5 951.7,495.5 949.4,496.6 947.2,497.3 945.2,497.7 943.2,497.9 941.3,498.0 939.5,498.1 937.8,498.2 936.2,498.3 934.9,498.4 933.7,498.6 932.7,498.9 931.4,499.3 930.0,499.9 928.5,500.5 926.9,501.1 925.1,501.8 923.4,502.5 921.5,503.1 919.6,503.5 917.5,503.9 915.2,503.9 912.4,503.3 909.7,501.9 907.4,500.0 905.6,497.9 904.2,495.7 903.1,493.4 902.2,491.1 901.6,488.8 901.2,486.4 901.3,483.3 902.5,479.8 904.6,477.2 906.5,475.5 908.3,474.2 909.7,473.2 910.5,472.6 910.5,472.7 910.2,473.5 910.1,474.3 910.1,474.3 910.0,474.0 909.5,473.2 908.7,472.1 907.8,470.7 906.6,469.1 905.4,467.1 904.3,465.1 903.6,463.8 903.0,462.5 902.2,461.1 901.5,459.6 900.7,458.0 899.9,456.4 899.1,454.7 898.3,453.1 897.5,451.5 896.7,449.9 896.0,448.5 895.3,447.1 894.6,445.8 894.1,444.7 893.6,443.7 893.2,442.9" stroke="#ff00ff" stroke-width="1.10" /><path d="M467.1 537.0L452.1 537.7M467.0 539.0L452.2 539.7M466.8 541.0L452.2 541.6M466.4 542.9L452.3 543.2M465.9 544.9L452.3 544.7M465.4 546.8L452.3 545.9M464.8 548.7L452.1 547.6M464.1 550.6L452.0 548.5M463.2 552.4L451.9 549.0M462.1 554.1L451.5 550.1M460.9 555.7L451.2 550.8M459.6 557.2L450.7 551.6M458.2 558.6L450.2 552.4M456.7 559.8L449.2 553.6M454.9 560.9L448.3 554.6M453.1 561.5L446.1 557.6M451.1 562.0L445.5 558.5M449.1 562.3L445.3 558.9M447.1 562.5L445.3 558.9M445.2 562.6L443.8 559.5M443.2 562.8L442.6 560.0" stroke="#ff0000" stroke-width="1.10"/><polyline points="452.0,536.0 452.0,537.0 452.1,538.5 452.2,540.2 452.3,542.1 452.3,544.0 452.3,545.9 452.1,547.6 451.9,549.0 451.2,550.8 450.2,552.4 449.1,553.7 448.0,554.9 447.0,556.0 446.1,557.6 445.3,558.9 443.0,559.9 441.9,560.1 440.6,560.3 439.1,560.5 437.4,560.7 435.6,560.8 433.8,560.9 431.9,561.1 430.2,561.2 428.6,561.3 427.1,561.4 425.9,561.4 425.0,561.5" stroke="#5b6b2a" stroke-width="1.00" /><polyline points="467.2,536.0 467.1,537.2 467.0,538.9 466.8,540.9 466.4,543.0 466.1,544.3 465.7,545.7 465.3,547.1 464.9,548.6 464.3,550.1 463.7,551.6 462.9,552.9 462.0,554.2 461.1,555.5 460.0,556.8 458.9,558.0 457.7,559.1 456.3,560.1 454.9,560.9 453.4,561.5 451.7,561.9 449.9,562.2 447.9,562.4 446.1,562.6 444.4,562.7 443.0,562.8 442.0,562.9" stroke="#ffffff" stroke-width="1.20" /><polyline points="466.0,535.9 465.9,537.1 465.8,538.8 465.6,540.7 465.2,542.7 464.9,544.0 464.6,545.4 464.2,546.8 463.7,548.3 463.2,549.7 462.6,551.0 461.9,552.3 461.1,553.5 460.1,554.8 459.1,556.0 458.1,557.1 456.9,558.2 455.7,559.1 454.4,559.8 453.1,560.3 451.5,560.7 449.7,561.0 447.8,561.2 446.0,561.4 444.3,561.5 442.9,561.6 441.9,561.7" stroke="#ffff00" stroke-width="1.20" /><path d="M479.5 539.0L489.2 540.4M479.3 541.0L488.9 542.4M479.2 543.0L488.7 544.1M479.1 545.0L488.6 545.6M479.3 547.0L488.5 546.9M479.7 548.9L488.6 548.2M480.1 550.9L488.8 549.6M480.6 552.8L489.0 550.6M481.2 554.7L489.4 552.1M482.0 556.6L489.8 553.3M483.1 558.3L490.4 554.6M484.4 559.8L491.2 556.1M485.9 561.1L491.8 557.0M487.5 562.2L492.3 557.7M489.2 563.2L493.4 558.8M491.1 564.0L494.4 559.6M493.0 564.5L495.3 560.2M495.0 564.7L496.6 560.8M497.0 564.8L498.1 561.4M499.0 564.8L499.8 561.8" stroke="#ff0000" stroke-width="1.10"/><polyline points="489.5,538.0 489.4,539.1 489.2,540.6 488.9,542.4 488.7,544.3 488.5,546.3 488.6,548.2 488.8,549.9 489.2,551.5 489.7,553.1 490.4,554.6 491.2,556.1 492.2,557.5 493.4,558.8 494.8,559.9 496.0,560.6 497.5,561.1 499.1,561.6 500.8,562.1 502.5,562.5 504.3,562.8 506.1,563.1 507.8,563.4 509.3,563.7 510.7,563.9 512.7,564.2 514.6,564.4 516.3,564.4 517.8,564.5 519.1,564.5 520.0,564.5" stroke="#5b6b2a" stroke-width="1.00" /><polyline points="479.6,538.0 479.5,539.2 479.3,540.8 479.2,542.8 479.1,544.8 479.3,546.9 479.6,548.4 479.9,550.0 480.3,551.7 480.8,553.4 481.4,555.1 482.0,556.6 482.8,557.9 483.8,559.2 485.1,560.5 486.4,561.5 487.8,562.5 489.3,563.2 490.8,563.9 492.5,564.4 494.4,564.6 496.3,564.8 498.1,564.8 499.7,564.8 500.8,564.9" stroke="#ffffff" stroke-width="1.20" /><polyline points="480.8,538.1 480.7,539.3 480.5,540.9 480.4,542.8 480.3,544.8 480.5,546.8 480.7,548.2 481.1,549.8 481.5,551.4 481.9,553.1 482.5,554.6 483.1,556.0 483.8,557.2 484.7,558.5 485.9,559.6 487.1,560.6 488.4,561.4 489.8,562.2 491.2,562.8 492.7,563.2 494.5,563.4 496.4,563.6 498.2,563.6 499.7,563.6 500.9,563.7" stroke="#ffff00" stroke-width="1.20" /><path d="M521.0 367.5V391.5M522.6 367.5V391.5M524.2 367.5V391.5M525.8 367.5V391.5M527.4 367.5V391.5M529.0 367.5V391.5M530.6 367.5V391.5M532.2 367.5V391.5M533.8 367.5V391.5M535.4 367.5V391.5M537.0 367.5V391.5M538.6 367.5V391.5M540.2 367.5V391.5M541.8 367.5V391.5" stroke="#ff0000" stroke-width="1.2"/><polygon points="755.5,371.9 765.5,367.9 772.5,391.8 762.5,395.8" fill="#ff0000" stroke="none" /><polygon points="750.5,359.0 759.5,356.0 760.0,366.0 751.0,370.0" fill="#ff0000" stroke="none" /></svg> </div>
</div>
<div id="dlg"><div id="dtitle"></div>
<svg style="position:absolute;left:9px;top:6px" width="14" height="16" viewBox="0 0 14 16">
<path d="M1 4 L7 1 L13 4 L7 7 Z" fill="#8fb88f"/><path d="M1 4 L7 7 L7 15 L1 12 Z" fill="#f4f4f4"/><path d="M7 7 L13 4 L13 12 L7 15 Z" fill="#4f7f5f"/>
<text x="2" y="12" font-size="5" fill="#d02020" font-family="Liberation Sans">12</text></svg>
<div class="t " style="left:30.0px;top:7.8px;color:#fff;font-size:11.8px">X Section Filter</div>
<div style="position:absolute;left:167px;top:14px;width:10px;height:1px;background:#fff"></div>
<div style="position:absolute;left:212px;top:9px;width:10px;height:10px;border:1px solid #3d83c8"></div>
<svg style="position:absolute;left:258px;top:9px" width="11" height="11" viewBox="0 0 11 11"><path d="M0.5 0.5L10.5 10.5M10.5 0.5L0.5 10.5" stroke="#fff" stroke-width="1.1"/></svg>
<div class="grp" style="left:5.5px;top:42.0px;width:274.0px;height:135.5px;"></div>
<div class="t " style="left:14.0px;top:35.8px;background:#f0f0f0;padding:0 1px">Main Selections</div>
<div class="t " style="left:12.4px;top:55.8px;">Function name</div>
<div class="inp" style="left:140.0px;top:55.0px;width:111.0px;height:18.0px;"></div>
<div class="ib" style="left:253.0px;top:55.0px;width:21.5px;height:19.5px;"></div>
<div class="t " style="left:12.4px;top:79.8px;">Model of Sections</div>
<div class="inp" style="left:140.0px;top:79.0px;width:111.0px;height:18.0px;"></div>
<div class="ib" style="left:253.0px;top:79.0px;width:21.5px;height:19.5px;"></div>
<div class="t " style="left:12.4px;top:103.8px;">Filter Model Name</div>
<div class="inp" style="left:140.0px;top:103.0px;width:111.0px;height:18.0px;"></div>
<div class="ib" style="left:253.0px;top:103.0px;width:21.5px;height:19.5px;"></div>
<div class="t " style="left:12.4px;top:127.8px;">Filter Section Colour</div>
<div class="inp" style="left:140.0px;top:127.0px;width:111.0px;height:18.0px;"></div>
<div class="ib" style="left:253.0px;top:127.0px;width:21.5px;height:19.5px;"></div>
<div class="t " style="left:12.4px;top:151.8px;">Filter Chainage Interval</div>
<div class="inp" style="left:140.0px;top:151.0px;width:111.0px;height:18.0px;"></div>
<div class="ib" style="left:253.0px;top:151.0px;width:21.5px;height:19.5px;"></div>
<div style="position:absolute;left:143px;top:58px;width:1px;height:13px;background:#000"></div>
<div class="t " style="left:143.0px;top:130.2px;">cyan</div>
<div class="t " style="left:143.0px;top:154.2px;">20</div>
<svg style="position:absolute;left:255.0px;top:56.0px" width="18" height="16" viewBox="0 0 18 16"><text x="0.5" y="14" font-family="Liberation Serif" font-style="italic" font-weight="bold" font-size="16" fill="#8b0d0d">fx</text></svg>
<svg style="position:absolute;left:255.0px;top:80.0px" width="18" height="16" viewBox="0 0 18 16"><path d="M1 7 L9 3 L17 7 L9 11 Z" fill="#7ab8ec"/><path d="M1 7 L9 11 L17 7 L17 9.5 L9 13.5 L1 9.5 Z" fill="#e01020"/><path d="M1 9.5 L9 13.5 L17 9.5 L17 12 L9 16 L1 12 Z" fill="#2050a0"/></svg>
<svg style="position:absolute;left:255.0px;top:104.0px" width="18" height="16" viewBox="0 0 18 16"><path d="M1 7 L9 3 L17 7 L9 11 Z" fill="#7ab8ec"/><path d="M1 7 L9 11 L17 7 L17 9.5 L9 13.5 L1 9.5 Z" fill="#e01020"/><path d="M1 9.5 L9 13.5 L17 9.5 L17 12 L9 16 L1 12 Z" fill="#2050a0"/></svg>
<div style="position:absolute;left:255px;top:129px;width:17px;height:15px;background:#00ffff"></div>
<svg style="position:absolute;left:255.0px;top:153.0px" width="18" height="16" viewBox="0 0 18 16"><rect x="0.5" y="1" width="3" height="14" fill="#f0f080" stroke="#b0a020" stroke-width="0.6"/><ellipse cx="12" cy="8" rx="5.5" ry="5" fill="#2a7ad8"/><ellipse cx="11" cy="6.5" rx="3" ry="2" fill="#7ab8f0"/></svg>
<div class="t " style="left:12.7px;top:184.0px;">Design Sections</div>
<div class="cb" style="left:124.0px;top:185.0px;width:12.0px;height:12.0px;"><svg width="10" height="10" viewBox="0 0 10 10" style="position:absolute;left:0;top:0"><path d="M1.5 4.8 L3.8 7.4 L8.6 1.8" stroke="#000" stroke-width="1.8" fill="none"/></svg></div>
<div class="t " style="left:163.1px;top:183.9px;">Existing Sections</div>
<div class="cb" style="left:263.0px;top:185.0px;width:12.0px;height:12.0px;"></div>
<div class="grp" style="left:5.5px;top:211.3px;width:274.0px;height:154.5px;"></div>
<div class="t " style="left:14.0px;top:204.9px;background:#f0f0f0;padding:0 1px">Filter Options</div>
<div class="t " style="left:14.7px;top:225.7px;">Include Start Section</div>
<div class="cb" style="left:261.3px;top:227.3px;width:12.0px;height:12.0px;"></div>
<div class="t " style="left:14.7px;top:248.7px;">Include End Section</div>
<div class="cb" style="left:261.3px;top:250.1px;width:12.0px;height:12.0px;"></div>
<div class="t dis" style="left:14.7px;top:271.6px;">Include Tangent Sections</div>
<div class="cb" style="left:261.3px;top:273.0px;width:12.0px;height:12.0px;background:#f0f0f0"></div>
<div class="t dis" style="left:12.2px;top:294.1px;">TC&nbsp; CT tolerance +/-</div>
<div class="inp" style="left:140.0px;top:293.2px;width:111.0px;height:18.0px;background:#f0f0f0"></div>
<div class="t dis" style="left:143.0px;top:294.3px;">0</div>
<div class="ib" style="left:253.0px;top:293.0px;width:21.5px;height:19.5px;background:#a0a0a0"></div>
<div class="t " style="left:12.2px;top:318.2px;">Special Chainage File</div>
<div class="inp" style="left:140.0px;top:317.2px;width:111.0px;height:18.0px;"></div>
<div class="ib" style="left:253.0px;top:317.0px;width:21.5px;height:19.5px;"></div>
<svg style="position:absolute;left:255.0px;top:319.0px" width="18" height="16" viewBox="0 0 18 16"><path d="M1.5 4 L6 3 L7.5 4.5 L16 4 L16.5 14 L2 14.5 Z" fill="#f2d800" stroke="#c8a800" stroke-width="0.6"/><circle cx="9.5" cy="9" r="2" fill="none" stroke="#806000" stroke-width="0.8"/><path d="M11 10.5 L12.5 12" stroke="#806000" stroke-width="0.8"/></svg>
<div class="pb" style="left:31.2px;top:340.0px;width:58.0px;height:20.5px;">Reference</div>
<div class="inp" style="left:130.3px;top:341.3px;width:122.5px;height:18.0px;background:#f0f0f0"></div>
<div class="inp" style="left:5.5px;top:371.0px;width:273.5px;height:18.2px;background:#f0f0f0"></div>
<div class="pb" style="left:27.0px;top:393.2px;width:46.0px;height:20.7px;">Process</div>
<div class="pb" style="left:120.2px;top:393.2px;width:46.0px;height:20.7px;">Finish</div>
<div class="pb" style="left:212.1px;top:393.2px;width:46.0px;height:20.7px;">Help</div></div>
</body></html>
